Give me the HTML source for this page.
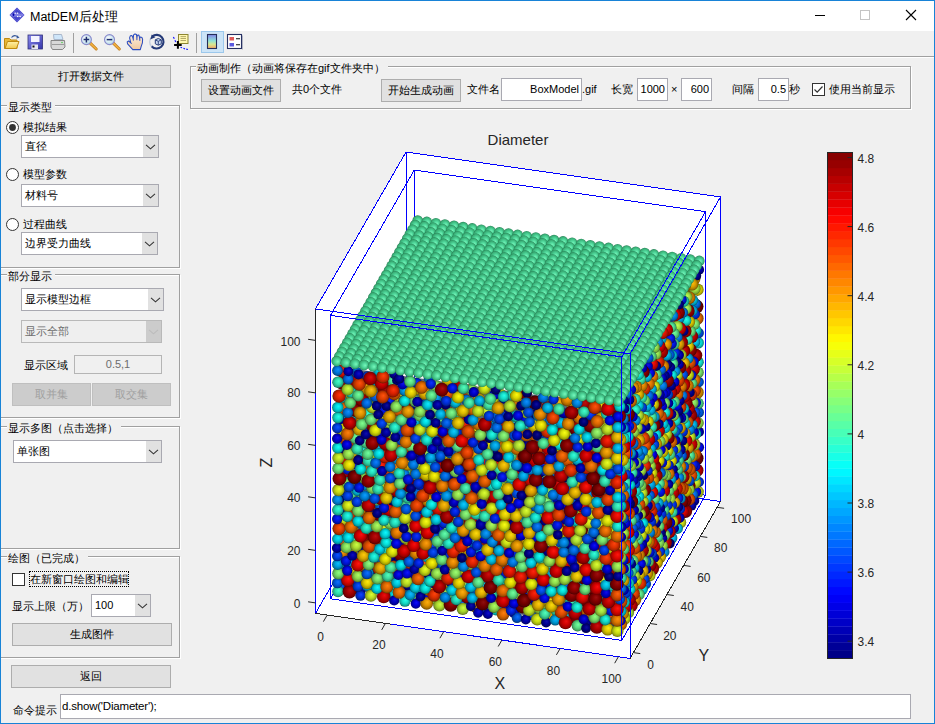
<!DOCTYPE html><html><head><meta charset="utf-8"><style>
*{box-sizing:border-box;margin:0;padding:0}
html,body{width:935px;height:724px;overflow:hidden;background:#f0f0f0}
body{position:relative;font-family:"Liberation Sans",sans-serif;font-size:11px;color:#000}
div{position:absolute}
.t{white-space:nowrap;line-height:14px;font-size:11px}
.fr{border:1px solid #a0a0a0;box-shadow:inset 1px 1px 0 #fff,1px 1px 0 #fff}
.btn{background:#e1e1e1;border:1px solid #adadad;text-align:center;white-space:nowrap}
.btn.dis{background:#cccccc;border-color:#bfbfbf;color:#a0a0a0}
.dd{background:#fff;border:1px solid #a9a9b1;padding-left:3px;white-space:nowrap;overflow:hidden}
.dd .arr{right:0;top:0;bottom:0;background:#e1e1e1}
.dd.dis{background:#efefef;border-color:#b9b9b9;color:#6d6d6d}
.dd.dis .arr{background:#cccccc}
.ed{background:#fff;border:1px solid #a9a9b1;padding:0 2px;white-space:nowrap;overflow:hidden}
.ed.dis{background:#f0f0f0;color:#6d6d6d;border-color:#b5b5b5}
</style></head><body><div style="left:0;top:0;width:935px;height:724px;border:1px solid #1883d7;z-index:50;pointer-events:none"></div><div style="left:0;top:0;width:935px;height:31px;background:#fff"></div><svg style="position:absolute;left:9px;top:7px" width="16" height="16" viewBox="0 0 16 16"><path d="M8 0.5L15.5 8L8 15.5L0.5 8Z" fill="#4646cc"/><path d="M8 2L14 8L8 14L2 8Z" fill="none" stroke="#7a7ae0" stroke-width="0.7" stroke-dasharray="1 1"/><ellipse cx="8" cy="8" rx="7" ry="1.8" fill="#7c7ce2"/><rect x="5.5" y="5.6" width="1.4" height="1.2" fill="#fff"/><rect x="7.8" y="5.6" width="1.4" height="1.2" fill="#fff"/><rect x="8" y="8.9" width="1.4" height="1.2" fill="#fff"/><rect x="10.4" y="8.9" width="1.4" height="1.2" fill="#fff"/><ellipse cx="4.5" cy="7.8" rx="0.9" ry="1.3" fill="#0000a8"/></svg><div class="t" style="left:30px;top:10px;font-size:12.5px;line-height:15px">MatDEM后处理</div><div style="left:815px;top:15px;width:10px;height:1px;background:#000"></div><div style="left:860px;top:10px;width:10px;height:10px;border:1px solid #c4c4c4"></div><svg style="position:absolute;left:905px;top:9px" width="12" height="12" viewBox="0 0 12 12"><path d="M1 1L11 11M11 1L1 11" stroke="#000" stroke-width="1.1"/></svg><svg style="position:absolute;left:0;top:28px" width="260" height="28" viewBox="0 28 260 28">
<defs>
<linearGradient id="tfold" x1="0" y1="0" x2="0" y2="1"><stop offset="0" stop-color="#fff1a8"/><stop offset="1" stop-color="#f2c94c"/></linearGradient>
<linearGradient id="tsave" x1="0" y1="0" x2="1" y2="1"><stop offset="0" stop-color="#8c8cf0"/><stop offset="1" stop-color="#3434a8"/></linearGradient>
<linearGradient id="tcb" x1="0" y1="0" x2="0" y2="1"><stop offset="0" stop-color="#8484e8"/><stop offset="0.45" stop-color="#8ee3d8"/><stop offset="0.7" stop-color="#d8e890"/><stop offset="1" stop-color="#f4a868"/></linearGradient>
<radialGradient id="tlens" cx="0.4" cy="0.4" r="0.6"><stop offset="0" stop-color="#ffffff"/><stop offset="1" stop-color="#b8dcea"/></radialGradient>
<linearGradient id="thand" x1="0" y1="0" x2="0" y2="1"><stop offset="0" stop-color="#fdf1e0"/><stop offset="1" stop-color="#f0c8a0"/></linearGradient>
</defs>
<!-- folder -->
<path d="M4.5 38.5h5l1.5 1.5h6v8.5h-12.5z" fill="#e8b838" stroke="#c08a10" stroke-width="1"/>
<path d="M5 48.5l2.5-7h11.5l-2.5 7z" fill="url(#tfold)" stroke="#c08a10" stroke-width="1"/>
<path d="M11.5 37.5q3-3.5 6.5-0.5" fill="none" stroke="#3a5a9a" stroke-width="1.1"/>
<path d="M17 35.2l2.5 2.5l-3 0.8z" fill="#3a5a9a"/>
<!-- save -->
<rect x="28" y="35" width="14.5" height="14" fill="url(#tsave)" stroke="#30307a" stroke-width="0.8"/>
<rect x="31" y="36" width="8.5" height="6" fill="#f4f4ff"/>
<rect x="31.5" y="44.5" width="6.5" height="4.5" fill="#e8e8f0"/>
<rect x="32.5" y="45.5" width="2" height="2" fill="#111"/>
<!-- printer -->
<path d="M53.5 34.5h8l1.5 5h-9z" fill="#cfe6fa" stroke="#9aaac0" stroke-width="0.8"/>
<path d="M51 40.5h13.5l0.5 6.5l-2.5 2.5h-10l-1.5-2.5z" fill="#d8d8d8" stroke="#7a7a7a" stroke-width="0.9"/>
<path d="M52 44.5h12" stroke="#8c8c8c" stroke-width="0.8"/>
<circle cx="62" cy="42.5" r="0.7" fill="#3c3"/>
<!-- separator -->
<rect x="73" y="33" width="1" height="20" fill="#a0a0a0"/>
<!-- zoom in -->
<path d="M90.2 43.2l6 5.8" stroke="#c07a18" stroke-width="3" stroke-linecap="round"/>
<path d="M90.2 43.2l6 5.8" stroke="#f0b040" stroke-width="1.6" stroke-linecap="round"/>
<circle cx="86.4" cy="39.6" r="5" fill="url(#tlens)" stroke="#8a8acc" stroke-width="1.1"/>
<path d="M83.6 39.6h5.6M86.4 36.8v5.6" stroke="#1e2e6e" stroke-width="1.5"/>
<!-- zoom out -->
<path d="M113.3 43.2l6 5.8" stroke="#c07a18" stroke-width="3" stroke-linecap="round"/>
<path d="M113.3 43.2l6 5.8" stroke="#f0b040" stroke-width="1.6" stroke-linecap="round"/>
<circle cx="109.5" cy="39.6" r="5" fill="url(#tlens)" stroke="#8a8acc" stroke-width="1.1"/>
<path d="M106.7 39.6h5.6" stroke="#1e2e6e" stroke-width="1.5"/>
<!-- hand -->
<path d="M132.8 49.6L127.6 43.8L127.2 41.9L128.6 41L130.8 42.8L129.6 37.8L130.3 35.8L132 35.6L133.2 38.6L133.6 34.9L135 33.9L136.5 34.5L136.9 38.3L137.3 35.2L138.9 35.1L139.7 38L140.4 37L141.9 37.4L142.6 39.2L142.4 42.8L141.2 46.3L140.3 49.6Z" fill="url(#thand)" stroke="#2b4cc0" stroke-width="1.05" stroke-linejoin="round"/>
<path d="M133.2 38.6L133.4 40.6M136.9 38.3L136.9 40.2M139.7 38L139.8 40.8M130.8 42.8L131.6 43.8" fill="none" stroke="#2b4cc0" stroke-width="1"/>
<!-- rotate -->
<path d="M152.2 36.6A6.8 6.8 0 1 1 151.6 46.2" fill="none" stroke="#253a78" stroke-width="2.1"/>
<path d="M151.4 46.3A6.8 6.8 0 0 1 151.3 37.6" fill="none" stroke="#c8d0e0" stroke-width="1.6"/>
<path d="M150.2 39.4L151.8 34.6L155.4 37.2Z" fill="#253a78"/>
<path d="M155.3 39.8l3-1.3l3 1.3v4l-3 1.4l-3-1.4z" fill="#c8d8f0" stroke="#253a78" stroke-width="1"/>
<path d="M155.5 40l2.8 1.3l2.8-1.3M158.3 41.3v3.6" fill="none" stroke="#253a78" stroke-width="0.9"/>
<!-- datacursor -->
<rect x="178.5" y="34.5" width="9.5" height="9" fill="#fff7b0" stroke="#8c8530" stroke-width="1"/>
<path d="M180.5 36.6h5.5M180.5 38.5h5.5M180.5 40.5h5.5" stroke="#aaa060" stroke-width="0.9"/>
<path d="M173.4 37l0.9 1.8M174.9 40.2l0.9 1.8M180.5 47.3l1.6 0.5M183.4 48.3l1.6 0.6M186.2 49.1l1.8 0.4" stroke="#1a1aff" stroke-width="1.2"/>
<path d="M177.9 41v7.8M174.1 44.9h7.6" stroke="#000" stroke-width="2"/>
<!-- separator -->
<rect x="196" y="33" width="1" height="20" fill="#a0a0a0"/>
<!-- pressed colorbar -->
<rect x="201.5" y="31.5" width="22" height="21" fill="#cce4f7" stroke="#9cc8ec" stroke-width="1"/>
<rect x="207.5" y="34.5" width="9" height="14" fill="url(#tcb)" stroke="#252e5a" stroke-width="1.1"/>
<!-- legend -->
<rect x="227.5" y="34.5" width="14" height="14" fill="#fff" stroke="#263062" stroke-width="1.1"/>
<rect x="229.5" y="37" width="4.5" height="3.5" fill="#e05a5a"/>
<rect x="229.5" y="43" width="4.5" height="3.5" fill="#5a5ae0"/>
<path d="M236 38.7h4M236 44.7h4" stroke="#111" stroke-width="1.1"/>
<rect x="242" y="35.5" width="1" height="14" fill="#8a90a8" opacity="0.6"/>
</svg><div style="left:0;top:56px;width:935px;height:1px;background:#a0a0a0"></div><div style="left:0;top:57px;width:935px;height:1px;background:#fff"></div><div class="btn" style="left:11px;top:65px;width:160px;height:23px;line-height:21px">打开数据文件</div><div class="fr" style="left:-2px;top:105px;width:182px;height:163px"></div><div class="t" style="left:7px;top:100px;background:#f0f0f0;padding:0 3px 0 1px">显示类型</div><div class="fr" style="left:-2px;top:274px;width:182px;height:144px"></div><div class="t" style="left:7px;top:269px;background:#f0f0f0;padding:0 3px 0 1px">部分显示</div><div class="fr" style="left:-2px;top:426px;width:182px;height:123px"></div><div class="t" style="left:7px;top:421px;background:#f0f0f0;padding:0 3px 0 1px">显示多图（点击选择）</div><div class="fr" style="left:-2px;top:556px;width:182px;height:102px"></div><div class="t" style="left:7px;top:551px;background:#f0f0f0;padding:0 3px 0 1px">绘图（已完成）</div><div class="fr" style="left:190px;top:66px;width:721px;height:43px"></div><div class="t" style="left:196px;top:61px;background:#f0f0f0;padding:0 3px 0 1px">动画制作（动画将保存在gif文件夹中）</div><svg style="position:absolute;left:6.0px;top:121.0px" width="13" height="13" viewBox="0 0 13 13"><circle cx="6.5" cy="6.5" r="6" fill="#fff" stroke="#333" stroke-width="1"/><circle cx="6.5" cy="6.5" r="3.4" fill="#333"/></svg><div class="t" style="left:23px;top:120px;">模拟结果</div><div class="dd" style="left:21px;top:135px;width:138px;height:23px;line-height:21px">直径<div class="arr" style="width:15px"><svg width="11" height="6" style="position:absolute;left:2px;top:8px" viewBox="0 0 11 6"><path d="M1 0.8L5.5 4.8L10 0.8" fill="none" stroke="#333" stroke-width="1.05"/></svg></div></div><svg style="position:absolute;left:6.0px;top:168.0px" width="13" height="13" viewBox="0 0 13 13"><circle cx="6.5" cy="6.5" r="6" fill="#fff" stroke="#333" stroke-width="1"/></svg><div class="t" style="left:23px;top:167px;">模型参数</div><div class="dd" style="left:21px;top:184px;width:138px;height:23px;line-height:21px">材料号<div class="arr" style="width:15px"><svg width="11" height="6" style="position:absolute;left:2px;top:8px" viewBox="0 0 11 6"><path d="M1 0.8L5.5 4.8L10 0.8" fill="none" stroke="#333" stroke-width="1.05"/></svg></div></div><svg style="position:absolute;left:6.0px;top:218.0px" width="13" height="13" viewBox="0 0 13 13"><circle cx="6.5" cy="6.5" r="6" fill="#fff" stroke="#333" stroke-width="1"/></svg><div class="t" style="left:23px;top:217px;">过程曲线</div><div class="dd" style="left:21px;top:232px;width:137px;height:23px;line-height:21px">边界受力曲线<div class="arr" style="width:15px"><svg width="11" height="6" style="position:absolute;left:2px;top:8px" viewBox="0 0 11 6"><path d="M1 0.8L5.5 4.8L10 0.8" fill="none" stroke="#333" stroke-width="1.05"/></svg></div></div><div class="dd" style="left:21px;top:288px;width:143px;height:23px;line-height:21px">显示模型边框<div class="arr" style="width:15px"><svg width="11" height="6" style="position:absolute;left:2px;top:8px" viewBox="0 0 11 6"><path d="M1 0.8L5.5 4.8L10 0.8" fill="none" stroke="#333" stroke-width="1.05"/></svg></div></div><div class="dd dis" style="left:21px;top:320px;width:141px;height:23px;line-height:21px">显示全部<div class="arr" style="width:15px"><svg width="11" height="6" style="position:absolute;left:2px;top:8px" viewBox="0 0 11 6"><path d="M1 0.8L5.5 4.8L10 0.8" fill="none" stroke="#bcbcbc" stroke-width="1.05"/></svg></div></div><div class="t" style="left:24px;top:358px;">显示区域</div><div class="ed dis" style="left:74px;top:355px;width:88px;height:19px;line-height:17px;text-align:center;">0.5,1</div><div class="btn dis" style="left:12px;top:383px;width:79px;height:23px;line-height:21px">取并集</div><div class="btn dis" style="left:92px;top:383px;width:79px;height:23px;line-height:21px">取交集</div><div class="dd" style="left:13px;top:440px;width:149px;height:23px;line-height:21px">单张图<div class="arr" style="width:15px"><svg width="11" height="6" style="position:absolute;left:2px;top:8px" viewBox="0 0 11 6"><path d="M1 0.8L5.5 4.8L10 0.8" fill="none" stroke="#333" stroke-width="1.05"/></svg></div></div><div style="left:12px;top:573px;width:13px;height:13px;background:#fff;border:1px solid #333"></div><div style="left:29px;top:571px;width:100px;height:16px;border:1px dotted #000"></div><div class="t" style="left:30px;top:572px;">在新窗口绘图和编辑</div><div class="t" style="left:12px;top:599px;">显示上限（万）</div><div class="dd" style="left:91px;top:594px;width:60px;height:23px;line-height:21px">100<div class="arr" style="width:15px"><svg width="11" height="6" style="position:absolute;left:2px;top:8px" viewBox="0 0 11 6"><path d="M1 0.8L5.5 4.8L10 0.8" fill="none" stroke="#333" stroke-width="1.05"/></svg></div></div><div class="btn" style="left:12px;top:623px;width:160px;height:23px;line-height:21px">生成图件</div><div class="btn" style="left:11px;top:665px;width:160px;height:23px;line-height:21px">返回</div><div class="t" style="left:13px;top:703px;">命令提示</div><div class="ed" style="left:60px;top:694px;width:851px;height:25px;line-height:23px;text-align:left;font-size:11.5px;padding-left:1px;letter-spacing:-0.2px">d.show('Diameter');</div><div class="btn" style="left:201px;top:79px;width:80px;height:23px;line-height:21px">设置动画文件</div><div class="t" style="left:292px;top:82px;">共0个文件</div><div class="btn" style="left:381px;top:79px;width:80px;height:23px;line-height:21px">开始生成动画</div><div class="t" style="left:467px;top:82px;">文件名</div><div class="ed" style="left:501px;top:78px;width:81px;height:23px;line-height:21px;text-align:right;">BoxModel</div><div class="t" style="left:582px;top:82px;">.gif</div><div class="t" style="left:611px;top:82px;">长宽</div><div class="ed" style="left:637px;top:78px;width:31px;height:23px;line-height:21px;text-align:right;">1000</div><div class="t" style="left:671px;top:82px;">×</div><div class="ed" style="left:681px;top:78px;width:31px;height:23px;line-height:21px;text-align:right;">600</div><div class="t" style="left:732px;top:82px;">间隔</div><div class="ed" style="left:758px;top:78px;width:31px;height:23px;line-height:21px;text-align:right;">0.5</div><div class="t" style="left:789px;top:82px;">秒</div><div style="left:812px;top:83px;width:13px;height:13px;background:#fff;border:1px solid #333"></div><svg style="position:absolute;left:812px;top:83px" width="13" height="13" viewBox="0 0 13 13"><path d="M2.5 6.5L5.2 9.2L10.5 3.5" fill="none" stroke="#333" stroke-width="1.2"/></svg><div class="t" style="left:829px;top:82px;">使用当前显示</div><svg style="position:absolute;left:0;top:0" width="935" height="724" viewBox="0 0 935 724"><defs><radialGradient id="g0" cx="0.5" cy="0.5" r="0.5" fx="0.56" fy="0.4"><stop offset="0" stop-color="#0f0f90"/><stop offset="0.5" stop-color="#000075"/><stop offset="0.82" stop-color="#000059"/><stop offset="1" stop-color="#000039"/></radialGradient><radialGradient id="g1" cx="0.5" cy="0.5" r="0.5" fx="0.56" fy="0.4"><stop offset="0" stop-color="#0f0f9f"/><stop offset="0.5" stop-color="#000082"/><stop offset="0.82" stop-color="#000064"/><stop offset="1" stop-color="#000040"/></radialGradient><radialGradient id="g2" cx="0.5" cy="0.5" r="0.5" fx="0.56" fy="0.4"><stop offset="0" stop-color="#0f0fae"/><stop offset="0.5" stop-color="#000090"/><stop offset="0.82" stop-color="#00006e"/><stop offset="1" stop-color="#000046"/></radialGradient><radialGradient id="g3" cx="0.5" cy="0.5" r="0.5" fx="0.56" fy="0.4"><stop offset="0" stop-color="#0f0fbd"/><stop offset="0.5" stop-color="#00009e"/><stop offset="0.82" stop-color="#000079"/><stop offset="1" stop-color="#00004d"/></radialGradient><radialGradient id="g4" cx="0.5" cy="0.5" r="0.5" fx="0.56" fy="0.4"><stop offset="0" stop-color="#0f0fcd"/><stop offset="0.5" stop-color="#0000ab"/><stop offset="0.82" stop-color="#000083"/><stop offset="1" stop-color="#000054"/></radialGradient><radialGradient id="g5" cx="0.5" cy="0.5" r="0.5" fx="0.56" fy="0.4"><stop offset="0" stop-color="#0f0fdc"/><stop offset="0.5" stop-color="#0000b9"/><stop offset="0.82" stop-color="#00008e"/><stop offset="1" stop-color="#00005a"/></radialGradient><radialGradient id="g6" cx="0.5" cy="0.5" r="0.5" fx="0.56" fy="0.4"><stop offset="0" stop-color="#0f0feb"/><stop offset="0.5" stop-color="#0000c7"/><stop offset="0.82" stop-color="#000099"/><stop offset="1" stop-color="#000061"/></radialGradient><radialGradient id="g7" cx="0.5" cy="0.5" r="0.5" fx="0.56" fy="0.4"><stop offset="0" stop-color="#0f0ffa"/><stop offset="0.5" stop-color="#0000d4"/><stop offset="0.82" stop-color="#0000a3"/><stop offset="1" stop-color="#000068"/></radialGradient><radialGradient id="g8" cx="0.5" cy="0.5" r="0.5" fx="0.56" fy="0.4"><stop offset="0" stop-color="#0f17ff"/><stop offset="0.5" stop-color="#0007db"/><stop offset="0.82" stop-color="#0005a8"/><stop offset="1" stop-color="#00036b"/></radialGradient><radialGradient id="g9" cx="0.5" cy="0.5" r="0.5" fx="0.56" fy="0.4"><stop offset="0" stop-color="#0f26ff"/><stop offset="0.5" stop-color="#0015db"/><stop offset="0.82" stop-color="#0010a8"/><stop offset="1" stop-color="#000a6b"/></radialGradient><radialGradient id="g10" cx="0.5" cy="0.5" r="0.5" fx="0.56" fy="0.4"><stop offset="0" stop-color="#0f35ff"/><stop offset="0.5" stop-color="#0022db"/><stop offset="0.82" stop-color="#001aa8"/><stop offset="1" stop-color="#00116b"/></radialGradient><radialGradient id="g11" cx="0.5" cy="0.5" r="0.5" fx="0.56" fy="0.4"><stop offset="0" stop-color="#0f44ff"/><stop offset="0.5" stop-color="#0030db"/><stop offset="0.82" stop-color="#0025a8"/><stop offset="1" stop-color="#00176b"/></radialGradient><radialGradient id="g12" cx="0.5" cy="0.5" r="0.5" fx="0.56" fy="0.4"><stop offset="0" stop-color="#0f53ff"/><stop offset="0.5" stop-color="#003edb"/><stop offset="0.82" stop-color="#002fa8"/><stop offset="1" stop-color="#001e6b"/></radialGradient><radialGradient id="g13" cx="0.5" cy="0.5" r="0.5" fx="0.56" fy="0.4"><stop offset="0" stop-color="#0f63ff"/><stop offset="0.5" stop-color="#004bdb"/><stop offset="0.82" stop-color="#003aa8"/><stop offset="1" stop-color="#00256b"/></radialGradient><radialGradient id="g14" cx="0.5" cy="0.5" r="0.5" fx="0.56" fy="0.4"><stop offset="0" stop-color="#0f72ff"/><stop offset="0.5" stop-color="#0059db"/><stop offset="0.82" stop-color="#0044a8"/><stop offset="1" stop-color="#002c6b"/></radialGradient><radialGradient id="g15" cx="0.5" cy="0.5" r="0.5" fx="0.56" fy="0.4"><stop offset="0" stop-color="#0f81ff"/><stop offset="0.5" stop-color="#0067db"/><stop offset="0.82" stop-color="#004fa8"/><stop offset="1" stop-color="#00326b"/></radialGradient><radialGradient id="g16" cx="0.5" cy="0.5" r="0.5" fx="0.56" fy="0.4"><stop offset="0" stop-color="#0f90ff"/><stop offset="0.5" stop-color="#0075db"/><stop offset="0.82" stop-color="#0059a8"/><stop offset="1" stop-color="#00396b"/></radialGradient><radialGradient id="g17" cx="0.5" cy="0.5" r="0.5" fx="0.56" fy="0.4"><stop offset="0" stop-color="#0f9fff"/><stop offset="0.5" stop-color="#0082db"/><stop offset="0.82" stop-color="#0064a8"/><stop offset="1" stop-color="#00406b"/></radialGradient><radialGradient id="g18" cx="0.5" cy="0.5" r="0.5" fx="0.56" fy="0.4"><stop offset="0" stop-color="#0faeff"/><stop offset="0.5" stop-color="#0090db"/><stop offset="0.82" stop-color="#006ea8"/><stop offset="1" stop-color="#00466b"/></radialGradient><radialGradient id="g19" cx="0.5" cy="0.5" r="0.5" fx="0.56" fy="0.4"><stop offset="0" stop-color="#0fbdff"/><stop offset="0.5" stop-color="#009edb"/><stop offset="0.82" stop-color="#0079a8"/><stop offset="1" stop-color="#004d6b"/></radialGradient><radialGradient id="g20" cx="0.5" cy="0.5" r="0.5" fx="0.56" fy="0.4"><stop offset="0" stop-color="#0fcdff"/><stop offset="0.5" stop-color="#00abdb"/><stop offset="0.82" stop-color="#0083a8"/><stop offset="1" stop-color="#00546b"/></radialGradient><radialGradient id="g21" cx="0.5" cy="0.5" r="0.5" fx="0.56" fy="0.4"><stop offset="0" stop-color="#0fdcff"/><stop offset="0.5" stop-color="#00b9db"/><stop offset="0.82" stop-color="#008ea8"/><stop offset="1" stop-color="#005a6b"/></radialGradient><radialGradient id="g22" cx="0.5" cy="0.5" r="0.5" fx="0.56" fy="0.4"><stop offset="0" stop-color="#0febff"/><stop offset="0.5" stop-color="#00c7db"/><stop offset="0.82" stop-color="#0099a8"/><stop offset="1" stop-color="#00616b"/></radialGradient><radialGradient id="g23" cx="0.5" cy="0.5" r="0.5" fx="0.56" fy="0.4"><stop offset="0" stop-color="#0ffaff"/><stop offset="0.5" stop-color="#00d4db"/><stop offset="0.82" stop-color="#00a3a8"/><stop offset="1" stop-color="#00686b"/></radialGradient><radialGradient id="g24" cx="0.5" cy="0.5" r="0.5" fx="0.56" fy="0.4"><stop offset="0" stop-color="#17fffa"/><stop offset="0.5" stop-color="#07dbd4"/><stop offset="0.82" stop-color="#05a8a3"/><stop offset="1" stop-color="#036b68"/></radialGradient><radialGradient id="g25" cx="0.5" cy="0.5" r="0.5" fx="0.56" fy="0.4"><stop offset="0" stop-color="#26ffeb"/><stop offset="0.5" stop-color="#15dbc7"/><stop offset="0.82" stop-color="#10a899"/><stop offset="1" stop-color="#0a6b61"/></radialGradient><radialGradient id="g26" cx="0.5" cy="0.5" r="0.5" fx="0.56" fy="0.4"><stop offset="0" stop-color="#35ffdc"/><stop offset="0.5" stop-color="#22dbb9"/><stop offset="0.82" stop-color="#1aa88e"/><stop offset="1" stop-color="#116b5a"/></radialGradient><radialGradient id="g27" cx="0.5" cy="0.5" r="0.5" fx="0.56" fy="0.4"><stop offset="0" stop-color="#44ffcd"/><stop offset="0.5" stop-color="#30dbab"/><stop offset="0.82" stop-color="#25a883"/><stop offset="1" stop-color="#176b54"/></radialGradient><radialGradient id="g28" cx="0.5" cy="0.5" r="0.5" fx="0.56" fy="0.4"><stop offset="0" stop-color="#53ffbd"/><stop offset="0.5" stop-color="#3edb9e"/><stop offset="0.82" stop-color="#2fa879"/><stop offset="1" stop-color="#1e6b4d"/></radialGradient><radialGradient id="g29" cx="0.5" cy="0.5" r="0.5" fx="0.56" fy="0.4"><stop offset="0" stop-color="#63ffae"/><stop offset="0.5" stop-color="#4bdb90"/><stop offset="0.82" stop-color="#3aa86e"/><stop offset="1" stop-color="#256b46"/></radialGradient><radialGradient id="g30" cx="0.5" cy="0.5" r="0.5" fx="0.56" fy="0.4"><stop offset="0" stop-color="#72ff9f"/><stop offset="0.5" stop-color="#59db82"/><stop offset="0.82" stop-color="#44a864"/><stop offset="1" stop-color="#2c6b40"/></radialGradient><radialGradient id="g31" cx="0.5" cy="0.5" r="0.5" fx="0.56" fy="0.4"><stop offset="0" stop-color="#81ff90"/><stop offset="0.5" stop-color="#67db75"/><stop offset="0.82" stop-color="#4fa859"/><stop offset="1" stop-color="#326b39"/></radialGradient><radialGradient id="g32" cx="0.5" cy="0.5" r="0.5" fx="0.56" fy="0.4"><stop offset="0" stop-color="#90ff81"/><stop offset="0.5" stop-color="#75db67"/><stop offset="0.82" stop-color="#59a84f"/><stop offset="1" stop-color="#396b32"/></radialGradient><radialGradient id="g33" cx="0.5" cy="0.5" r="0.5" fx="0.56" fy="0.4"><stop offset="0" stop-color="#9fff72"/><stop offset="0.5" stop-color="#82db59"/><stop offset="0.82" stop-color="#64a844"/><stop offset="1" stop-color="#406b2c"/></radialGradient><radialGradient id="g34" cx="0.5" cy="0.5" r="0.5" fx="0.56" fy="0.4"><stop offset="0" stop-color="#aeff63"/><stop offset="0.5" stop-color="#90db4b"/><stop offset="0.82" stop-color="#6ea83a"/><stop offset="1" stop-color="#466b25"/></radialGradient><radialGradient id="g35" cx="0.5" cy="0.5" r="0.5" fx="0.56" fy="0.4"><stop offset="0" stop-color="#bdff53"/><stop offset="0.5" stop-color="#9edb3e"/><stop offset="0.82" stop-color="#79a82f"/><stop offset="1" stop-color="#4d6b1e"/></radialGradient><radialGradient id="g36" cx="0.5" cy="0.5" r="0.5" fx="0.56" fy="0.4"><stop offset="0" stop-color="#cdff44"/><stop offset="0.5" stop-color="#abdb30"/><stop offset="0.82" stop-color="#83a825"/><stop offset="1" stop-color="#546b17"/></radialGradient><radialGradient id="g37" cx="0.5" cy="0.5" r="0.5" fx="0.56" fy="0.4"><stop offset="0" stop-color="#dcff35"/><stop offset="0.5" stop-color="#b9db22"/><stop offset="0.82" stop-color="#8ea81a"/><stop offset="1" stop-color="#5a6b11"/></radialGradient><radialGradient id="g38" cx="0.5" cy="0.5" r="0.5" fx="0.56" fy="0.4"><stop offset="0" stop-color="#ebff26"/><stop offset="0.5" stop-color="#c7db15"/><stop offset="0.82" stop-color="#99a810"/><stop offset="1" stop-color="#616b0a"/></radialGradient><radialGradient id="g39" cx="0.5" cy="0.5" r="0.5" fx="0.56" fy="0.4"><stop offset="0" stop-color="#faff17"/><stop offset="0.5" stop-color="#d4db07"/><stop offset="0.82" stop-color="#a3a805"/><stop offset="1" stop-color="#686b03"/></radialGradient><radialGradient id="g40" cx="0.5" cy="0.5" r="0.5" fx="0.56" fy="0.4"><stop offset="0" stop-color="#fffa0f"/><stop offset="0.5" stop-color="#dbd400"/><stop offset="0.82" stop-color="#a8a300"/><stop offset="1" stop-color="#6b6800"/></radialGradient><radialGradient id="g41" cx="0.5" cy="0.5" r="0.5" fx="0.56" fy="0.4"><stop offset="0" stop-color="#ffeb0f"/><stop offset="0.5" stop-color="#dbc700"/><stop offset="0.82" stop-color="#a89900"/><stop offset="1" stop-color="#6b6100"/></radialGradient><radialGradient id="g42" cx="0.5" cy="0.5" r="0.5" fx="0.56" fy="0.4"><stop offset="0" stop-color="#ffdc0f"/><stop offset="0.5" stop-color="#dbb900"/><stop offset="0.82" stop-color="#a88e00"/><stop offset="1" stop-color="#6b5a00"/></radialGradient><radialGradient id="g43" cx="0.5" cy="0.5" r="0.5" fx="0.56" fy="0.4"><stop offset="0" stop-color="#ffcd0f"/><stop offset="0.5" stop-color="#dbab00"/><stop offset="0.82" stop-color="#a88300"/><stop offset="1" stop-color="#6b5400"/></radialGradient><radialGradient id="g44" cx="0.5" cy="0.5" r="0.5" fx="0.56" fy="0.4"><stop offset="0" stop-color="#ffbd0f"/><stop offset="0.5" stop-color="#db9e00"/><stop offset="0.82" stop-color="#a87900"/><stop offset="1" stop-color="#6b4d00"/></radialGradient><radialGradient id="g45" cx="0.5" cy="0.5" r="0.5" fx="0.56" fy="0.4"><stop offset="0" stop-color="#ffae0f"/><stop offset="0.5" stop-color="#db9000"/><stop offset="0.82" stop-color="#a86e00"/><stop offset="1" stop-color="#6b4600"/></radialGradient><radialGradient id="g46" cx="0.5" cy="0.5" r="0.5" fx="0.56" fy="0.4"><stop offset="0" stop-color="#ff9f0f"/><stop offset="0.5" stop-color="#db8200"/><stop offset="0.82" stop-color="#a86400"/><stop offset="1" stop-color="#6b4000"/></radialGradient><radialGradient id="g47" cx="0.5" cy="0.5" r="0.5" fx="0.56" fy="0.4"><stop offset="0" stop-color="#ff900f"/><stop offset="0.5" stop-color="#db7500"/><stop offset="0.82" stop-color="#a85900"/><stop offset="1" stop-color="#6b3900"/></radialGradient><radialGradient id="g48" cx="0.5" cy="0.5" r="0.5" fx="0.56" fy="0.4"><stop offset="0" stop-color="#ff810f"/><stop offset="0.5" stop-color="#db6700"/><stop offset="0.82" stop-color="#a84f00"/><stop offset="1" stop-color="#6b3200"/></radialGradient><radialGradient id="g49" cx="0.5" cy="0.5" r="0.5" fx="0.56" fy="0.4"><stop offset="0" stop-color="#ff720f"/><stop offset="0.5" stop-color="#db5900"/><stop offset="0.82" stop-color="#a84400"/><stop offset="1" stop-color="#6b2c00"/></radialGradient><radialGradient id="g50" cx="0.5" cy="0.5" r="0.5" fx="0.56" fy="0.4"><stop offset="0" stop-color="#ff630f"/><stop offset="0.5" stop-color="#db4b00"/><stop offset="0.82" stop-color="#a83a00"/><stop offset="1" stop-color="#6b2500"/></radialGradient><radialGradient id="g51" cx="0.5" cy="0.5" r="0.5" fx="0.56" fy="0.4"><stop offset="0" stop-color="#ff530f"/><stop offset="0.5" stop-color="#db3e00"/><stop offset="0.82" stop-color="#a82f00"/><stop offset="1" stop-color="#6b1e00"/></radialGradient><radialGradient id="g52" cx="0.5" cy="0.5" r="0.5" fx="0.56" fy="0.4"><stop offset="0" stop-color="#ff440f"/><stop offset="0.5" stop-color="#db3000"/><stop offset="0.82" stop-color="#a82500"/><stop offset="1" stop-color="#6b1700"/></radialGradient><radialGradient id="g53" cx="0.5" cy="0.5" r="0.5" fx="0.56" fy="0.4"><stop offset="0" stop-color="#ff350f"/><stop offset="0.5" stop-color="#db2200"/><stop offset="0.82" stop-color="#a81a00"/><stop offset="1" stop-color="#6b1100"/></radialGradient><radialGradient id="g54" cx="0.5" cy="0.5" r="0.5" fx="0.56" fy="0.4"><stop offset="0" stop-color="#ff260f"/><stop offset="0.5" stop-color="#db1500"/><stop offset="0.82" stop-color="#a81000"/><stop offset="1" stop-color="#6b0a00"/></radialGradient><radialGradient id="g55" cx="0.5" cy="0.5" r="0.5" fx="0.56" fy="0.4"><stop offset="0" stop-color="#ff170f"/><stop offset="0.5" stop-color="#db0700"/><stop offset="0.82" stop-color="#a80500"/><stop offset="1" stop-color="#6b0300"/></radialGradient><radialGradient id="g56" cx="0.5" cy="0.5" r="0.5" fx="0.56" fy="0.4"><stop offset="0" stop-color="#fa0f0f"/><stop offset="0.5" stop-color="#d40000"/><stop offset="0.82" stop-color="#a30000"/><stop offset="1" stop-color="#680000"/></radialGradient><radialGradient id="g57" cx="0.5" cy="0.5" r="0.5" fx="0.56" fy="0.4"><stop offset="0" stop-color="#eb0f0f"/><stop offset="0.5" stop-color="#c70000"/><stop offset="0.82" stop-color="#990000"/><stop offset="1" stop-color="#610000"/></radialGradient><radialGradient id="g58" cx="0.5" cy="0.5" r="0.5" fx="0.56" fy="0.4"><stop offset="0" stop-color="#dc0f0f"/><stop offset="0.5" stop-color="#b90000"/><stop offset="0.82" stop-color="#8e0000"/><stop offset="1" stop-color="#5a0000"/></radialGradient><radialGradient id="g59" cx="0.5" cy="0.5" r="0.5" fx="0.56" fy="0.4"><stop offset="0" stop-color="#cd0f0f"/><stop offset="0.5" stop-color="#ab0000"/><stop offset="0.82" stop-color="#830000"/><stop offset="1" stop-color="#540000"/></radialGradient><radialGradient id="g60" cx="0.5" cy="0.5" r="0.5" fx="0.56" fy="0.4"><stop offset="0" stop-color="#bd0f0f"/><stop offset="0.5" stop-color="#9e0000"/><stop offset="0.82" stop-color="#790000"/><stop offset="1" stop-color="#4d0000"/></radialGradient><radialGradient id="g61" cx="0.5" cy="0.5" r="0.5" fx="0.56" fy="0.4"><stop offset="0" stop-color="#ae0f0f"/><stop offset="0.5" stop-color="#900000"/><stop offset="0.82" stop-color="#6e0000"/><stop offset="1" stop-color="#460000"/></radialGradient><radialGradient id="g62" cx="0.5" cy="0.5" r="0.5" fx="0.56" fy="0.4"><stop offset="0" stop-color="#9f0f0f"/><stop offset="0.5" stop-color="#820000"/><stop offset="0.82" stop-color="#640000"/><stop offset="1" stop-color="#400000"/></radialGradient><radialGradient id="g63" cx="0.5" cy="0.5" r="0.5" fx="0.56" fy="0.4"><stop offset="0" stop-color="#900f0f"/><stop offset="0.5" stop-color="#750000"/><stop offset="0.82" stop-color="#590000"/><stop offset="1" stop-color="#390000"/></radialGradient><radialGradient id="gp" cx="0.5" cy="0.5" r="0.5" fx="0.62" fy="0.55"><stop offset="0" stop-color="#78f8bc"/><stop offset="0.45" stop-color="#4fd69a"/><stop offset="0.85" stop-color="#38ac74"/><stop offset="1" stop-color="#247c52"/></radialGradient></defs><polygon points="315.5,613.4 630.1,658.4 720.5,501.5 720.5,197.0 406.0,152.0 315.5,308.9" fill="#fff"/><line x1="406.0" y1="456.5" x2="406.0" y2="152.0" stroke="#0000ff" stroke-width="1.0" shape-rendering="crispEdges"/><line x1="406.0" y1="152.0" x2="720.5" y2="197.0" stroke="#0000ff" stroke-width="1.0" shape-rendering="crispEdges"/><line x1="315.5" y1="308.9" x2="406.0" y2="152.0" stroke="#0000ff" stroke-width="1.0" shape-rendering="crispEdges"/><line x1="315.5" y1="613.4" x2="406.0" y2="456.5" stroke="#0000ff" stroke-width="1.0" shape-rendering="crispEdges"/><line x1="720.5" y1="501.5" x2="720.5" y2="197.0" stroke="#0000ff" stroke-width="1.0" shape-rendering="crispEdges"/><line x1="406.0" y1="456.5" x2="720.5" y2="501.5" stroke="#0000ff" stroke-width="1.0" shape-rendering="crispEdges"/><line x1="414.3" y1="453.5" x2="414.3" y2="170.0" stroke="#0000ff" stroke-width="1.0" shape-rendering="crispEdges"/><line x1="414.3" y1="170.0" x2="705.5" y2="211.7" stroke="#0000ff" stroke-width="1.0" shape-rendering="crispEdges"/><line x1="330.5" y1="315.3" x2="414.3" y2="170.0" stroke="#0000ff" stroke-width="1.0" shape-rendering="crispEdges"/><line x1="705.5" y1="495.2" x2="705.5" y2="211.7" stroke="#0000ff" stroke-width="1.0" shape-rendering="crispEdges"/><line x1="330.5" y1="598.8" x2="414.3" y2="453.5" stroke="#0000ff" stroke-width="1.0" shape-rendering="crispEdges"/><line x1="414.3" y1="453.5" x2="705.5" y2="495.2" stroke="#0000ff" stroke-width="1.0" shape-rendering="crispEdges"/><polygon points="340.3,588.9 617.0,628.4 617.0,406.6 340.3,367.1" fill="#5a6478"/><polygon points="615.5,628.2 694.7,491.0 694.7,269.2 615.5,406.4" fill="#5a6478"/><g><circle cx="697.6" cy="491.8" r="6.2" fill="url(#g38)"/><circle cx="698.8" cy="481.9" r="5.2" fill="url(#g11)"/><circle cx="696.1" cy="491.7" r="5.2" fill="url(#g8)"/><circle cx="696.7" cy="470.3" r="6.8" fill="url(#g58)"/><circle cx="694.3" cy="500.7" r="5.0" fill="url(#g3)"/><circle cx="695.0" cy="482.6" r="6.1" fill="url(#g37)"/><circle cx="696.5" cy="458.2" r="7.0" fill="url(#g63)"/><circle cx="692.9" cy="494.4" r="5.4" fill="url(#g15)"/><circle cx="691.4" cy="505.6" r="5.0" fill="url(#g3)"/><circle cx="694.7" cy="475.8" r="5.7" fill="url(#g24)"/><circle cx="698.9" cy="447.3" r="5.2" fill="url(#g8)"/><circle cx="688.7" cy="485.8" r="6.9" fill="url(#g61)"/><circle cx="695.4" cy="466.1" r="5.1" fill="url(#g8)"/><circle cx="691.9" cy="439.1" r="6.5" fill="url(#g49)"/><circle cx="688.7" cy="499.2" r="6.6" fill="url(#g50)"/><circle cx="694.7" cy="454.0" r="6.5" fill="url(#g49)"/><circle cx="699.0" cy="431.9" r="5.0" fill="url(#g4)"/><circle cx="690.8" cy="475.3" r="6.6" fill="url(#g50)"/><circle cx="685.3" cy="511.1" r="6.9" fill="url(#g60)"/><circle cx="693.3" cy="464.7" r="5.2" fill="url(#g9)"/><circle cx="688.6" cy="489.2" r="6.1" fill="url(#g35)"/><circle cx="697.8" cy="422.9" r="6.0" fill="url(#g34)"/><circle cx="694.4" cy="444.6" r="6.1" fill="url(#g36)"/><circle cx="684.8" cy="500.2" r="6.9" fill="url(#g61)"/><circle cx="689.3" cy="480.9" r="5.3" fill="url(#g13)"/><circle cx="695.7" cy="433.8" r="5.6" fill="url(#g23)"/><circle cx="691.3" cy="456.2" r="6.4" fill="url(#g45)"/><circle cx="698.6" cy="412.4" r="5.4" fill="url(#g14)"/><circle cx="689.1" cy="469.2" r="6.5" fill="url(#g49)"/><circle cx="682.0" cy="511.6" r="6.8" fill="url(#g56)"/><circle cx="685.4" cy="490.9" r="6.3" fill="url(#g41)"/><circle cx="697.9" cy="403.3" r="5.9" fill="url(#g29)"/><circle cx="694.1" cy="421.5" r="6.8" fill="url(#g57)"/><circle cx="690.7" cy="444.2" r="6.8" fill="url(#g57)"/><circle cx="680.0" cy="522.3" r="6.2" fill="url(#g38)"/><circle cx="694.0" cy="432.4" r="5.0" fill="url(#g5)"/><circle cx="685.7" cy="478.7" r="6.3" fill="url(#g43)"/><circle cx="689.4" cy="455.7" r="5.9" fill="url(#g29)"/><circle cx="681.5" cy="501.3" r="6.9" fill="url(#g62)"/><circle cx="697.3" cy="392.4" r="6.4" fill="url(#g45)"/><circle cx="686.2" cy="468.1" r="6.5" fill="url(#g49)"/><circle cx="695.1" cy="412.2" r="5.3" fill="url(#g13)"/><circle cx="417.7" cy="220.6" r="5.3" fill="url(#gp)"/><circle cx="682.2" cy="488.5" r="6.6" fill="url(#g50)"/><circle cx="695.9" cy="402.6" r="5.2" fill="url(#g9)"/><circle cx="679.5" cy="517.8" r="5.1" fill="url(#g5)"/><circle cx="698.6" cy="382.1" r="5.3" fill="url(#g14)"/><circle cx="677.3" cy="528.4" r="5.6" fill="url(#g21)"/><circle cx="692.3" cy="424.7" r="5.5" fill="url(#g20)"/><circle cx="689.8" cy="436.7" r="6.1" fill="url(#g37)"/><circle cx="426.8" cy="221.9" r="5.3" fill="url(#gp)"/><circle cx="679.9" cy="508.9" r="5.2" fill="url(#g11)"/><circle cx="687.5" cy="447.6" r="6.4" fill="url(#g44)"/><circle cx="682.8" cy="476.7" r="6.8" fill="url(#g58)"/><circle cx="685.9" cy="460.1" r="5.9" fill="url(#g32)"/><circle cx="435.9" cy="223.2" r="5.3" fill="url(#gp)"/><circle cx="444.9" cy="224.5" r="5.3" fill="url(#gp)"/><circle cx="680.2" cy="498.4" r="5.5" fill="url(#g19)"/><circle cx="697.8" cy="372.4" r="6.0" fill="url(#g32)"/><circle cx="415.1" cy="225.1" r="5.3" fill="url(#gp)"/><circle cx="694.3" cy="390.7" r="6.6" fill="url(#g51)"/><circle cx="690.4" cy="415.1" r="6.9" fill="url(#g60)"/><circle cx="454.0" cy="225.8" r="5.3" fill="url(#gp)"/><circle cx="689.4" cy="429.5" r="5.5" fill="url(#g17)"/><circle cx="424.2" cy="226.4" r="5.3" fill="url(#gp)"/><circle cx="692.6" cy="402.8" r="6.0" fill="url(#g33)"/><circle cx="679.6" cy="488.0" r="6.5" fill="url(#g49)"/><circle cx="463.1" cy="227.1" r="5.3" fill="url(#gp)"/><circle cx="674.7" cy="519.0" r="6.8" fill="url(#g58)"/><circle cx="683.8" cy="466.5" r="5.3" fill="url(#g13)"/><circle cx="433.2" cy="227.7" r="5.3" fill="url(#gp)"/><circle cx="698.1" cy="362.2" r="5.7" fill="url(#g25)"/><circle cx="685.7" cy="440.8" r="6.7" fill="url(#g55)"/><circle cx="678.1" cy="506.9" r="5.0" fill="url(#g2)"/><circle cx="472.2" cy="228.4" r="5.3" fill="url(#gp)"/><circle cx="442.3" cy="229.0" r="5.3" fill="url(#gp)"/><circle cx="683.0" cy="454.5" r="6.9" fill="url(#g61)"/><circle cx="694.1" cy="379.9" r="6.5" fill="url(#g47)"/><circle cx="412.5" cy="229.7" r="5.3" fill="url(#gp)"/><circle cx="481.3" cy="229.7" r="5.3" fill="url(#gp)"/><circle cx="678.2" cy="498.0" r="5.2" fill="url(#g10)"/><circle cx="680.5" cy="476.6" r="5.9" fill="url(#g31)"/><circle cx="674.0" cy="528.3" r="5.0" fill="url(#g4)"/><circle cx="451.4" cy="230.3" r="5.3" fill="url(#gp)"/><circle cx="671.9" cy="538.0" r="5.5" fill="url(#g20)"/><circle cx="421.5" cy="231.0" r="5.3" fill="url(#gp)"/><circle cx="490.4" cy="231.0" r="5.3" fill="url(#gp)"/><circle cx="460.5" cy="231.6" r="5.3" fill="url(#gp)"/><circle cx="687.0" cy="422.0" r="6.5" fill="url(#g49)"/><circle cx="430.6" cy="232.3" r="5.3" fill="url(#gp)"/><circle cx="499.5" cy="232.3" r="5.3" fill="url(#gp)"/><circle cx="690.5" cy="394.6" r="6.6" fill="url(#g52)"/><circle cx="675.5" cy="511.0" r="5.1" fill="url(#g6)"/><circle cx="688.1" cy="408.7" r="6.8" fill="url(#g58)"/><circle cx="469.6" cy="232.9" r="5.3" fill="url(#gp)"/><circle cx="679.9" cy="466.6" r="6.4" fill="url(#g46)"/><circle cx="439.7" cy="233.6" r="5.3" fill="url(#gp)"/><circle cx="695.4" cy="355.3" r="6.9" fill="url(#g60)"/><circle cx="508.5" cy="233.6" r="5.3" fill="url(#gp)"/><circle cx="672.1" cy="521.4" r="6.2" fill="url(#g39)"/><circle cx="409.8" cy="234.2" r="5.3" fill="url(#gp)"/><circle cx="698.2" cy="342.9" r="5.7" fill="url(#g24)"/><circle cx="478.7" cy="234.2" r="5.3" fill="url(#gp)"/><circle cx="693.1" cy="369.2" r="6.8" fill="url(#g58)"/><circle cx="676.1" cy="488.4" r="6.7" fill="url(#g54)"/><circle cx="682.5" cy="446.2" r="6.3" fill="url(#g41)"/><circle cx="448.8" cy="234.9" r="5.3" fill="url(#gp)"/><circle cx="684.3" cy="433.1" r="6.3" fill="url(#g43)"/><circle cx="517.6" cy="234.9" r="5.3" fill="url(#gp)"/><circle cx="678.7" cy="477.5" r="5.5" fill="url(#g17)"/><circle cx="669.8" cy="543.5" r="4.9" fill="url(#g0)"/><circle cx="418.9" cy="235.5" r="5.3" fill="url(#gp)"/><circle cx="487.8" cy="235.5" r="5.3" fill="url(#gp)"/><circle cx="674.0" cy="502.3" r="6.3" fill="url(#g43)"/><circle cx="681.7" cy="455.6" r="5.3" fill="url(#g14)"/><circle cx="691.4" cy="383.2" r="5.9" fill="url(#g30)"/><circle cx="669.0" cy="531.6" r="6.8" fill="url(#g57)"/><circle cx="457.9" cy="236.2" r="5.3" fill="url(#gp)"/><circle cx="526.7" cy="236.2" r="5.3" fill="url(#gp)"/><circle cx="428.0" cy="236.8" r="5.3" fill="url(#gp)"/><circle cx="496.8" cy="236.8" r="5.3" fill="url(#gp)"/><circle cx="698.6" cy="333.0" r="5.3" fill="url(#g13)"/><circle cx="467.0" cy="237.5" r="5.3" fill="url(#gp)"/><circle cx="535.8" cy="237.5" r="5.3" fill="url(#gp)"/><circle cx="685.0" cy="423.8" r="5.7" fill="url(#g24)"/><circle cx="437.1" cy="238.1" r="5.3" fill="url(#gp)"/><circle cx="505.9" cy="238.1" r="5.3" fill="url(#gp)"/><circle cx="686.9" cy="413.5" r="5.0" fill="url(#g4)"/><circle cx="689.9" cy="392.6" r="4.9" fill="url(#g1)"/><circle cx="407.2" cy="238.7" r="5.3" fill="url(#gp)"/><circle cx="476.1" cy="238.8" r="5.3" fill="url(#gp)"/><circle cx="671.8" cy="511.9" r="5.8" fill="url(#g27)"/><circle cx="544.9" cy="238.8" r="5.3" fill="url(#gp)"/><circle cx="446.2" cy="239.4" r="5.3" fill="url(#gp)"/><circle cx="515.0" cy="239.4" r="5.3" fill="url(#gp)"/><circle cx="693.7" cy="361.6" r="5.1" fill="url(#g8)"/><circle cx="416.3" cy="240.0" r="5.3" fill="url(#gp)"/><circle cx="685.7" cy="403.0" r="6.9" fill="url(#g61)"/><circle cx="485.1" cy="240.1" r="5.3" fill="url(#gp)"/><circle cx="554.0" cy="240.1" r="5.3" fill="url(#gp)"/><circle cx="682.4" cy="440.8" r="4.9" fill="url(#g1)"/><circle cx="677.2" cy="469.4" r="5.9" fill="url(#g29)"/><circle cx="691.3" cy="375.3" r="5.2" fill="url(#g9)"/><circle cx="455.3" cy="240.7" r="5.3" fill="url(#gp)"/><circle cx="670.2" cy="522.7" r="5.1" fill="url(#g6)"/><circle cx="524.1" cy="240.7" r="5.3" fill="url(#gp)"/><circle cx="680.8" cy="449.6" r="5.0" fill="url(#g3)"/><circle cx="672.5" cy="492.6" r="6.8" fill="url(#g58)"/><circle cx="678.1" cy="460.3" r="5.8" fill="url(#g28)"/><circle cx="665.2" cy="542.6" r="6.8" fill="url(#g58)"/><circle cx="425.4" cy="241.3" r="5.3" fill="url(#gp)"/><circle cx="494.2" cy="241.4" r="5.3" fill="url(#gp)"/><circle cx="563.0" cy="241.4" r="5.3" fill="url(#gp)"/><circle cx="682.7" cy="431.5" r="5.3" fill="url(#g11)"/><circle cx="674.2" cy="481.7" r="6.5" fill="url(#g47)"/><circle cx="464.4" cy="242.0" r="5.3" fill="url(#gp)"/><circle cx="533.2" cy="242.0" r="5.3" fill="url(#gp)"/><circle cx="671.9" cy="504.7" r="5.2" fill="url(#g11)"/><circle cx="434.5" cy="242.6" r="5.3" fill="url(#gp)"/><circle cx="503.3" cy="242.7" r="5.3" fill="url(#gp)"/><circle cx="697.1" cy="318.4" r="6.5" fill="url(#g48)"/><circle cx="572.1" cy="242.7" r="5.3" fill="url(#gp)"/><circle cx="694.7" cy="341.9" r="5.6" fill="url(#g21)"/><circle cx="668.0" cy="530.7" r="5.2" fill="url(#g9)"/><circle cx="404.6" cy="243.3" r="5.3" fill="url(#gp)"/><circle cx="473.4" cy="243.3" r="5.3" fill="url(#gp)"/><circle cx="542.3" cy="243.3" r="5.3" fill="url(#gp)"/><circle cx="695.9" cy="330.6" r="5.7" fill="url(#g25)"/><circle cx="687.3" cy="385.6" r="6.4" fill="url(#g46)"/><circle cx="443.6" cy="243.9" r="5.3" fill="url(#gp)"/><circle cx="512.4" cy="244.0" r="5.3" fill="url(#gp)"/><circle cx="581.2" cy="244.0" r="5.3" fill="url(#gp)"/><circle cx="682.9" cy="418.6" r="5.9" fill="url(#g29)"/><circle cx="664.0" cy="551.9" r="5.5" fill="url(#g18)"/><circle cx="413.7" cy="244.6" r="5.3" fill="url(#gp)"/><circle cx="674.2" cy="442.9" r="6.6" fill="url(#g52)"/><circle cx="482.5" cy="244.6" r="5.3" fill="url(#gp)"/><circle cx="551.3" cy="244.6" r="5.3" fill="url(#gp)"/><circle cx="452.7" cy="245.2" r="5.3" fill="url(#gp)"/><circle cx="521.5" cy="245.3" r="5.3" fill="url(#gp)"/><circle cx="590.3" cy="245.3" r="5.3" fill="url(#gp)"/><circle cx="422.8" cy="245.9" r="5.3" fill="url(#gp)"/><circle cx="491.6" cy="245.9" r="5.3" fill="url(#gp)"/><circle cx="560.4" cy="245.9" r="5.3" fill="url(#gp)"/><circle cx="689.3" cy="362.6" r="6.6" fill="url(#g50)"/><circle cx="675.3" cy="465.2" r="5.8" fill="url(#g29)"/><circle cx="677.4" cy="454.2" r="5.4" fill="url(#g14)"/><circle cx="683.6" cy="408.6" r="5.6" fill="url(#g22)"/><circle cx="687.8" cy="374.9" r="6.2" fill="url(#g38)"/><circle cx="461.7" cy="246.5" r="5.3" fill="url(#gp)"/><circle cx="530.6" cy="246.6" r="5.3" fill="url(#gp)"/><circle cx="599.4" cy="246.6" r="5.3" fill="url(#gp)"/><circle cx="665.6" cy="522.6" r="6.9" fill="url(#g62)"/><circle cx="696.5" cy="306.6" r="7.0" fill="url(#g63)"/><circle cx="671.6" cy="486.2" r="6.1" fill="url(#g36)"/><circle cx="668.2" cy="509.8" r="6.2" fill="url(#g39)"/><circle cx="431.9" cy="247.2" r="5.3" fill="url(#gp)"/><circle cx="500.7" cy="247.2" r="5.3" fill="url(#gp)"/><circle cx="679.7" cy="427.8" r="6.3" fill="url(#g43)"/><circle cx="569.5" cy="247.2" r="5.3" fill="url(#gp)"/><circle cx="674.0" cy="475.9" r="5.2" fill="url(#g8)"/><circle cx="683.6" cy="396.1" r="6.8" fill="url(#g57)"/><circle cx="402.0" cy="247.8" r="5.3" fill="url(#gp)"/><circle cx="689.9" cy="350.0" r="6.9" fill="url(#g61)"/><circle cx="669.6" cy="498.6" r="6.0" fill="url(#g35)"/><circle cx="470.8" cy="247.8" r="5.3" fill="url(#gp)"/><circle cx="664.4" cy="535.0" r="6.0" fill="url(#g33)"/><circle cx="539.7" cy="247.9" r="5.3" fill="url(#gp)"/><circle cx="608.5" cy="247.9" r="5.3" fill="url(#gp)"/><circle cx="441.0" cy="248.5" r="5.3" fill="url(#gp)"/><circle cx="509.8" cy="248.5" r="5.3" fill="url(#gp)"/><circle cx="578.6" cy="248.5" r="5.3" fill="url(#gp)"/><circle cx="411.1" cy="249.1" r="5.3" fill="url(#gp)"/><circle cx="694.1" cy="324.1" r="5.9" fill="url(#g32)"/><circle cx="479.9" cy="249.1" r="5.3" fill="url(#gp)"/><circle cx="548.7" cy="249.2" r="5.3" fill="url(#gp)"/><circle cx="617.6" cy="249.2" r="5.3" fill="url(#gp)"/><circle cx="691.3" cy="336.4" r="6.8" fill="url(#g58)"/><circle cx="662.0" cy="545.7" r="6.0" fill="url(#g35)"/><circle cx="450.0" cy="249.8" r="5.3" fill="url(#gp)"/><circle cx="518.9" cy="249.8" r="5.3" fill="url(#gp)"/><circle cx="587.7" cy="249.8" r="5.3" fill="url(#gp)"/><circle cx="681.2" cy="417.9" r="5.1" fill="url(#g6)"/><circle cx="659.8" cy="556.9" r="6.3" fill="url(#g42)"/><circle cx="420.2" cy="250.4" r="5.3" fill="url(#gp)"/><circle cx="489.0" cy="250.4" r="5.3" fill="url(#gp)"/><circle cx="557.8" cy="250.5" r="5.3" fill="url(#gp)"/><circle cx="626.6" cy="250.5" r="5.3" fill="url(#gp)"/><circle cx="677.6" cy="437.6" r="5.5" fill="url(#g20)"/><circle cx="459.1" cy="251.1" r="5.3" fill="url(#gp)"/><circle cx="528.0" cy="251.1" r="5.3" fill="url(#gp)"/><circle cx="596.8" cy="251.1" r="5.3" fill="url(#gp)"/><circle cx="674.5" cy="459.1" r="5.2" fill="url(#g11)"/><circle cx="683.5" cy="384.6" r="6.8" fill="url(#g57)"/><circle cx="675.2" cy="447.9" r="6.1" fill="url(#g36)"/><circle cx="429.3" cy="251.7" r="5.3" fill="url(#gp)"/><circle cx="498.1" cy="251.7" r="5.3" fill="url(#gp)"/><circle cx="566.9" cy="251.8" r="5.3" fill="url(#gp)"/><circle cx="635.7" cy="251.8" r="5.3" fill="url(#gp)"/><circle cx="697.5" cy="289.7" r="6.2" fill="url(#g40)"/><circle cx="399.4" cy="252.3" r="5.3" fill="url(#gp)"/><circle cx="468.2" cy="252.4" r="5.3" fill="url(#gp)"/><circle cx="537.0" cy="252.4" r="5.3" fill="url(#gp)"/><circle cx="667.5" cy="505.3" r="5.2" fill="url(#g11)"/><circle cx="605.9" cy="252.4" r="5.3" fill="url(#gp)"/><circle cx="672.9" cy="469.2" r="5.0" fill="url(#g2)"/><circle cx="694.8" cy="314.1" r="5.2" fill="url(#g11)"/><circle cx="661.0" cy="527.6" r="6.8" fill="url(#g56)"/><circle cx="670.7" cy="479.2" r="5.6" fill="url(#g20)"/><circle cx="438.4" cy="253.0" r="5.3" fill="url(#gp)"/><circle cx="679.8" cy="407.2" r="6.6" fill="url(#g51)"/><circle cx="507.2" cy="253.0" r="5.3" fill="url(#gp)"/><circle cx="576.0" cy="253.1" r="5.3" fill="url(#gp)"/><circle cx="644.8" cy="253.1" r="5.3" fill="url(#gp)"/><circle cx="665.6" cy="515.7" r="5.3" fill="url(#g13)"/><circle cx="687.9" cy="358.4" r="5.5" fill="url(#g19)"/><circle cx="668.3" cy="490.9" r="5.9" fill="url(#g31)"/><circle cx="408.5" cy="253.6" r="5.3" fill="url(#gp)"/><circle cx="684.5" cy="370.5" r="6.8" fill="url(#g59)"/><circle cx="477.3" cy="253.7" r="5.3" fill="url(#gp)"/><circle cx="546.1" cy="253.7" r="5.3" fill="url(#gp)"/><circle cx="614.9" cy="253.7" r="5.3" fill="url(#gp)"/><circle cx="662.3" cy="538.3" r="5.0" fill="url(#g4)"/><circle cx="695.6" cy="303.7" r="5.4" fill="url(#g15)"/><circle cx="677.8" cy="427.9" r="5.3" fill="url(#g13)"/><circle cx="447.4" cy="254.3" r="5.3" fill="url(#gp)"/><circle cx="516.3" cy="254.3" r="5.3" fill="url(#gp)"/><circle cx="585.1" cy="254.4" r="5.3" fill="url(#gp)"/><circle cx="653.9" cy="254.4" r="5.3" fill="url(#gp)"/><circle cx="682.1" cy="395.5" r="5.4" fill="url(#g16)"/><circle cx="659.8" cy="551.3" r="5.3" fill="url(#g11)"/><circle cx="417.6" cy="254.9" r="5.3" fill="url(#gp)"/><circle cx="486.4" cy="255.0" r="5.3" fill="url(#gp)"/><circle cx="555.2" cy="255.0" r="5.3" fill="url(#gp)"/><circle cx="624.0" cy="255.0" r="5.3" fill="url(#gp)"/><circle cx="694.1" cy="278.6" r="6.4" fill="url(#g45)"/><circle cx="687.9" cy="346.4" r="6.3" fill="url(#g41)"/><circle cx="456.5" cy="255.6" r="5.3" fill="url(#gp)"/><circle cx="525.3" cy="255.6" r="5.3" fill="url(#gp)"/><circle cx="594.2" cy="255.7" r="5.3" fill="url(#gp)"/><circle cx="663.0" cy="255.7" r="5.3" fill="url(#gp)"/><circle cx="678.8" cy="418.2" r="4.9" fill="url(#g2)"/><circle cx="656.6" cy="562.5" r="6.3" fill="url(#g42)"/><circle cx="690.1" cy="331.4" r="5.9" fill="url(#g31)"/><circle cx="426.7" cy="256.2" r="5.3" fill="url(#gp)"/><circle cx="675.4" cy="440.2" r="5.0" fill="url(#g5)"/><circle cx="495.5" cy="256.3" r="5.3" fill="url(#gp)"/><circle cx="564.3" cy="256.3" r="5.3" fill="url(#gp)"/><circle cx="633.1" cy="256.3" r="5.3" fill="url(#gp)"/><circle cx="396.8" cy="256.9" r="5.3" fill="url(#gp)"/><circle cx="465.6" cy="256.9" r="5.3" fill="url(#gp)"/><circle cx="534.4" cy="256.9" r="5.3" fill="url(#gp)"/><circle cx="603.2" cy="257.0" r="5.3" fill="url(#gp)"/><circle cx="672.1" cy="257.0" r="5.3" fill="url(#gp)"/><circle cx="670.8" cy="460.8" r="6.2" fill="url(#g40)"/><circle cx="435.7" cy="257.5" r="5.3" fill="url(#gp)"/><circle cx="665.5" cy="497.8" r="6.0" fill="url(#g33)"/><circle cx="504.6" cy="257.6" r="5.3" fill="url(#gp)"/><circle cx="573.4" cy="257.6" r="5.3" fill="url(#gp)"/><circle cx="673.1" cy="450.0" r="5.2" fill="url(#g11)"/><circle cx="642.2" cy="257.6" r="5.3" fill="url(#gp)"/><circle cx="668.3" cy="484.2" r="5.0" fill="url(#g3)"/><circle cx="668.2" cy="473.6" r="6.5" fill="url(#g47)"/><circle cx="405.9" cy="258.2" r="5.3" fill="url(#gp)"/><circle cx="699.1" cy="269.7" r="5.0" fill="url(#g3)"/><circle cx="474.7" cy="258.2" r="5.3" fill="url(#gp)"/><circle cx="663.6" cy="510.0" r="5.9" fill="url(#g29)"/><circle cx="543.5" cy="258.2" r="5.3" fill="url(#gp)"/><circle cx="612.3" cy="258.2" r="5.3" fill="url(#gp)"/><circle cx="681.1" cy="258.3" r="5.3" fill="url(#gp)"/><circle cx="680.5" cy="386.4" r="6.5" fill="url(#g47)"/><circle cx="661.3" cy="519.6" r="6.5" fill="url(#g49)"/><circle cx="692.3" cy="310.7" r="5.5" fill="url(#g20)"/><circle cx="444.8" cy="258.8" r="5.3" fill="url(#gp)"/><circle cx="658.5" cy="542.7" r="6.0" fill="url(#g33)"/><circle cx="513.6" cy="258.9" r="5.3" fill="url(#gp)"/><circle cx="661.0" cy="532.9" r="4.9" fill="url(#g1)"/><circle cx="582.5" cy="258.9" r="5.3" fill="url(#gp)"/><circle cx="651.3" cy="258.9" r="5.3" fill="url(#gp)"/><circle cx="678.4" cy="410.9" r="4.9" fill="url(#g1)"/><circle cx="675.0" cy="431.5" r="5.4" fill="url(#g14)"/><circle cx="683.7" cy="363.1" r="6.3" fill="url(#g43)"/><circle cx="415.0" cy="259.5" r="5.3" fill="url(#gp)"/><circle cx="483.8" cy="259.5" r="5.3" fill="url(#gp)"/><circle cx="552.6" cy="259.5" r="5.3" fill="url(#gp)"/><circle cx="679.6" cy="400.8" r="5.0" fill="url(#g3)"/><circle cx="621.4" cy="259.5" r="5.3" fill="url(#gp)"/><circle cx="690.2" cy="259.6" r="5.3" fill="url(#gp)"/><circle cx="694.5" cy="288.7" r="6.1" fill="url(#g35)"/><circle cx="682.8" cy="374.7" r="5.3" fill="url(#g13)"/><circle cx="453.9" cy="260.1" r="5.3" fill="url(#gp)"/><circle cx="522.7" cy="260.2" r="5.3" fill="url(#gp)"/><circle cx="591.5" cy="260.2" r="5.3" fill="url(#gp)"/><circle cx="660.4" cy="260.2" r="5.3" fill="url(#gp)"/><circle cx="424.0" cy="260.8" r="5.3" fill="url(#gp)"/><circle cx="492.9" cy="260.8" r="5.3" fill="url(#gp)"/><circle cx="561.7" cy="260.8" r="5.3" fill="url(#gp)"/><circle cx="687.1" cy="339.1" r="5.8" fill="url(#g27)"/><circle cx="630.5" cy="260.8" r="5.3" fill="url(#gp)"/><circle cx="699.3" cy="260.9" r="5.3" fill="url(#gp)"/><circle cx="688.9" cy="321.8" r="6.3" fill="url(#g41)"/><circle cx="655.3" cy="554.4" r="6.4" fill="url(#g46)"/><circle cx="394.2" cy="261.4" r="5.3" fill="url(#gp)"/><circle cx="463.0" cy="261.4" r="5.3" fill="url(#gp)"/><circle cx="675.2" cy="420.6" r="5.7" fill="url(#g25)"/><circle cx="531.8" cy="261.5" r="5.3" fill="url(#gp)"/><circle cx="692.6" cy="300.2" r="5.6" fill="url(#g21)"/><circle cx="600.6" cy="261.5" r="5.3" fill="url(#gp)"/><circle cx="669.5" cy="261.5" r="5.3" fill="url(#gp)"/><circle cx="433.1" cy="262.1" r="5.3" fill="url(#gp)"/><circle cx="501.9" cy="262.1" r="5.3" fill="url(#gp)"/><circle cx="570.8" cy="262.1" r="5.3" fill="url(#gp)"/><circle cx="639.6" cy="262.1" r="5.3" fill="url(#gp)"/><circle cx="683.0" cy="291.4" r="6.5" fill="url(#g49)"/><circle cx="652.2" cy="568.5" r="6.9" fill="url(#g59)"/><circle cx="670.8" cy="441.7" r="6.5" fill="url(#g48)"/><circle cx="696.3" cy="275.7" r="4.9" fill="url(#g1)"/><circle cx="683.5" cy="350.7" r="6.8" fill="url(#g59)"/><circle cx="403.3" cy="262.7" r="5.3" fill="url(#gp)"/><circle cx="472.1" cy="262.7" r="5.3" fill="url(#gp)"/><circle cx="663.4" cy="490.8" r="6.8" fill="url(#g57)"/><circle cx="540.9" cy="262.7" r="5.3" fill="url(#gp)"/><circle cx="609.7" cy="262.8" r="5.3" fill="url(#gp)"/><circle cx="678.5" cy="262.8" r="5.3" fill="url(#gp)"/><circle cx="669.5" cy="454.4" r="5.9" fill="url(#g29)"/><circle cx="668.6" cy="465.1" r="5.2" fill="url(#g10)"/><circle cx="442.2" cy="263.4" r="5.3" fill="url(#gp)"/><circle cx="511.0" cy="263.4" r="5.3" fill="url(#gp)"/><circle cx="579.9" cy="263.4" r="5.3" fill="url(#gp)"/><circle cx="648.7" cy="263.4" r="5.3" fill="url(#gp)"/><circle cx="662.7" cy="503.2" r="5.4" fill="url(#g15)"/><circle cx="657.4" cy="536.9" r="5.8" fill="url(#g28)"/><circle cx="661.2" cy="514.0" r="5.3" fill="url(#g11)"/><circle cx="412.3" cy="264.0" r="5.3" fill="url(#gp)"/><circle cx="481.2" cy="264.0" r="5.3" fill="url(#gp)"/><circle cx="550.0" cy="264.0" r="5.3" fill="url(#gp)"/><circle cx="618.8" cy="264.1" r="5.3" fill="url(#gp)"/><circle cx="687.6" cy="264.1" r="5.3" fill="url(#gp)"/><circle cx="658.6" cy="526.3" r="5.9" fill="url(#g31)"/><circle cx="676.6" cy="405.8" r="5.2" fill="url(#g8)"/><circle cx="676.8" cy="394.2" r="6.5" fill="url(#g48)"/><circle cx="451.3" cy="264.7" r="5.3" fill="url(#gp)"/><circle cx="520.1" cy="264.7" r="5.3" fill="url(#gp)"/><circle cx="588.9" cy="264.7" r="5.3" fill="url(#gp)"/><circle cx="657.8" cy="264.7" r="5.3" fill="url(#gp)"/><circle cx="421.4" cy="265.3" r="5.3" fill="url(#gp)"/><circle cx="490.2" cy="265.3" r="5.3" fill="url(#gp)"/><circle cx="559.1" cy="265.3" r="5.3" fill="url(#gp)"/><circle cx="627.9" cy="265.4" r="5.3" fill="url(#gp)"/><circle cx="665.3" cy="475.3" r="6.0" fill="url(#g34)"/><circle cx="672.1" cy="429.7" r="5.7" fill="url(#g26)"/><circle cx="696.7" cy="265.4" r="5.3" fill="url(#gp)"/><circle cx="678.1" cy="380.6" r="6.6" fill="url(#g51)"/><circle cx="687.8" cy="310.9" r="6.9" fill="url(#g60)"/><circle cx="391.6" cy="265.9" r="5.3" fill="url(#gp)"/><circle cx="460.4" cy="266.0" r="5.3" fill="url(#gp)"/><circle cx="654.2" cy="558.0" r="5.0" fill="url(#g5)"/><circle cx="529.2" cy="266.0" r="5.3" fill="url(#gp)"/><circle cx="598.0" cy="266.0" r="5.3" fill="url(#gp)"/><circle cx="666.8" cy="266.0" r="5.3" fill="url(#gp)"/><circle cx="684.7" cy="330.9" r="6.9" fill="url(#g59)"/><circle cx="679.4" cy="367.3" r="6.9" fill="url(#g61)"/><circle cx="691.9" cy="284.2" r="6.4" fill="url(#g44)"/><circle cx="430.5" cy="266.6" r="5.3" fill="url(#gp)"/><circle cx="499.3" cy="266.6" r="5.3" fill="url(#gp)"/><circle cx="568.2" cy="266.6" r="5.3" fill="url(#gp)"/><circle cx="637.0" cy="266.7" r="5.3" fill="url(#gp)"/><circle cx="653.5" cy="546.7" r="6.7" fill="url(#g56)"/><circle cx="400.6" cy="267.2" r="5.3" fill="url(#gp)"/><circle cx="469.5" cy="267.2" r="5.3" fill="url(#gp)"/><circle cx="538.3" cy="267.3" r="5.3" fill="url(#gp)"/><circle cx="607.1" cy="267.3" r="5.3" fill="url(#gp)"/><circle cx="675.9" cy="267.3" r="5.3" fill="url(#gp)"/><circle cx="672.9" cy="415.4" r="6.0" fill="url(#g34)"/><circle cx="439.6" cy="267.9" r="5.3" fill="url(#gp)"/><circle cx="508.4" cy="267.9" r="5.3" fill="url(#gp)"/><circle cx="577.2" cy="267.9" r="5.3" fill="url(#gp)"/><circle cx="646.1" cy="268.0" r="5.3" fill="url(#gp)"/><circle cx="689.1" cy="297.7" r="6.4" fill="url(#g46)"/><circle cx="660.7" cy="497.4" r="6.1" fill="url(#g37)"/><circle cx="409.7" cy="268.5" r="5.3" fill="url(#gp)"/><circle cx="478.6" cy="268.5" r="5.3" fill="url(#gp)"/><circle cx="547.4" cy="268.6" r="5.3" fill="url(#gp)"/><circle cx="616.2" cy="268.6" r="5.3" fill="url(#gp)"/><circle cx="685.0" cy="268.6" r="5.3" fill="url(#gp)"/><circle cx="649.4" cy="575.5" r="6.1" fill="url(#g38)"/><circle cx="667.1" cy="450.8" r="6.2" fill="url(#g39)"/><circle cx="658.1" cy="518.9" r="5.5" fill="url(#g19)"/><circle cx="665.1" cy="463.7" r="6.2" fill="url(#g41)"/><circle cx="660.2" cy="508.0" r="5.0" fill="url(#g2)"/><circle cx="448.7" cy="269.2" r="5.3" fill="url(#gp)"/><circle cx="517.5" cy="269.2" r="5.3" fill="url(#gp)"/><circle cx="586.3" cy="269.2" r="5.3" fill="url(#gp)"/><circle cx="655.1" cy="269.3" r="5.3" fill="url(#gp)"/><circle cx="661.8" cy="484.3" r="6.4" fill="url(#g46)"/><circle cx="680.6" cy="355.0" r="6.1" fill="url(#g37)"/><circle cx="418.8" cy="269.8" r="5.3" fill="url(#gp)"/><circle cx="487.6" cy="269.8" r="5.3" fill="url(#gp)"/><circle cx="667.8" cy="437.9" r="6.9" fill="url(#g61)"/><circle cx="556.5" cy="269.9" r="5.3" fill="url(#gp)"/><circle cx="625.3" cy="269.9" r="5.3" fill="url(#gp)"/><circle cx="694.1" cy="269.9" r="5.3" fill="url(#gp)"/><circle cx="674.0" cy="401.6" r="5.9" fill="url(#g30)"/><circle cx="649.5" cy="565.0" r="6.9" fill="url(#g59)"/><circle cx="654.6" cy="531.9" r="6.5" fill="url(#g48)"/><circle cx="685.7" cy="320.5" r="5.7" fill="url(#g25)"/><circle cx="389.0" cy="270.5" r="5.3" fill="url(#gp)"/><circle cx="457.8" cy="270.5" r="5.3" fill="url(#gp)"/><circle cx="526.6" cy="270.5" r="5.3" fill="url(#gp)"/><circle cx="595.4" cy="270.5" r="5.3" fill="url(#gp)"/><circle cx="664.2" cy="270.6" r="5.3" fill="url(#gp)"/><circle cx="681.2" cy="342.3" r="6.8" fill="url(#g59)"/><circle cx="427.9" cy="271.1" r="5.3" fill="url(#gp)"/><circle cx="496.7" cy="271.1" r="5.3" fill="url(#gp)"/><circle cx="565.5" cy="271.2" r="5.3" fill="url(#gp)"/><circle cx="634.4" cy="271.2" r="5.3" fill="url(#gp)"/><circle cx="669.2" cy="425.6" r="6.5" fill="url(#g50)"/><circle cx="398.0" cy="271.7" r="5.3" fill="url(#gp)"/><circle cx="466.9" cy="271.8" r="5.3" fill="url(#gp)"/><circle cx="674.1" cy="388.7" r="6.8" fill="url(#g57)"/><circle cx="535.7" cy="271.8" r="5.3" fill="url(#gp)"/><circle cx="604.5" cy="271.8" r="5.3" fill="url(#gp)"/><circle cx="673.3" cy="271.9" r="5.3" fill="url(#gp)"/><circle cx="676.6" cy="375.4" r="6.1" fill="url(#g37)"/><circle cx="437.0" cy="272.4" r="5.3" fill="url(#gp)"/><circle cx="505.8" cy="272.4" r="5.3" fill="url(#gp)"/><circle cx="574.6" cy="272.5" r="5.3" fill="url(#gp)"/><circle cx="684.5" cy="285.7" r="6.4" fill="url(#g45)"/><circle cx="643.4" cy="272.5" r="5.3" fill="url(#gp)"/><circle cx="662.4" cy="474.2" r="6.0" fill="url(#g33)"/><circle cx="651.7" cy="553.3" r="5.3" fill="url(#g13)"/><circle cx="407.1" cy="273.0" r="5.3" fill="url(#gp)"/><circle cx="475.9" cy="273.1" r="5.3" fill="url(#gp)"/><circle cx="544.8" cy="273.1" r="5.3" fill="url(#gp)"/><circle cx="685.8" cy="308.8" r="6.0" fill="url(#g34)"/><circle cx="613.6" cy="273.1" r="5.3" fill="url(#gp)"/><circle cx="682.4" cy="273.2" r="5.3" fill="url(#gp)"/><circle cx="678.9" cy="364.5" r="5.0" fill="url(#g4)"/><circle cx="683.7" cy="331.0" r="4.9" fill="url(#g2)"/><circle cx="446.1" cy="273.7" r="5.3" fill="url(#gp)"/><circle cx="514.9" cy="273.7" r="5.3" fill="url(#gp)"/><circle cx="651.3" cy="542.7" r="6.7" fill="url(#g54)"/><circle cx="583.7" cy="273.8" r="5.3" fill="url(#gp)"/><circle cx="652.5" cy="273.8" r="5.3" fill="url(#gp)"/><circle cx="655.9" cy="523.3" r="4.9" fill="url(#g1)"/><circle cx="657.2" cy="512.6" r="5.2" fill="url(#g8)"/><circle cx="671.4" cy="414.3" r="5.0" fill="url(#g3)"/><circle cx="660.0" cy="491.8" r="5.2" fill="url(#g9)"/><circle cx="416.2" cy="274.3" r="5.3" fill="url(#gp)"/><circle cx="658.0" cy="502.9" r="5.6" fill="url(#g20)"/><circle cx="485.0" cy="274.4" r="5.3" fill="url(#gp)"/><circle cx="553.8" cy="274.4" r="5.3" fill="url(#gp)"/><circle cx="622.7" cy="274.4" r="5.3" fill="url(#gp)"/><circle cx="691.5" cy="274.5" r="5.3" fill="url(#gp)"/><circle cx="664.2" cy="456.4" r="5.8" fill="url(#g26)"/><circle cx="386.3" cy="275.0" r="5.3" fill="url(#gp)"/><circle cx="646.7" cy="573.6" r="6.4" fill="url(#g44)"/><circle cx="455.2" cy="275.0" r="5.3" fill="url(#gp)"/><circle cx="524.0" cy="275.0" r="5.3" fill="url(#gp)"/><circle cx="592.8" cy="275.1" r="5.3" fill="url(#gp)"/><circle cx="661.6" cy="275.1" r="5.3" fill="url(#gp)"/><circle cx="666.4" cy="445.8" r="5.0" fill="url(#g2)"/><circle cx="686.5" cy="297.1" r="6.0" fill="url(#g35)"/><circle cx="679.1" cy="318.3" r="5.5" fill="url(#g19)"/><circle cx="425.3" cy="275.6" r="5.3" fill="url(#gp)"/><circle cx="494.1" cy="275.7" r="5.3" fill="url(#gp)"/><circle cx="562.9" cy="275.7" r="5.3" fill="url(#gp)"/><circle cx="631.7" cy="275.7" r="5.3" fill="url(#gp)"/><circle cx="679.0" cy="355.1" r="5.0" fill="url(#g4)"/><circle cx="395.4" cy="276.3" r="5.3" fill="url(#gp)"/><circle cx="464.2" cy="276.3" r="5.3" fill="url(#gp)"/><circle cx="645.7" cy="584.0" r="5.4" fill="url(#g14)"/><circle cx="533.1" cy="276.3" r="5.3" fill="url(#gp)"/><circle cx="671.1" cy="404.3" r="5.7" fill="url(#g24)"/><circle cx="601.9" cy="276.4" r="5.3" fill="url(#gp)"/><circle cx="670.7" cy="276.4" r="5.3" fill="url(#gp)"/><circle cx="434.4" cy="276.9" r="5.3" fill="url(#gp)"/><circle cx="648.0" cy="561.7" r="5.9" fill="url(#g31)"/><circle cx="503.2" cy="277.0" r="5.3" fill="url(#gp)"/><circle cx="572.0" cy="277.0" r="5.3" fill="url(#gp)"/><circle cx="640.8" cy="277.0" r="5.3" fill="url(#gp)"/><circle cx="666.0" cy="434.3" r="6.1" fill="url(#g37)"/><circle cx="651.8" cy="530.5" r="6.4" fill="url(#g47)"/><circle cx="404.5" cy="277.6" r="5.3" fill="url(#gp)"/><circle cx="473.3" cy="277.6" r="5.3" fill="url(#gp)"/><circle cx="659.0" cy="483.5" r="5.9" fill="url(#g29)"/><circle cx="674.4" cy="381.9" r="5.1" fill="url(#g6)"/><circle cx="542.1" cy="277.6" r="5.3" fill="url(#gp)"/><circle cx="611.0" cy="277.7" r="5.3" fill="url(#gp)"/><circle cx="679.8" cy="277.7" r="5.3" fill="url(#gp)"/><circle cx="668.3" cy="423.4" r="5.0" fill="url(#g4)"/><circle cx="443.5" cy="278.2" r="5.3" fill="url(#gp)"/><circle cx="678.2" cy="344.0" r="6.4" fill="url(#g44)"/><circle cx="512.3" cy="278.3" r="5.3" fill="url(#gp)"/><circle cx="581.1" cy="278.3" r="5.3" fill="url(#gp)"/><circle cx="649.9" cy="278.3" r="5.3" fill="url(#gp)"/><circle cx="340.6" cy="586.5" r="5.3" fill="url(#g13)"/><circle cx="649.4" cy="552.2" r="5.2" fill="url(#g9)"/><circle cx="675.1" cy="371.1" r="5.5" fill="url(#g18)"/><circle cx="413.6" cy="278.9" r="5.3" fill="url(#gp)"/><circle cx="482.4" cy="278.9" r="5.3" fill="url(#gp)"/><circle cx="660.5" cy="472.8" r="5.4" fill="url(#g15)"/><circle cx="551.2" cy="278.9" r="5.3" fill="url(#gp)"/><circle cx="620.1" cy="279.0" r="5.3" fill="url(#gp)"/><circle cx="688.9" cy="279.0" r="5.3" fill="url(#gp)"/><circle cx="670.4" cy="392.4" r="6.8" fill="url(#g58)"/><circle cx="655.6" cy="506.9" r="5.3" fill="url(#g13)"/><circle cx="662.0" cy="462.6" r="5.2" fill="url(#g9)"/><circle cx="383.7" cy="279.5" r="5.3" fill="url(#gp)"/><circle cx="652.7" cy="518.6" r="6.3" fill="url(#g42)"/><circle cx="452.5" cy="279.5" r="5.3" fill="url(#gp)"/><circle cx="521.4" cy="279.6" r="5.3" fill="url(#gp)"/><circle cx="590.2" cy="279.6" r="5.3" fill="url(#gp)"/><circle cx="659.0" cy="279.6" r="5.3" fill="url(#gp)"/><circle cx="679.4" cy="328.5" r="6.8" fill="url(#g56)"/><circle cx="662.1" cy="451.6" r="6.3" fill="url(#g41)"/><circle cx="422.7" cy="280.2" r="5.3" fill="url(#gp)"/><circle cx="491.5" cy="280.2" r="5.3" fill="url(#gp)"/><circle cx="560.3" cy="280.2" r="5.3" fill="url(#gp)"/><circle cx="629.1" cy="280.3" r="5.3" fill="url(#gp)"/><circle cx="682.7" cy="312.5" r="5.4" fill="url(#g16)"/><circle cx="676.2" cy="361.4" r="4.9" fill="url(#g1)"/><circle cx="666.9" cy="413.1" r="6.7" fill="url(#g55)"/><circle cx="392.8" cy="280.8" r="5.3" fill="url(#gp)"/><circle cx="461.6" cy="280.8" r="5.3" fill="url(#gp)"/><circle cx="646.3" cy="569.2" r="5.0" fill="url(#g3)"/><circle cx="530.4" cy="280.9" r="5.3" fill="url(#gp)"/><circle cx="599.3" cy="280.9" r="5.3" fill="url(#gp)"/><circle cx="668.1" cy="280.9" r="5.3" fill="url(#gp)"/><circle cx="389.7" cy="588.6" r="5.6" fill="url(#g22)"/><circle cx="644.3" cy="578.8" r="5.3" fill="url(#g12)"/><circle cx="431.8" cy="281.5" r="5.3" fill="url(#gp)"/><circle cx="648.3" cy="541.8" r="6.5" fill="url(#g48)"/><circle cx="500.6" cy="281.5" r="5.3" fill="url(#gp)"/><circle cx="569.4" cy="281.5" r="5.3" fill="url(#gp)"/><circle cx="638.2" cy="281.6" r="5.3" fill="url(#gp)"/><circle cx="683.5" cy="301.3" r="5.7" fill="url(#g26)"/><circle cx="642.2" cy="589.2" r="5.7" fill="url(#g23)"/><circle cx="401.9" cy="282.1" r="5.3" fill="url(#gp)"/><circle cx="470.7" cy="282.1" r="5.3" fill="url(#gp)"/><circle cx="539.5" cy="282.2" r="5.3" fill="url(#gp)"/><circle cx="608.4" cy="282.2" r="5.3" fill="url(#gp)"/><circle cx="677.2" cy="282.2" r="5.3" fill="url(#gp)"/><circle cx="360.4" cy="590.5" r="5.0" fill="url(#g4)"/><circle cx="365.0" cy="574.2" r="7.0" fill="url(#g63)"/><circle cx="440.8" cy="282.8" r="5.3" fill="url(#gp)"/><circle cx="509.7" cy="282.8" r="5.3" fill="url(#gp)"/><circle cx="578.5" cy="282.8" r="5.3" fill="url(#gp)"/><circle cx="647.3" cy="282.9" r="5.3" fill="url(#gp)"/><circle cx="646.0" cy="561.4" r="5.4" fill="url(#g15)"/><circle cx="664.8" cy="427.8" r="5.6" fill="url(#g22)"/><circle cx="662.4" cy="439.3" r="6.3" fill="url(#g41)"/><circle cx="411.0" cy="283.4" r="5.3" fill="url(#gp)"/><circle cx="479.8" cy="283.4" r="5.3" fill="url(#gp)"/><circle cx="548.6" cy="283.5" r="5.3" fill="url(#gp)"/><circle cx="617.4" cy="283.5" r="5.3" fill="url(#gp)"/><circle cx="686.3" cy="283.5" r="5.3" fill="url(#gp)"/><circle cx="656.0" cy="488.0" r="5.6" fill="url(#g22)"/><circle cx="381.1" cy="284.0" r="5.3" fill="url(#gp)"/><circle cx="449.9" cy="284.1" r="5.3" fill="url(#gp)"/><circle cx="518.8" cy="284.1" r="5.3" fill="url(#gp)"/><circle cx="649.6" cy="532.5" r="5.5" fill="url(#g17)"/><circle cx="654.0" cy="498.7" r="5.9" fill="url(#g30)"/><circle cx="587.6" cy="284.1" r="5.3" fill="url(#gp)"/><circle cx="338.0" cy="591.5" r="5.8" fill="url(#g27)"/><circle cx="656.4" cy="284.2" r="5.3" fill="url(#gp)"/><circle cx="356.8" cy="581.5" r="5.2" fill="url(#g10)"/><circle cx="420.1" cy="284.7" r="5.3" fill="url(#gp)"/><circle cx="488.9" cy="284.7" r="5.3" fill="url(#gp)"/><circle cx="557.7" cy="284.8" r="5.3" fill="url(#gp)"/><circle cx="668.3" cy="403.3" r="5.0" fill="url(#g4)"/><circle cx="671.6" cy="375.0" r="5.7" fill="url(#g24)"/><circle cx="677.3" cy="337.2" r="5.4" fill="url(#g16)"/><circle cx="626.5" cy="284.8" r="5.3" fill="url(#gp)"/><circle cx="670.8" cy="385.9" r="5.0" fill="url(#g2)"/><circle cx="650.9" cy="521.8" r="5.3" fill="url(#g11)"/><circle cx="390.2" cy="285.3" r="5.3" fill="url(#gp)"/><circle cx="459.0" cy="285.4" r="5.3" fill="url(#gp)"/><circle cx="650.8" cy="511.2" r="6.7" fill="url(#g53)"/><circle cx="527.8" cy="285.4" r="5.3" fill="url(#gp)"/><circle cx="655.7" cy="475.5" r="6.9" fill="url(#g59)"/><circle cx="645.7" cy="550.7" r="6.1" fill="url(#g37)"/><circle cx="658.5" cy="460.8" r="6.2" fill="url(#g40)"/><circle cx="350.5" cy="569.3" r="6.3" fill="url(#g41)"/><circle cx="675.1" cy="352.5" r="5.2" fill="url(#g10)"/><circle cx="596.7" cy="285.4" r="5.3" fill="url(#gp)"/><circle cx="375.2" cy="569.3" r="5.0" fill="url(#g2)"/><circle cx="665.5" cy="285.5" r="5.3" fill="url(#gp)"/><circle cx="349.5" cy="591.5" r="6.9" fill="url(#g60)"/><circle cx="367.1" cy="585.5" r="5.6" fill="url(#g21)"/><circle cx="642.4" cy="570.8" r="6.3" fill="url(#g43)"/><circle cx="429.1" cy="286.0" r="5.3" fill="url(#gp)"/><circle cx="498.0" cy="286.0" r="5.3" fill="url(#gp)"/><circle cx="566.8" cy="286.1" r="5.3" fill="url(#gp)"/><circle cx="635.6" cy="286.1" r="5.3" fill="url(#gp)"/><circle cx="672.5" cy="363.4" r="5.8" fill="url(#g29)"/><circle cx="399.3" cy="286.6" r="5.3" fill="url(#gp)"/><circle cx="468.1" cy="286.7" r="5.3" fill="url(#gp)"/><circle cx="536.9" cy="286.7" r="5.3" fill="url(#gp)"/><circle cx="660.7" cy="449.8" r="5.1" fill="url(#g7)"/><circle cx="605.7" cy="286.7" r="5.3" fill="url(#gp)"/><circle cx="674.6" cy="286.8" r="5.3" fill="url(#gp)"/><circle cx="639.8" cy="583.4" r="6.6" fill="url(#g52)"/><circle cx="394.3" cy="594.6" r="5.7" fill="url(#g23)"/><circle cx="340.4" cy="563.5" r="5.5" fill="url(#g18)"/><circle cx="337.4" cy="582.9" r="5.4" fill="url(#g14)"/><circle cx="438.2" cy="287.3" r="5.3" fill="url(#gp)"/><circle cx="507.1" cy="287.3" r="5.3" fill="url(#gp)"/><circle cx="638.8" cy="594.4" r="5.9" fill="url(#g30)"/><circle cx="575.9" cy="287.4" r="5.3" fill="url(#gp)"/><circle cx="644.7" cy="287.4" r="5.3" fill="url(#gp)"/><circle cx="678.1" cy="312.7" r="6.9" fill="url(#g61)"/><circle cx="387.9" cy="585.4" r="6.0" fill="url(#g33)"/><circle cx="368.2" cy="528.8" r="6.6" fill="url(#g52)"/><circle cx="360.5" cy="595.5" r="5.2" fill="url(#g11)"/><circle cx="676.9" cy="326.4" r="6.0" fill="url(#g35)"/><circle cx="360.6" cy="564.8" r="6.4" fill="url(#g46)"/><circle cx="664.9" cy="412.5" r="5.7" fill="url(#g25)"/><circle cx="408.4" cy="287.9" r="5.3" fill="url(#gp)"/><circle cx="404.7" cy="595.7" r="5.4" fill="url(#g16)"/><circle cx="477.2" cy="288.0" r="5.3" fill="url(#gp)"/><circle cx="646.0" cy="540.5" r="6.2" fill="url(#g39)"/><circle cx="546.0" cy="288.0" r="5.3" fill="url(#gp)"/><circle cx="681.6" cy="299.8" r="5.2" fill="url(#g9)"/><circle cx="614.8" cy="288.0" r="5.3" fill="url(#gp)"/><circle cx="377.3" cy="579.4" r="6.2" fill="url(#g38)"/><circle cx="683.6" cy="288.1" r="5.3" fill="url(#gp)"/><circle cx="667.8" cy="394.4" r="5.3" fill="url(#g13)"/><circle cx="378.5" cy="288.6" r="5.3" fill="url(#gp)"/><circle cx="447.3" cy="288.6" r="5.3" fill="url(#gp)"/><circle cx="516.1" cy="288.6" r="5.3" fill="url(#gp)"/><circle cx="585.0" cy="288.7" r="5.3" fill="url(#gp)"/><circle cx="653.8" cy="288.7" r="5.3" fill="url(#gp)"/><circle cx="359.1" cy="553.3" r="5.5" fill="url(#g19)"/><circle cx="370.9" cy="595.7" r="6.1" fill="url(#g37)"/><circle cx="347.8" cy="580.0" r="6.7" fill="url(#g55)"/><circle cx="417.5" cy="289.2" r="5.3" fill="url(#gp)"/><circle cx="486.3" cy="289.3" r="5.3" fill="url(#gp)"/><circle cx="662.8" cy="423.7" r="5.6" fill="url(#g22)"/><circle cx="555.1" cy="289.3" r="5.3" fill="url(#gp)"/><circle cx="623.9" cy="289.3" r="5.3" fill="url(#gp)"/><circle cx="642.7" cy="561.0" r="5.9" fill="url(#g31)"/><circle cx="368.3" cy="572.8" r="5.5" fill="url(#g18)"/><circle cx="387.6" cy="289.9" r="5.3" fill="url(#gp)"/><circle cx="673.7" cy="344.1" r="5.9" fill="url(#g29)"/><circle cx="651.5" cy="492.2" r="6.7" fill="url(#g55)"/><circle cx="456.4" cy="289.9" r="5.3" fill="url(#gp)"/><circle cx="525.2" cy="289.9" r="5.3" fill="url(#gp)"/><circle cx="594.0" cy="290.0" r="5.3" fill="url(#gp)"/><circle cx="358.0" cy="586.5" r="5.3" fill="url(#g12)"/><circle cx="338.2" cy="573.6" r="6.0" fill="url(#g32)"/><circle cx="662.9" cy="290.0" r="5.3" fill="url(#gp)"/><circle cx="341.6" cy="552.6" r="6.4" fill="url(#g46)"/><circle cx="659.5" cy="441.2" r="6.0" fill="url(#g33)"/><circle cx="649.4" cy="517.3" r="5.2" fill="url(#g8)"/><circle cx="414.6" cy="597.4" r="6.0" fill="url(#g33)"/><circle cx="350.2" cy="561.2" r="5.6" fill="url(#g20)"/><circle cx="646.6" cy="528.5" r="6.2" fill="url(#g40)"/><circle cx="383.7" cy="596.5" r="6.8" fill="url(#g57)"/><circle cx="426.5" cy="290.5" r="5.3" fill="url(#gp)"/><circle cx="495.4" cy="290.6" r="5.3" fill="url(#gp)"/><circle cx="564.2" cy="290.6" r="5.3" fill="url(#gp)"/><circle cx="633.0" cy="290.6" r="5.3" fill="url(#gp)"/><circle cx="667.0" cy="380.5" r="6.9" fill="url(#g61)"/><circle cx="425.7" cy="598.8" r="5.1" fill="url(#g7)"/><circle cx="399.4" cy="581.2" r="6.6" fill="url(#g50)"/><circle cx="396.7" cy="291.2" r="5.3" fill="url(#gp)"/><circle cx="388.1" cy="575.7" r="5.9" fill="url(#g31)"/><circle cx="465.5" cy="291.2" r="5.3" fill="url(#gp)"/><circle cx="671.8" cy="355.4" r="5.6" fill="url(#g22)"/><circle cx="534.3" cy="291.2" r="5.3" fill="url(#gp)"/><circle cx="654.4" cy="466.6" r="6.9" fill="url(#g61)"/><circle cx="603.1" cy="291.3" r="5.3" fill="url(#gp)"/><circle cx="671.9" cy="291.3" r="5.3" fill="url(#gp)"/><circle cx="397.2" cy="557.8" r="4.9" fill="url(#g1)"/><circle cx="435.6" cy="291.8" r="5.3" fill="url(#gp)"/><circle cx="504.4" cy="291.9" r="5.3" fill="url(#gp)"/><circle cx="379.1" cy="568.3" r="6.6" fill="url(#g51)"/><circle cx="657.1" cy="453.1" r="5.9" fill="url(#g31)"/><circle cx="573.3" cy="291.9" r="5.3" fill="url(#gp)"/><circle cx="642.1" cy="291.9" r="5.3" fill="url(#gp)"/><circle cx="648.8" cy="505.5" r="6.6" fill="url(#g52)"/><circle cx="652.7" cy="480.3" r="6.4" fill="url(#g45)"/><circle cx="664.2" cy="403.1" r="6.0" fill="url(#g32)"/><circle cx="369.9" cy="559.1" r="6.8" fill="url(#g56)"/><circle cx="642.0" cy="550.3" r="6.9" fill="url(#g59)"/><circle cx="367.0" cy="582.9" r="6.3" fill="url(#g41)"/><circle cx="670.3" cy="367.2" r="4.9" fill="url(#g2)"/><circle cx="452.7" cy="599.3" r="6.0" fill="url(#g34)"/><circle cx="394.2" cy="600.5" r="5.1" fill="url(#g5)"/><circle cx="405.8" cy="292.5" r="5.3" fill="url(#gp)"/><circle cx="474.6" cy="292.5" r="5.3" fill="url(#gp)"/><circle cx="436.5" cy="599.5" r="6.0" fill="url(#g34)"/><circle cx="543.4" cy="292.5" r="5.3" fill="url(#gp)"/><circle cx="612.2" cy="292.6" r="5.3" fill="url(#gp)"/><circle cx="681.0" cy="292.6" r="5.3" fill="url(#gp)"/><circle cx="376.9" cy="588.4" r="5.6" fill="url(#g23)"/><circle cx="357.7" cy="576.2" r="6.0" fill="url(#g34)"/><circle cx="638.8" cy="574.6" r="6.3" fill="url(#g42)"/><circle cx="375.9" cy="293.1" r="5.3" fill="url(#gp)"/><circle cx="679.0" cy="304.5" r="4.9" fill="url(#g1)"/><circle cx="444.7" cy="293.1" r="5.3" fill="url(#gp)"/><circle cx="513.5" cy="293.2" r="5.3" fill="url(#gp)"/><circle cx="582.3" cy="293.2" r="5.3" fill="url(#gp)"/><circle cx="673.7" cy="333.6" r="5.9" fill="url(#g30)"/><circle cx="337.6" cy="564.4" r="5.5" fill="url(#g19)"/><circle cx="651.2" cy="293.2" r="5.3" fill="url(#gp)"/><circle cx="347.3" cy="570.5" r="5.2" fill="url(#g8)"/><circle cx="634.8" cy="599.9" r="6.4" fill="url(#g46)"/><circle cx="417.9" cy="588.6" r="5.5" fill="url(#g19)"/><circle cx="414.8" cy="293.8" r="5.3" fill="url(#gp)"/><circle cx="483.7" cy="293.8" r="5.3" fill="url(#gp)"/><circle cx="404.9" cy="601.1" r="5.7" fill="url(#g25)"/><circle cx="552.5" cy="293.8" r="5.3" fill="url(#gp)"/><circle cx="621.3" cy="293.9" r="5.3" fill="url(#gp)"/><circle cx="429.7" cy="589.9" r="6.4" fill="url(#g45)"/><circle cx="351.9" cy="549.6" r="6.4" fill="url(#g46)"/><circle cx="341.7" cy="541.5" r="6.6" fill="url(#g51)"/><circle cx="665.8" cy="392.3" r="5.1" fill="url(#g6)"/><circle cx="385.0" cy="294.4" r="5.3" fill="url(#gp)"/><circle cx="362.8" cy="551.5" r="4.9" fill="url(#g0)"/><circle cx="453.8" cy="294.4" r="5.3" fill="url(#gp)"/><circle cx="408.0" cy="585.7" r="4.9" fill="url(#g2)"/><circle cx="522.6" cy="294.5" r="5.3" fill="url(#gp)"/><circle cx="644.6" cy="538.3" r="5.1" fill="url(#g8)"/><circle cx="386.8" cy="586.9" r="6.5" fill="url(#g48)"/><circle cx="591.4" cy="294.5" r="5.3" fill="url(#gp)"/><circle cx="660.3" cy="294.5" r="5.3" fill="url(#gp)"/><circle cx="658.2" cy="430.8" r="6.8" fill="url(#g57)"/><circle cx="660.3" cy="416.8" r="6.6" fill="url(#g50)"/><circle cx="640.7" cy="563.8" r="5.2" fill="url(#g8)"/><circle cx="423.9" cy="295.1" r="5.3" fill="url(#gp)"/><circle cx="399.1" cy="592.3" r="6.5" fill="url(#g48)"/><circle cx="492.7" cy="295.1" r="5.3" fill="url(#gp)"/><circle cx="561.6" cy="295.1" r="5.3" fill="url(#gp)"/><circle cx="630.4" cy="295.2" r="5.3" fill="url(#gp)"/><circle cx="392.5" cy="566.9" r="6.6" fill="url(#g50)"/><circle cx="674.6" cy="314.8" r="6.8" fill="url(#g56)"/><circle cx="415.8" cy="603.6" r="5.1" fill="url(#g7)"/><circle cx="394.1" cy="295.7" r="5.3" fill="url(#gp)"/><circle cx="462.9" cy="295.7" r="5.3" fill="url(#gp)"/><circle cx="461.9" cy="603.6" r="5.3" fill="url(#g13)"/><circle cx="531.7" cy="295.8" r="5.3" fill="url(#gp)"/><circle cx="366.9" cy="573.9" r="5.4" fill="url(#g14)"/><circle cx="600.5" cy="295.8" r="5.3" fill="url(#gp)"/><circle cx="377.3" cy="578.6" r="5.9" fill="url(#g32)"/><circle cx="669.3" cy="295.8" r="5.3" fill="url(#gp)"/><circle cx="380.7" cy="557.9" r="5.4" fill="url(#g15)"/><circle cx="357.8" cy="564.8" r="6.7" fill="url(#g55)"/><circle cx="402.3" cy="574.1" r="5.3" fill="url(#g13)"/><circle cx="337.3" cy="555.9" r="5.3" fill="url(#g12)"/><circle cx="346.1" cy="561.0" r="5.2" fill="url(#g9)"/><circle cx="433.0" cy="296.4" r="5.3" fill="url(#gp)"/><circle cx="671.7" cy="343.8" r="5.2" fill="url(#g9)"/><circle cx="668.9" cy="325.2" r="5.2" fill="url(#g8)"/><circle cx="501.8" cy="296.4" r="5.3" fill="url(#gp)"/><circle cx="570.6" cy="296.4" r="5.3" fill="url(#gp)"/><circle cx="639.5" cy="296.5" r="5.3" fill="url(#gp)"/><circle cx="649.6" cy="495.3" r="5.3" fill="url(#g14)"/><circle cx="444.4" cy="594.7" r="6.0" fill="url(#g34)"/><circle cx="667.4" cy="373.5" r="5.1" fill="url(#g7)"/><circle cx="443.9" cy="582.1" r="6.3" fill="url(#g43)"/><circle cx="645.0" cy="515.8" r="6.9" fill="url(#g60)"/><circle cx="426.7" cy="603.3" r="6.4" fill="url(#g45)"/><circle cx="643.8" cy="529.0" r="6.2" fill="url(#g39)"/><circle cx="343.2" cy="519.4" r="6.2" fill="url(#g38)"/><circle cx="403.1" cy="297.0" r="5.3" fill="url(#gp)"/><circle cx="410.1" cy="594.9" r="5.5" fill="url(#g19)"/><circle cx="472.0" cy="297.0" r="5.3" fill="url(#gp)"/><circle cx="655.8" cy="443.7" r="6.3" fill="url(#g43)"/><circle cx="540.8" cy="297.1" r="5.3" fill="url(#gp)"/><circle cx="609.6" cy="297.1" r="5.3" fill="url(#gp)"/><circle cx="422.8" cy="580.9" r="5.5" fill="url(#g19)"/><circle cx="678.4" cy="297.1" r="5.3" fill="url(#gp)"/><circle cx="372.9" cy="550.6" r="5.8" fill="url(#g26)"/><circle cx="364.5" cy="540.4" r="7.0" fill="url(#g63)"/><circle cx="352.2" cy="538.5" r="5.8" fill="url(#g27)"/><circle cx="373.3" cy="297.6" r="5.3" fill="url(#gp)"/><circle cx="669.4" cy="354.7" r="5.4" fill="url(#g14)"/><circle cx="442.1" cy="297.7" r="5.3" fill="url(#gp)"/><circle cx="660.1" cy="383.2" r="6.6" fill="url(#g52)"/><circle cx="510.9" cy="297.7" r="5.3" fill="url(#gp)"/><circle cx="340.7" cy="530.7" r="5.7" fill="url(#g23)"/><circle cx="579.7" cy="297.7" r="5.3" fill="url(#gp)"/><circle cx="635.9" cy="581.1" r="6.2" fill="url(#g39)"/><circle cx="648.6" cy="297.8" r="5.3" fill="url(#gp)"/><circle cx="413.2" cy="573.5" r="5.0" fill="url(#g4)"/><circle cx="662.0" cy="406.2" r="5.1" fill="url(#g7)"/><circle cx="390.5" cy="556.5" r="5.0" fill="url(#g3)"/><circle cx="651.3" cy="472.8" r="6.2" fill="url(#g39)"/><circle cx="652.7" cy="458.8" r="6.7" fill="url(#g56)"/><circle cx="412.2" cy="298.3" r="5.3" fill="url(#gp)"/><circle cx="481.0" cy="298.3" r="5.3" fill="url(#gp)"/><circle cx="647.8" cy="505.6" r="5.0" fill="url(#g4)"/><circle cx="650.2" cy="484.7" r="5.5" fill="url(#g19)"/><circle cx="549.9" cy="298.4" r="5.3" fill="url(#gp)"/><circle cx="618.7" cy="298.4" r="5.3" fill="url(#gp)"/><circle cx="638.5" cy="570.8" r="4.9" fill="url(#g1)"/><circle cx="396.8" cy="582.6" r="5.6" fill="url(#g22)"/><circle cx="439.4" cy="605.5" r="6.1" fill="url(#g36)"/><circle cx="642.1" cy="544.1" r="5.0" fill="url(#g4)"/><circle cx="387.6" cy="576.1" r="5.8" fill="url(#g28)"/><circle cx="633.3" cy="593.6" r="6.6" fill="url(#g51)"/><circle cx="491.4" cy="599.0" r="6.6" fill="url(#g50)"/><circle cx="420.4" cy="596.6" r="4.9" fill="url(#g2)"/><circle cx="368.6" cy="564.5" r="5.9" fill="url(#g32)"/><circle cx="382.4" cy="298.9" r="5.3" fill="url(#gp)"/><circle cx="451.2" cy="299.0" r="5.3" fill="url(#gp)"/><circle cx="411.3" cy="551.2" r="5.4" fill="url(#g16)"/><circle cx="336.9" cy="548.0" r="5.0" fill="url(#g3)"/><circle cx="450.7" cy="604.8" r="7.0" fill="url(#g62)"/><circle cx="520.0" cy="299.0" r="5.3" fill="url(#gp)"/><circle cx="588.8" cy="299.0" r="5.3" fill="url(#gp)"/><circle cx="657.6" cy="299.1" r="5.3" fill="url(#gp)"/><circle cx="475.1" cy="605.9" r="6.4" fill="url(#g44)"/><circle cx="433.2" cy="583.2" r="5.1" fill="url(#g5)"/><circle cx="352.3" cy="555.7" r="5.0" fill="url(#g3)"/><circle cx="638.6" cy="555.0" r="6.4" fill="url(#g46)"/><circle cx="630.9" cy="605.5" r="6.8" fill="url(#g58)"/><circle cx="421.3" cy="299.6" r="5.3" fill="url(#gp)"/><circle cx="383.2" cy="549.0" r="5.8" fill="url(#g26)"/><circle cx="490.1" cy="299.6" r="5.3" fill="url(#gp)"/><circle cx="380.3" cy="568.0" r="6.4" fill="url(#g44)"/><circle cx="559.0" cy="299.7" r="5.3" fill="url(#gp)"/><circle cx="627.8" cy="299.7" r="5.3" fill="url(#gp)"/><circle cx="663.0" cy="393.8" r="5.2" fill="url(#g8)"/><circle cx="352.1" cy="527.0" r="6.4" fill="url(#g45)"/><circle cx="667.4" cy="364.2" r="4.9" fill="url(#g1)"/><circle cx="466.1" cy="583.6" r="6.0" fill="url(#g33)"/><circle cx="658.7" cy="424.0" r="5.0" fill="url(#g2)"/><circle cx="391.4" cy="300.2" r="5.3" fill="url(#gp)"/><circle cx="364.4" cy="529.4" r="5.7" fill="url(#g24)"/><circle cx="424.1" cy="564.0" r="6.6" fill="url(#g51)"/><circle cx="460.3" cy="300.3" r="5.3" fill="url(#gp)"/><circle cx="406.6" cy="581.7" r="6.1" fill="url(#g37)"/><circle cx="529.1" cy="300.3" r="5.3" fill="url(#gp)"/><circle cx="346.5" cy="547.2" r="6.0" fill="url(#g33)"/><circle cx="467.2" cy="596.5" r="6.9" fill="url(#g59)"/><circle cx="415.3" cy="587.6" r="5.6" fill="url(#g22)"/><circle cx="597.9" cy="300.3" r="5.3" fill="url(#gp)"/><circle cx="363.2" cy="555.9" r="6.3" fill="url(#g43)"/><circle cx="666.7" cy="300.4" r="5.3" fill="url(#gp)"/><circle cx="428.2" cy="574.3" r="4.9" fill="url(#g0)"/><circle cx="376.8" cy="537.9" r="6.6" fill="url(#g51)"/><circle cx="434.0" cy="595.1" r="6.6" fill="url(#g52)"/><circle cx="430.4" cy="300.9" r="5.3" fill="url(#gp)"/><circle cx="485.8" cy="608.7" r="5.3" fill="url(#g12)"/><circle cx="499.2" cy="300.9" r="5.3" fill="url(#gp)"/><circle cx="568.0" cy="301.0" r="5.3" fill="url(#gp)"/><circle cx="636.9" cy="301.0" r="5.3" fill="url(#gp)"/><circle cx="410.8" cy="563.0" r="6.6" fill="url(#g51)"/><circle cx="480.3" cy="595.0" r="6.0" fill="url(#g33)"/><circle cx="360.1" cy="515.9" r="4.9" fill="url(#g2)"/><circle cx="371.0" cy="511.8" r="6.5" fill="url(#g48)"/><circle cx="655.9" cy="434.6" r="5.6" fill="url(#g23)"/><circle cx="400.5" cy="301.5" r="5.3" fill="url(#gp)"/><circle cx="469.3" cy="301.6" r="5.3" fill="url(#gp)"/><circle cx="538.2" cy="301.6" r="5.3" fill="url(#gp)"/><circle cx="506.8" cy="609.7" r="5.1" fill="url(#g6)"/><circle cx="398.3" cy="575.0" r="5.1" fill="url(#g7)"/><circle cx="670.1" cy="338.5" r="5.2" fill="url(#g9)"/><circle cx="607.0" cy="301.6" r="5.3" fill="url(#gp)"/><circle cx="337.7" cy="538.9" r="5.6" fill="url(#g22)"/><circle cx="439.2" cy="574.8" r="6.0" fill="url(#g35)"/><circle cx="675.8" cy="301.7" r="5.3" fill="url(#gp)"/><circle cx="400.8" cy="554.4" r="6.9" fill="url(#g61)"/><circle cx="425.2" cy="588.2" r="5.7" fill="url(#g24)"/><circle cx="462.8" cy="608.9" r="6.1" fill="url(#g36)"/><circle cx="450.3" cy="581.5" r="5.2" fill="url(#g9)"/><circle cx="640.7" cy="535.3" r="6.2" fill="url(#g38)"/><circle cx="459.3" cy="562.5" r="5.5" fill="url(#g18)"/><circle cx="370.7" cy="302.2" r="5.3" fill="url(#gp)"/><circle cx="390.6" cy="567.4" r="5.9" fill="url(#g29)"/><circle cx="439.5" cy="302.2" r="5.3" fill="url(#gp)"/><circle cx="508.3" cy="302.2" r="5.3" fill="url(#gp)"/><circle cx="577.1" cy="302.3" r="5.3" fill="url(#gp)"/><circle cx="496.0" cy="609.7" r="5.7" fill="url(#g24)"/><circle cx="645.9" cy="302.3" r="5.3" fill="url(#gp)"/><circle cx="664.7" cy="375.8" r="5.0" fill="url(#g2)"/><circle cx="672.8" cy="315.6" r="5.5" fill="url(#g17)"/><circle cx="373.8" cy="557.1" r="5.7" fill="url(#g25)"/><circle cx="356.1" cy="545.8" r="6.1" fill="url(#g36)"/><circle cx="670.6" cy="327.2" r="5.9" fill="url(#g29)"/><circle cx="646.3" cy="498.4" r="5.6" fill="url(#g21)"/><circle cx="409.6" cy="302.8" r="5.3" fill="url(#gp)"/><circle cx="657.5" cy="413.4" r="6.5" fill="url(#g48)"/><circle cx="642.6" cy="523.0" r="5.7" fill="url(#g23)"/><circle cx="478.4" cy="302.9" r="5.3" fill="url(#gp)"/><circle cx="547.3" cy="302.9" r="5.3" fill="url(#gp)"/><circle cx="445.1" cy="597.4" r="5.4" fill="url(#g17)"/><circle cx="503.3" cy="598.5" r="6.9" fill="url(#g61)"/><circle cx="342.8" cy="499.6" r="5.6" fill="url(#g21)"/><circle cx="616.1" cy="302.9" r="5.3" fill="url(#gp)"/><circle cx="412.0" cy="518.0" r="6.4" fill="url(#g46)"/><circle cx="409.8" cy="542.5" r="6.3" fill="url(#g42)"/><circle cx="418.0" cy="578.7" r="6.5" fill="url(#g49)"/><circle cx="388.5" cy="540.3" r="5.9" fill="url(#g31)"/><circle cx="379.7" cy="303.5" r="5.3" fill="url(#gp)"/><circle cx="450.3" cy="569.8" r="6.3" fill="url(#g42)"/><circle cx="349.0" cy="516.2" r="6.6" fill="url(#g52)"/><circle cx="642.7" cy="511.0" r="7.0" fill="url(#g62)"/><circle cx="448.6" cy="303.5" r="5.3" fill="url(#gp)"/><circle cx="660.4" cy="401.8" r="5.1" fill="url(#g5)"/><circle cx="517.4" cy="303.5" r="5.3" fill="url(#gp)"/><circle cx="654.0" cy="444.6" r="5.3" fill="url(#g12)"/><circle cx="586.2" cy="303.6" r="5.3" fill="url(#gp)"/><circle cx="385.3" cy="559.1" r="6.2" fill="url(#g40)"/><circle cx="655.0" cy="303.6" r="5.3" fill="url(#gp)"/><circle cx="650.0" cy="465.9" r="6.0" fill="url(#g35)"/><circle cx="666.4" cy="355.4" r="5.5" fill="url(#g20)"/><circle cx="406.9" cy="573.4" r="5.2" fill="url(#g8)"/><circle cx="634.2" cy="575.8" r="6.1" fill="url(#g36)"/><circle cx="639.3" cy="546.8" r="5.2" fill="url(#g9)"/><circle cx="459.2" cy="577.7" r="5.1" fill="url(#g8)"/><circle cx="647.7" cy="477.7" r="6.6" fill="url(#g50)"/><circle cx="348.2" cy="537.6" r="5.7" fill="url(#g23)"/><circle cx="418.7" cy="304.1" r="5.3" fill="url(#gp)"/><circle cx="456.3" cy="599.4" r="5.8" fill="url(#g26)"/><circle cx="487.5" cy="304.2" r="5.3" fill="url(#gp)"/><circle cx="556.3" cy="304.2" r="5.3" fill="url(#gp)"/><circle cx="662.0" cy="385.7" r="5.4" fill="url(#g16)"/><circle cx="433.5" cy="565.7" r="5.2" fill="url(#g9)"/><circle cx="625.2" cy="304.2" r="5.3" fill="url(#gp)"/><circle cx="439.2" cy="586.5" r="6.9" fill="url(#g59)"/><circle cx="380.4" cy="506.1" r="5.4" fill="url(#g14)"/><circle cx="652.3" cy="454.7" r="5.1" fill="url(#g7)"/><circle cx="478.2" cy="612.6" r="5.1" fill="url(#g5)"/><circle cx="369.1" cy="546.4" r="6.6" fill="url(#g50)"/><circle cx="632.0" cy="586.3" r="6.4" fill="url(#g45)"/><circle cx="473.3" cy="588.5" r="5.4" fill="url(#g14)"/><circle cx="339.0" cy="528.6" r="6.6" fill="url(#g51)"/><circle cx="388.8" cy="304.8" r="5.3" fill="url(#gp)"/><circle cx="372.3" cy="526.5" r="5.5" fill="url(#g19)"/><circle cx="457.7" cy="304.8" r="5.3" fill="url(#gp)"/><circle cx="526.5" cy="304.8" r="5.3" fill="url(#gp)"/><circle cx="391.3" cy="521.2" r="5.0" fill="url(#g2)"/><circle cx="483.7" cy="586.4" r="5.6" fill="url(#g21)"/><circle cx="595.3" cy="304.9" r="5.3" fill="url(#gp)"/><circle cx="664.1" cy="304.9" r="5.3" fill="url(#gp)"/><circle cx="400.7" cy="565.1" r="5.7" fill="url(#g23)"/><circle cx="513.9" cy="613.0" r="5.1" fill="url(#g8)"/><circle cx="398.6" cy="543.6" r="5.1" fill="url(#g6)"/><circle cx="429.9" cy="581.1" r="5.7" fill="url(#g25)"/><circle cx="470.9" cy="606.3" r="4.9" fill="url(#g2)"/><circle cx="415.8" cy="553.1" r="6.4" fill="url(#g46)"/><circle cx="339.5" cy="510.6" r="4.9" fill="url(#g1)"/><circle cx="427.8" cy="305.4" r="5.3" fill="url(#gp)"/><circle cx="496.6" cy="305.5" r="5.3" fill="url(#gp)"/><circle cx="361.3" cy="523.5" r="5.5" fill="url(#g17)"/><circle cx="565.4" cy="305.5" r="5.3" fill="url(#gp)"/><circle cx="427.5" cy="557.1" r="5.6" fill="url(#g22)"/><circle cx="634.2" cy="305.5" r="5.3" fill="url(#gp)"/><circle cx="628.1" cy="612.6" r="6.0" fill="url(#g35)"/><circle cx="384.4" cy="529.8" r="6.2" fill="url(#g38)"/><circle cx="487.9" cy="614.0" r="5.0" fill="url(#g4)"/><circle cx="491.6" cy="595.0" r="5.8" fill="url(#g27)"/><circle cx="414.6" cy="530.4" r="6.9" fill="url(#g61)"/><circle cx="629.0" cy="599.5" r="6.8" fill="url(#g59)"/><circle cx="397.9" cy="306.1" r="5.3" fill="url(#gp)"/><circle cx="635.6" cy="556.1" r="6.5" fill="url(#g47)"/><circle cx="466.7" cy="306.1" r="5.3" fill="url(#gp)"/><circle cx="535.6" cy="306.1" r="5.3" fill="url(#gp)"/><circle cx="604.4" cy="306.2" r="5.3" fill="url(#gp)"/><circle cx="360.5" cy="535.8" r="6.8" fill="url(#g56)"/><circle cx="673.2" cy="306.2" r="5.3" fill="url(#gp)"/><circle cx="532.9" cy="601.4" r="5.4" fill="url(#g17)"/><circle cx="662.8" cy="366.3" r="6.4" fill="url(#g46)"/><circle cx="379.7" cy="549.1" r="5.6" fill="url(#g22)"/><circle cx="569.2" cy="613.8" r="5.6" fill="url(#g21)"/><circle cx="451.9" cy="590.2" r="5.6" fill="url(#g22)"/><circle cx="510.2" cy="604.2" r="5.1" fill="url(#g7)"/><circle cx="653.6" cy="425.1" r="7.0" fill="url(#g62)"/><circle cx="368.1" cy="306.7" r="5.3" fill="url(#gp)"/><circle cx="436.9" cy="306.7" r="5.3" fill="url(#gp)"/><circle cx="505.7" cy="306.8" r="5.3" fill="url(#gp)"/><circle cx="414.4" cy="569.0" r="5.0" fill="url(#g3)"/><circle cx="574.5" cy="306.8" r="5.3" fill="url(#gp)"/><circle cx="643.3" cy="306.8" r="5.3" fill="url(#gp)"/><circle cx="461.9" cy="593.1" r="6.4" fill="url(#g45)"/><circle cx="644.2" cy="489.8" r="6.9" fill="url(#g61)"/><circle cx="561.9" cy="602.3" r="6.3" fill="url(#g43)"/><circle cx="482.7" cy="603.5" r="7.0" fill="url(#g63)"/><circle cx="531.3" cy="614.7" r="5.3" fill="url(#g14)"/><circle cx="494.7" cy="584.0" r="5.7" fill="url(#g25)"/><circle cx="665.6" cy="344.4" r="6.4" fill="url(#g45)"/><circle cx="463.2" cy="569.1" r="6.2" fill="url(#g39)"/><circle cx="407.0" cy="307.4" r="5.3" fill="url(#gp)"/><circle cx="359.4" cy="510.8" r="6.5" fill="url(#g47)"/><circle cx="475.8" cy="307.4" r="5.3" fill="url(#gp)"/><circle cx="392.1" cy="551.6" r="6.2" fill="url(#g39)"/><circle cx="544.6" cy="307.4" r="5.3" fill="url(#gp)"/><circle cx="613.5" cy="307.5" r="5.3" fill="url(#gp)"/><circle cx="350.9" cy="527.0" r="6.5" fill="url(#g48)"/><circle cx="420.9" cy="542.2" r="6.2" fill="url(#g41)"/><circle cx="424.8" cy="570.2" r="6.1" fill="url(#g38)"/><circle cx="442.6" cy="564.4" r="5.4" fill="url(#g15)"/><circle cx="659.7" cy="394.5" r="5.0" fill="url(#g4)"/><circle cx="503.1" cy="614.1" r="6.5" fill="url(#g48)"/><circle cx="393.9" cy="535.4" r="5.2" fill="url(#g8)"/><circle cx="472.2" cy="598.0" r="5.5" fill="url(#g20)"/><circle cx="640.1" cy="528.7" r="5.3" fill="url(#g11)"/><circle cx="408.9" cy="561.7" r="5.4" fill="url(#g14)"/><circle cx="377.1" cy="308.0" r="5.3" fill="url(#gp)"/><circle cx="634.1" cy="567.7" r="5.6" fill="url(#g21)"/><circle cx="446.0" cy="308.0" r="5.3" fill="url(#gp)"/><circle cx="514.8" cy="308.1" r="5.3" fill="url(#gp)"/><circle cx="653.1" cy="437.3" r="5.3" fill="url(#g11)"/><circle cx="583.6" cy="308.1" r="5.3" fill="url(#gp)"/><circle cx="652.4" cy="308.1" r="5.3" fill="url(#gp)"/><circle cx="437.7" cy="554.3" r="5.5" fill="url(#g19)"/><circle cx="661.8" cy="377.6" r="5.1" fill="url(#g5)"/><circle cx="374.8" cy="537.4" r="6.9" fill="url(#g60)"/><circle cx="637.6" cy="539.6" r="5.8" fill="url(#g28)"/><circle cx="522.4" cy="606.4" r="7.0" fill="url(#g63)"/><circle cx="337.2" cy="519.0" r="5.2" fill="url(#g9)"/><circle cx="430.1" cy="519.8" r="5.8" fill="url(#g29)"/><circle cx="416.1" cy="308.7" r="5.3" fill="url(#gp)"/><circle cx="493.9" cy="606.9" r="6.0" fill="url(#g34)"/><circle cx="484.9" cy="308.7" r="5.3" fill="url(#gp)"/><circle cx="339.5" cy="499.8" r="4.9" fill="url(#g0)"/><circle cx="553.7" cy="308.7" r="5.3" fill="url(#gp)"/><circle cx="622.5" cy="308.8" r="5.3" fill="url(#gp)"/><circle cx="436.8" cy="573.5" r="6.0" fill="url(#g34)"/><circle cx="343.1" cy="480.2" r="5.7" fill="url(#g24)"/><circle cx="447.8" cy="578.3" r="6.6" fill="url(#g53)"/><circle cx="485.8" cy="575.9" r="6.7" fill="url(#g56)"/><circle cx="642.6" cy="501.4" r="6.1" fill="url(#g37)"/><circle cx="525.8" cy="595.4" r="5.1" fill="url(#g6)"/><circle cx="386.2" cy="309.3" r="5.3" fill="url(#gp)"/><circle cx="455.0" cy="309.3" r="5.3" fill="url(#gp)"/><circle cx="548.1" cy="615.8" r="6.4" fill="url(#g44)"/><circle cx="405.0" cy="537.7" r="6.1" fill="url(#g36)"/><circle cx="655.4" cy="404.7" r="6.9" fill="url(#g62)"/><circle cx="523.9" cy="309.4" r="5.3" fill="url(#gp)"/><circle cx="418.6" cy="563.1" r="5.2" fill="url(#g10)"/><circle cx="632.1" cy="579.4" r="5.3" fill="url(#g11)"/><circle cx="403.9" cy="551.1" r="6.8" fill="url(#g57)"/><circle cx="592.7" cy="309.4" r="5.3" fill="url(#gp)"/><circle cx="661.5" cy="309.4" r="5.3" fill="url(#gp)"/><circle cx="666.3" cy="329.7" r="6.8" fill="url(#g57)"/><circle cx="650.6" cy="448.2" r="5.5" fill="url(#g20)"/><circle cx="376.8" cy="499.8" r="5.9" fill="url(#g30)"/><circle cx="386.0" cy="542.6" r="5.7" fill="url(#g24)"/><circle cx="647.6" cy="470.8" r="5.2" fill="url(#g11)"/><circle cx="458.9" cy="582.9" r="6.3" fill="url(#g41)"/><circle cx="380.0" cy="514.8" r="7.0" fill="url(#g62)"/><circle cx="431.2" cy="546.1" r="5.3" fill="url(#g11)"/><circle cx="514.6" cy="595.3" r="6.1" fill="url(#g36)"/><circle cx="425.2" cy="310.0" r="5.3" fill="url(#gp)"/><circle cx="517.0" cy="617.7" r="5.3" fill="url(#g14)"/><circle cx="494.0" cy="310.0" r="5.3" fill="url(#gp)"/><circle cx="562.8" cy="310.0" r="5.3" fill="url(#gp)"/><circle cx="631.6" cy="310.1" r="5.3" fill="url(#gp)"/><circle cx="648.2" cy="459.5" r="6.0" fill="url(#g33)"/><circle cx="539.3" cy="607.9" r="6.1" fill="url(#g35)"/><circle cx="369.3" cy="507.8" r="5.1" fill="url(#g5)"/><circle cx="629.8" cy="589.4" r="5.7" fill="url(#g24)"/><circle cx="395.3" cy="310.6" r="5.3" fill="url(#gp)"/><circle cx="366.1" cy="528.1" r="5.8" fill="url(#g26)"/><circle cx="464.1" cy="310.6" r="5.3" fill="url(#gp)"/><circle cx="532.9" cy="310.7" r="5.3" fill="url(#gp)"/><circle cx="355.8" cy="479.5" r="5.4" fill="url(#g16)"/><circle cx="601.8" cy="310.7" r="5.3" fill="url(#gp)"/><circle cx="449.1" cy="553.9" r="5.2" fill="url(#g10)"/><circle cx="670.6" cy="310.7" r="5.3" fill="url(#gp)"/><circle cx="481.1" cy="592.3" r="6.3" fill="url(#g43)"/><circle cx="347.3" cy="516.4" r="5.7" fill="url(#g25)"/><circle cx="639.9" cy="514.0" r="6.1" fill="url(#g36)"/><circle cx="431.7" cy="563.4" r="6.2" fill="url(#g40)"/><circle cx="470.6" cy="587.1" r="5.6" fill="url(#g21)"/><circle cx="389.9" cy="523.2" r="6.0" fill="url(#g33)"/><circle cx="340.2" cy="490.4" r="5.2" fill="url(#g11)"/><circle cx="455.8" cy="543.3" r="6.9" fill="url(#g59)"/><circle cx="365.4" cy="311.2" r="5.3" fill="url(#gp)"/><circle cx="434.3" cy="311.3" r="5.3" fill="url(#gp)"/><circle cx="337.9" cy="509.8" r="5.8" fill="url(#g26)"/><circle cx="503.1" cy="311.3" r="5.3" fill="url(#gp)"/><circle cx="507.4" cy="566.8" r="5.4" fill="url(#g16)"/><circle cx="511.1" cy="610.6" r="5.2" fill="url(#g10)"/><circle cx="525.8" cy="619.4" r="5.0" fill="url(#g4)"/><circle cx="571.9" cy="311.3" r="5.3" fill="url(#gp)"/><circle cx="358.0" cy="521.2" r="5.6" fill="url(#g23)"/><circle cx="640.7" cy="311.3" r="5.3" fill="url(#gp)"/><circle cx="654.3" cy="416.8" r="5.5" fill="url(#g19)"/><circle cx="625.7" cy="606.1" r="6.8" fill="url(#g57)"/><circle cx="420.2" cy="508.8" r="5.2" fill="url(#g8)"/><circle cx="570.3" cy="595.5" r="6.6" fill="url(#g52)"/><circle cx="461.6" cy="555.9" r="6.2" fill="url(#g39)"/><circle cx="396.3" cy="543.6" r="5.2" fill="url(#g8)"/><circle cx="350.5" cy="494.7" r="5.9" fill="url(#g30)"/><circle cx="361.0" cy="500.7" r="6.0" fill="url(#g32)"/><circle cx="501.0" cy="579.6" r="5.8" fill="url(#g26)"/><circle cx="491.1" cy="598.0" r="5.1" fill="url(#g5)"/><circle cx="503.0" cy="601.0" r="6.8" fill="url(#g57)"/><circle cx="498.8" cy="552.0" r="5.3" fill="url(#g11)"/><circle cx="404.4" cy="311.9" r="5.3" fill="url(#gp)"/><circle cx="624.5" cy="618.6" r="6.1" fill="url(#g38)"/><circle cx="576.6" cy="617.7" r="6.9" fill="url(#g61)"/><circle cx="473.2" cy="311.9" r="5.3" fill="url(#gp)"/><circle cx="542.0" cy="312.0" r="5.3" fill="url(#gp)"/><circle cx="471.0" cy="563.8" r="6.1" fill="url(#g35)"/><circle cx="610.8" cy="312.0" r="5.3" fill="url(#gp)"/><circle cx="533.7" cy="599.6" r="4.9" fill="url(#g2)"/><circle cx="634.0" cy="548.0" r="6.6" fill="url(#g50)"/><circle cx="512.9" cy="583.4" r="6.8" fill="url(#g58)"/><circle cx="441.8" cy="546.8" r="5.8" fill="url(#g27)"/><circle cx="567.6" cy="608.5" r="5.8" fill="url(#g28)"/><circle cx="444.8" cy="569.6" r="5.0" fill="url(#g3)"/><circle cx="423.1" cy="553.0" r="6.8" fill="url(#g57)"/><circle cx="385.1" cy="533.6" r="5.7" fill="url(#g23)"/><circle cx="374.5" cy="312.5" r="5.3" fill="url(#gp)"/><circle cx="455.3" cy="573.2" r="6.0" fill="url(#g33)"/><circle cx="422.8" cy="532.8" r="6.1" fill="url(#g38)"/><circle cx="443.3" cy="312.6" r="5.3" fill="url(#gp)"/><circle cx="512.2" cy="312.6" r="5.3" fill="url(#gp)"/><circle cx="444.9" cy="525.3" r="6.0" fill="url(#g32)"/><circle cx="581.0" cy="312.6" r="5.3" fill="url(#gp)"/><circle cx="537.2" cy="619.4" r="6.2" fill="url(#g38)"/><circle cx="649.8" cy="312.6" r="5.3" fill="url(#gp)"/><circle cx="643.6" cy="479.8" r="6.6" fill="url(#g50)"/><circle cx="549.4" cy="584.7" r="5.2" fill="url(#g9)"/><circle cx="660.6" cy="369.8" r="5.4" fill="url(#g15)"/><circle cx="632.6" cy="560.7" r="5.9" fill="url(#g31)"/><circle cx="411.4" cy="528.1" r="6.1" fill="url(#g36)"/><circle cx="580.0" cy="604.9" r="6.7" fill="url(#g54)"/><circle cx="376.8" cy="526.4" r="6.0" fill="url(#g34)"/><circle cx="660.9" cy="339.3" r="5.6" fill="url(#g21)"/><circle cx="433.7" cy="527.7" r="5.5" fill="url(#g19)"/><circle cx="364.7" cy="484.8" r="5.5" fill="url(#g19)"/><circle cx="482.8" cy="566.2" r="5.9" fill="url(#g31)"/><circle cx="413.5" cy="313.2" r="5.3" fill="url(#gp)"/><circle cx="638.3" cy="524.2" r="5.3" fill="url(#g13)"/><circle cx="548.3" cy="601.3" r="6.3" fill="url(#g41)"/><circle cx="613.1" cy="620.9" r="5.3" fill="url(#g13)"/><circle cx="556.2" cy="610.1" r="5.8" fill="url(#g27)"/><circle cx="482.3" cy="313.2" r="5.3" fill="url(#gp)"/><circle cx="413.8" cy="545.4" r="6.7" fill="url(#g56)"/><circle cx="551.1" cy="313.3" r="5.3" fill="url(#gp)"/><circle cx="468.3" cy="576.5" r="6.8" fill="url(#g57)"/><circle cx="619.9" cy="313.3" r="5.3" fill="url(#gp)"/><circle cx="661.4" cy="351.8" r="6.8" fill="url(#g59)"/><circle cx="434.9" cy="537.8" r="5.3" fill="url(#g13)"/><circle cx="530.2" cy="588.9" r="5.8" fill="url(#g27)"/><circle cx="630.8" cy="571.5" r="5.9" fill="url(#g29)"/><circle cx="383.6" cy="313.8" r="5.3" fill="url(#gp)"/><circle cx="490.6" cy="587.4" r="7.0" fill="url(#g63)"/><circle cx="452.4" cy="313.9" r="5.3" fill="url(#gp)"/><circle cx="641.7" cy="492.9" r="6.1" fill="url(#g37)"/><circle cx="478.2" cy="582.3" r="5.9" fill="url(#g30)"/><circle cx="521.2" cy="313.9" r="5.3" fill="url(#gp)"/><circle cx="590.1" cy="313.9" r="5.3" fill="url(#gp)"/><circle cx="651.4" cy="427.0" r="5.8" fill="url(#g27)"/><circle cx="658.9" cy="313.9" r="5.3" fill="url(#gp)"/><circle cx="369.2" cy="517.8" r="6.5" fill="url(#g48)"/><circle cx="402.9" cy="520.7" r="5.4" fill="url(#g14)"/><circle cx="529.1" cy="610.2" r="6.1" fill="url(#g37)"/><circle cx="546.1" cy="622.4" r="5.0" fill="url(#g2)"/><circle cx="348.1" cy="505.7" r="6.1" fill="url(#g38)"/><circle cx="513.9" cy="603.4" r="5.1" fill="url(#g7)"/><circle cx="648.4" cy="439.4" r="6.8" fill="url(#g57)"/><circle cx="369.9" cy="494.9" r="5.6" fill="url(#g22)"/><circle cx="635.6" cy="535.4" r="5.9" fill="url(#g31)"/><circle cx="343.2" cy="471.7" r="6.8" fill="url(#g57)"/><circle cx="441.7" cy="559.6" r="5.9" fill="url(#g31)"/><circle cx="389.5" cy="509.4" r="6.8" fill="url(#g56)"/><circle cx="396.8" cy="532.6" r="6.4" fill="url(#g47)"/><circle cx="422.6" cy="314.5" r="5.3" fill="url(#gp)"/><circle cx="491.4" cy="314.5" r="5.3" fill="url(#gp)"/><circle cx="655.9" cy="393.1" r="6.0" fill="url(#g33)"/><circle cx="560.2" cy="314.6" r="5.3" fill="url(#gp)"/><circle cx="629.0" cy="314.6" r="5.3" fill="url(#gp)"/><circle cx="358.1" cy="510.8" r="6.0" fill="url(#g32)"/><circle cx="337.5" cy="499.8" r="5.4" fill="url(#g17)"/><circle cx="627.4" cy="595.6" r="5.4" fill="url(#g15)"/><circle cx="347.8" cy="484.2" r="6.0" fill="url(#g33)"/><circle cx="657.8" cy="380.4" r="5.7" fill="url(#g26)"/><circle cx="586.0" cy="623.2" r="5.0" fill="url(#g2)"/><circle cx="392.7" cy="315.1" r="5.3" fill="url(#gp)"/><circle cx="461.5" cy="315.2" r="5.3" fill="url(#gp)"/><circle cx="530.3" cy="315.2" r="5.3" fill="url(#gp)"/><circle cx="452.6" cy="562.4" r="6.4" fill="url(#g46)"/><circle cx="599.2" cy="315.2" r="5.3" fill="url(#gp)"/><circle cx="668.0" cy="315.2" r="5.3" fill="url(#gp)"/><circle cx="646.8" cy="452.9" r="6.1" fill="url(#g37)"/><circle cx="502.8" cy="590.7" r="6.5" fill="url(#g48)"/><circle cx="628.5" cy="583.2" r="5.7" fill="url(#g25)"/><circle cx="489.3" cy="556.1" r="6.5" fill="url(#g50)"/><circle cx="413.2" cy="514.8" r="6.3" fill="url(#g44)"/><circle cx="432.9" cy="552.5" r="5.3" fill="url(#g12)"/><circle cx="644.2" cy="465.6" r="6.7" fill="url(#g53)"/><circle cx="638.8" cy="504.4" r="6.6" fill="url(#g50)"/><circle cx="362.8" cy="315.8" r="5.3" fill="url(#gp)"/><circle cx="446.5" cy="536.8" r="6.4" fill="url(#g44)"/><circle cx="523.9" cy="600.6" r="7.0" fill="url(#g63)"/><circle cx="431.6" cy="315.8" r="5.3" fill="url(#gp)"/><circle cx="406.4" cy="536.7" r="5.2" fill="url(#g9)"/><circle cx="500.5" cy="315.8" r="5.3" fill="url(#gp)"/><circle cx="569.3" cy="315.8" r="5.3" fill="url(#gp)"/><circle cx="425.1" cy="519.8" r="6.8" fill="url(#g59)"/><circle cx="638.1" cy="315.9" r="5.3" fill="url(#gp)"/><circle cx="559.2" cy="601.5" r="5.3" fill="url(#g11)"/><circle cx="474.5" cy="534.4" r="5.8" fill="url(#g28)"/><circle cx="425.7" cy="544.2" r="6.4" fill="url(#g46)"/><circle cx="501.5" cy="560.9" r="6.5" fill="url(#g48)"/><circle cx="469.0" cy="550.5" r="6.3" fill="url(#g43)"/><circle cx="544.7" cy="613.9" r="5.8" fill="url(#g28)"/><circle cx="363.9" cy="465.8" r="6.9" fill="url(#g60)"/><circle cx="555.2" cy="620.0" r="5.5" fill="url(#g19)"/><circle cx="426.1" cy="501.7" r="6.9" fill="url(#g61)"/><circle cx="505.8" cy="573.2" r="5.2" fill="url(#g10)"/><circle cx="401.8" cy="316.4" r="5.3" fill="url(#gp)"/><circle cx="470.6" cy="316.5" r="5.3" fill="url(#gp)"/><circle cx="381.7" cy="498.7" r="6.8" fill="url(#g59)"/><circle cx="539.4" cy="316.5" r="5.3" fill="url(#gp)"/><circle cx="608.2" cy="316.5" r="5.3" fill="url(#gp)"/><circle cx="565.5" cy="622.5" r="6.8" fill="url(#g57)"/><circle cx="512.5" cy="593.8" r="5.9" fill="url(#g30)"/><circle cx="383.9" cy="520.1" r="5.7" fill="url(#g25)"/><circle cx="453.3" cy="551.7" r="6.6" fill="url(#g53)"/><circle cx="515.0" cy="566.8" r="6.0" fill="url(#g32)"/><circle cx="463.4" cy="566.4" r="5.5" fill="url(#g17)"/><circle cx="357.3" cy="490.4" r="5.6" fill="url(#g21)"/><circle cx="354.3" cy="474.9" r="5.9" fill="url(#g31)"/><circle cx="371.9" cy="317.1" r="5.3" fill="url(#gp)"/><circle cx="652.9" cy="404.3" r="6.3" fill="url(#g41)"/><circle cx="440.7" cy="317.1" r="5.3" fill="url(#gp)"/><circle cx="509.5" cy="317.1" r="5.3" fill="url(#gp)"/><circle cx="578.4" cy="317.1" r="5.3" fill="url(#gp)"/><circle cx="530.0" cy="580.7" r="5.0" fill="url(#g3)"/><circle cx="647.2" cy="317.2" r="5.3" fill="url(#gp)"/><circle cx="476.2" cy="572.3" r="5.3" fill="url(#g13)"/><circle cx="487.9" cy="575.5" r="6.8" fill="url(#g59)"/><circle cx="465.8" cy="525.1" r="7.0" fill="url(#g62)"/><circle cx="638.2" cy="515.4" r="4.9" fill="url(#g2)"/><circle cx="413.5" cy="495.3" r="6.9" fill="url(#g60)"/><circle cx="538.1" cy="605.0" r="6.3" fill="url(#g43)"/><circle cx="651.3" cy="416.9" r="5.8" fill="url(#g28)"/><circle cx="570.5" cy="602.4" r="5.8" fill="url(#g27)"/><circle cx="338.5" cy="490.0" r="6.2" fill="url(#g38)"/><circle cx="410.9" cy="317.7" r="5.3" fill="url(#gp)"/><circle cx="416.4" cy="536.7" r="5.2" fill="url(#g10)"/><circle cx="479.7" cy="317.8" r="5.3" fill="url(#gp)"/><circle cx="631.1" cy="563.9" r="5.0" fill="url(#g2)"/><circle cx="548.5" cy="317.8" r="5.3" fill="url(#gp)"/><circle cx="368.4" cy="505.3" r="6.8" fill="url(#g58)"/><circle cx="622.4" cy="613.4" r="6.4" fill="url(#g45)"/><circle cx="617.3" cy="317.8" r="5.3" fill="url(#gp)"/><circle cx="593.1" cy="588.6" r="6.9" fill="url(#g61)"/><circle cx="356.9" cy="501.7" r="5.3" fill="url(#g12)"/><circle cx="620.7" cy="624.3" r="6.4" fill="url(#g47)"/><circle cx="394.8" cy="522.3" r="5.8" fill="url(#g26)"/><circle cx="347.8" cy="496.0" r="5.3" fill="url(#g12)"/><circle cx="587.7" cy="611.6" r="6.5" fill="url(#g47)"/><circle cx="442.2" cy="550.7" r="5.0" fill="url(#g4)"/><circle cx="377.1" cy="513.2" r="4.9" fill="url(#g1)"/><circle cx="541.7" cy="586.3" r="5.1" fill="url(#g7)"/><circle cx="551.9" cy="592.0" r="6.4" fill="url(#g47)"/><circle cx="658.0" cy="362.0" r="6.7" fill="url(#g53)"/><circle cx="403.8" cy="528.4" r="4.9" fill="url(#g1)"/><circle cx="438.3" cy="516.9" r="6.7" fill="url(#g54)"/><circle cx="564.0" cy="592.6" r="5.3" fill="url(#g13)"/><circle cx="381.0" cy="318.4" r="5.3" fill="url(#gp)"/><circle cx="449.8" cy="318.4" r="5.3" fill="url(#gp)"/><circle cx="632.5" cy="543.7" r="6.0" fill="url(#g34)"/><circle cx="515.1" cy="549.4" r="5.6" fill="url(#g22)"/><circle cx="518.6" cy="318.4" r="5.3" fill="url(#gp)"/><circle cx="587.5" cy="318.4" r="5.3" fill="url(#gp)"/><circle cx="577.5" cy="625.6" r="5.9" fill="url(#g30)"/><circle cx="438.8" cy="529.1" r="5.1" fill="url(#g8)"/><circle cx="656.3" cy="318.5" r="5.3" fill="url(#gp)"/><circle cx="552.3" cy="566.2" r="5.8" fill="url(#g28)"/><circle cx="498.6" cy="580.0" r="5.8" fill="url(#g27)"/><circle cx="529.4" cy="569.2" r="6.9" fill="url(#g60)"/><circle cx="406.3" cy="505.9" r="5.9" fill="url(#g29)"/><circle cx="480.2" cy="550.0" r="5.5" fill="url(#g19)"/><circle cx="365.0" cy="478.6" r="6.0" fill="url(#g34)"/><circle cx="419.9" cy="319.0" r="5.3" fill="url(#gp)"/><circle cx="624.2" cy="602.3" r="5.7" fill="url(#g24)"/><circle cx="488.8" cy="319.1" r="5.3" fill="url(#gp)"/><circle cx="472.2" cy="561.6" r="6.6" fill="url(#g53)"/><circle cx="643.2" cy="475.6" r="4.9" fill="url(#g0)"/><circle cx="661.8" cy="332.7" r="6.7" fill="url(#g54)"/><circle cx="557.6" cy="319.1" r="5.3" fill="url(#gp)"/><circle cx="392.5" cy="500.8" r="4.9" fill="url(#g0)"/><circle cx="626.4" cy="319.1" r="5.3" fill="url(#gp)"/><circle cx="635.7" cy="524.6" r="5.3" fill="url(#g12)"/><circle cx="484.6" cy="538.6" r="6.6" fill="url(#g52)"/><circle cx="640.5" cy="485.6" r="6.0" fill="url(#g33)"/><circle cx="561.2" cy="611.9" r="6.6" fill="url(#g50)"/><circle cx="454.7" cy="531.3" r="5.6" fill="url(#g21)"/><circle cx="575.0" cy="612.9" r="6.8" fill="url(#g58)"/><circle cx="461.9" cy="557.9" r="4.9" fill="url(#g0)"/><circle cx="390.1" cy="319.7" r="5.3" fill="url(#gp)"/><circle cx="551.2" cy="606.2" r="6.3" fill="url(#g42)"/><circle cx="610.7" cy="617.4" r="6.6" fill="url(#g52)"/><circle cx="458.9" cy="319.7" r="5.3" fill="url(#gp)"/><circle cx="437.3" cy="541.4" r="5.9" fill="url(#g30)"/><circle cx="527.7" cy="319.7" r="5.3" fill="url(#gp)"/><circle cx="510.4" cy="582.4" r="6.2" fill="url(#g40)"/><circle cx="583.6" cy="599.2" r="7.0" fill="url(#g62)"/><circle cx="596.5" cy="319.7" r="5.3" fill="url(#gp)"/><circle cx="372.3" cy="488.0" r="6.0" fill="url(#g33)"/><circle cx="665.4" cy="319.8" r="5.3" fill="url(#gp)"/><circle cx="522.1" cy="587.5" r="6.9" fill="url(#g59)"/><circle cx="586.1" cy="628.2" r="4.9" fill="url(#g1)"/><circle cx="384.8" cy="487.2" r="6.1" fill="url(#g36)"/><circle cx="415.8" cy="526.1" r="6.7" fill="url(#g56)"/><circle cx="534.0" cy="594.2" r="6.7" fill="url(#g54)"/><circle cx="538.5" cy="576.7" r="5.2" fill="url(#g10)"/><circle cx="625.5" cy="592.9" r="5.3" fill="url(#g12)"/><circle cx="427.4" cy="532.4" r="6.8" fill="url(#g56)"/><circle cx="628.2" cy="572.8" r="5.4" fill="url(#g16)"/><circle cx="484.7" cy="565.8" r="6.5" fill="url(#g47)"/><circle cx="360.2" cy="320.3" r="5.3" fill="url(#gp)"/><circle cx="491.1" cy="548.4" r="4.9" fill="url(#g1)"/><circle cx="429.0" cy="320.3" r="5.3" fill="url(#gp)"/><circle cx="497.9" cy="320.4" r="5.3" fill="url(#gp)"/><circle cx="566.7" cy="320.4" r="5.3" fill="url(#gp)"/><circle cx="633.9" cy="534.2" r="5.2" fill="url(#g9)"/><circle cx="635.5" cy="320.4" r="5.3" fill="url(#gp)"/><circle cx="417.5" cy="507.7" r="5.2" fill="url(#g10)"/><circle cx="600.2" cy="609.5" r="6.3" fill="url(#g42)"/><circle cx="376.4" cy="476.7" r="6.0" fill="url(#g34)"/><circle cx="502.6" cy="549.9" r="6.7" fill="url(#g54)"/><circle cx="654.0" cy="386.5" r="6.1" fill="url(#g38)"/><circle cx="342.3" cy="458.7" r="6.8" fill="url(#g56)"/><circle cx="647.4" cy="433.2" r="6.0" fill="url(#g34)"/><circle cx="638.6" cy="496.5" r="5.7" fill="url(#g23)"/><circle cx="472.9" cy="542.0" r="5.5" fill="url(#g17)"/><circle cx="427.9" cy="511.1" r="5.6" fill="url(#g20)"/><circle cx="399.2" cy="321.0" r="5.3" fill="url(#gp)"/><circle cx="347.3" cy="469.3" r="5.2" fill="url(#g10)"/><circle cx="468.0" cy="321.0" r="5.3" fill="url(#gp)"/><circle cx="339.4" cy="478.7" r="6.9" fill="url(#g61)"/><circle cx="655.8" cy="374.4" r="5.9" fill="url(#g30)"/><circle cx="536.8" cy="321.0" r="5.3" fill="url(#gp)"/><circle cx="596.9" cy="626.9" r="6.9" fill="url(#g59)"/><circle cx="384.0" cy="507.9" r="5.2" fill="url(#g9)"/><circle cx="364.5" cy="496.1" r="5.5" fill="url(#g17)"/><circle cx="605.6" cy="321.0" r="5.3" fill="url(#gp)"/><circle cx="405.1" cy="517.9" r="6.2" fill="url(#g38)"/><circle cx="395.6" cy="511.6" r="6.5" fill="url(#g49)"/><circle cx="434.1" cy="479.8" r="6.7" fill="url(#g54)"/><circle cx="496.5" cy="569.5" r="6.5" fill="url(#g49)"/><circle cx="448.5" cy="543.3" r="5.8" fill="url(#g26)"/><circle cx="349.0" cy="486.9" r="5.3" fill="url(#g13)"/><circle cx="520.8" cy="559.0" r="6.8" fill="url(#g58)"/><circle cx="658.8" cy="346.4" r="6.7" fill="url(#g56)"/><circle cx="644.8" cy="445.2" r="6.6" fill="url(#g50)"/><circle cx="369.3" cy="321.6" r="5.3" fill="url(#gp)"/><circle cx="464.1" cy="535.2" r="5.0" fill="url(#g4)"/><circle cx="438.1" cy="321.6" r="5.3" fill="url(#gp)"/><circle cx="626.1" cy="582.7" r="5.5" fill="url(#g18)"/><circle cx="506.9" cy="321.6" r="5.3" fill="url(#gp)"/><circle cx="575.8" cy="321.7" r="5.3" fill="url(#gp)"/><circle cx="644.6" cy="321.7" r="5.3" fill="url(#gp)"/><circle cx="397.3" cy="491.0" r="6.8" fill="url(#g58)"/><circle cx="643.2" cy="458.4" r="6.1" fill="url(#g36)"/><circle cx="544.5" cy="598.2" r="5.1" fill="url(#g8)"/><circle cx="448.9" cy="512.9" r="5.8" fill="url(#g28)"/><circle cx="555.5" cy="582.6" r="5.2" fill="url(#g10)"/><circle cx="565.6" cy="585.3" r="5.3" fill="url(#g13)"/><circle cx="364.7" cy="455.1" r="6.8" fill="url(#g56)"/><circle cx="461.3" cy="546.1" r="6.6" fill="url(#g53)"/><circle cx="636.1" cy="508.1" r="5.9" fill="url(#g31)"/><circle cx="408.3" cy="322.3" r="5.3" fill="url(#gp)"/><circle cx="477.1" cy="322.3" r="5.3" fill="url(#gp)"/><circle cx="374.6" cy="498.6" r="5.3" fill="url(#g13)"/><circle cx="473.6" cy="531.4" r="5.4" fill="url(#g15)"/><circle cx="545.9" cy="322.3" r="5.3" fill="url(#gp)"/><circle cx="583.7" cy="619.3" r="5.1" fill="url(#g6)"/><circle cx="406.7" cy="474.4" r="5.8" fill="url(#g26)"/><circle cx="541.2" cy="566.6" r="6.3" fill="url(#g43)"/><circle cx="614.7" cy="322.3" r="5.3" fill="url(#gp)"/><circle cx="620.6" cy="620.6" r="5.1" fill="url(#g8)"/><circle cx="652.6" cy="397.6" r="5.1" fill="url(#g7)"/><circle cx="536.8" cy="550.5" r="5.7" fill="url(#g25)"/><circle cx="607.7" cy="629.3" r="6.3" fill="url(#g41)"/><circle cx="378.4" cy="322.9" r="5.3" fill="url(#gp)"/><circle cx="447.2" cy="322.9" r="5.3" fill="url(#gp)"/><circle cx="509.5" cy="571.3" r="6.7" fill="url(#g54)"/><circle cx="516.0" cy="322.9" r="5.3" fill="url(#gp)"/><circle cx="457.8" cy="521.4" r="6.1" fill="url(#g36)"/><circle cx="584.8" cy="323.0" r="5.3" fill="url(#gp)"/><circle cx="628.7" cy="560.6" r="5.5" fill="url(#g17)"/><circle cx="471.0" cy="552.0" r="5.2" fill="url(#g9)"/><circle cx="653.7" cy="323.0" r="5.3" fill="url(#gp)"/><circle cx="359.1" cy="487.6" r="5.2" fill="url(#g9)"/><circle cx="443.9" cy="522.9" r="5.3" fill="url(#g11)"/><circle cx="650.2" cy="410.1" r="5.5" fill="url(#g20)"/><circle cx="520.6" cy="577.1" r="6.7" fill="url(#g54)"/><circle cx="558.4" cy="599.4" r="6.4" fill="url(#g45)"/><circle cx="531.3" cy="584.1" r="6.2" fill="url(#g39)"/><circle cx="444.3" cy="534.7" r="5.8" fill="url(#g29)"/><circle cx="357.3" cy="464.9" r="5.2" fill="url(#g9)"/><circle cx="425.6" cy="522.4" r="6.2" fill="url(#g39)"/><circle cx="567.8" cy="606.6" r="5.1" fill="url(#g7)"/><circle cx="417.3" cy="323.6" r="5.3" fill="url(#gp)"/><circle cx="574.9" cy="579.3" r="5.8" fill="url(#g28)"/><circle cx="647.6" cy="421.7" r="6.2" fill="url(#g40)"/><circle cx="486.2" cy="323.6" r="5.3" fill="url(#gp)"/><circle cx="480.7" cy="556.0" r="5.2" fill="url(#g8)"/><circle cx="496.8" cy="539.3" r="6.9" fill="url(#g61)"/><circle cx="555.0" cy="323.6" r="5.3" fill="url(#gp)"/><circle cx="581.6" cy="588.1" r="5.5" fill="url(#g19)"/><circle cx="541.1" cy="590.2" r="5.3" fill="url(#g13)"/><circle cx="623.8" cy="323.6" r="5.3" fill="url(#gp)"/><circle cx="368.9" cy="467.9" r="6.5" fill="url(#g49)"/><circle cx="486.3" cy="520.3" r="5.2" fill="url(#g9)"/><circle cx="388.1" cy="477.0" r="6.6" fill="url(#g51)"/><circle cx="420.8" cy="478.0" r="7.0" fill="url(#g62)"/><circle cx="620.9" cy="611.0" r="5.6" fill="url(#g22)"/><circle cx="407.7" cy="497.6" r="5.8" fill="url(#g27)"/><circle cx="551.5" cy="573.1" r="5.5" fill="url(#g20)"/><circle cx="386.4" cy="498.1" r="6.3" fill="url(#g42)"/><circle cx="435.0" cy="528.8" r="4.9" fill="url(#g1)"/><circle cx="634.4" cy="518.2" r="5.4" fill="url(#g16)"/><circle cx="387.5" cy="324.2" r="5.3" fill="url(#gp)"/><circle cx="617.4" cy="630.9" r="6.1" fill="url(#g38)"/><circle cx="483.5" cy="530.0" r="4.9" fill="url(#g1)"/><circle cx="456.3" cy="324.2" r="5.3" fill="url(#gp)"/><circle cx="571.4" cy="595.1" r="7.0" fill="url(#g62)"/><circle cx="427.9" cy="500.4" r="6.4" fill="url(#g45)"/><circle cx="491.2" cy="559.3" r="5.6" fill="url(#g21)"/><circle cx="525.1" cy="324.2" r="5.3" fill="url(#gp)"/><circle cx="415.6" cy="516.1" r="5.3" fill="url(#g13)"/><circle cx="593.9" cy="324.3" r="5.3" fill="url(#gp)"/><circle cx="594.4" cy="617.6" r="5.9" fill="url(#g32)"/><circle cx="606.6" cy="601.3" r="5.8" fill="url(#g26)"/><circle cx="662.7" cy="324.3" r="5.3" fill="url(#gp)"/><circle cx="354.5" cy="477.0" r="7.0" fill="url(#g63)"/><circle cx="628.3" cy="549.8" r="6.7" fill="url(#g54)"/><circle cx="483.6" cy="508.4" r="6.6" fill="url(#g52)"/><circle cx="640.3" cy="470.6" r="6.1" fill="url(#g35)"/><circle cx="512.5" cy="552.6" r="5.2" fill="url(#g10)"/><circle cx="470.4" cy="520.0" r="6.7" fill="url(#g56)"/><circle cx="504.5" cy="529.0" r="5.6" fill="url(#g23)"/><circle cx="340.0" cy="449.1" r="4.9" fill="url(#g1)"/><circle cx="577.0" cy="607.3" r="5.7" fill="url(#g25)"/><circle cx="531.7" cy="561.7" r="5.1" fill="url(#g7)"/><circle cx="455.0" cy="537.8" r="5.4" fill="url(#g15)"/><circle cx="352.2" cy="453.8" r="6.3" fill="url(#g43)"/><circle cx="620.9" cy="601.5" r="6.6" fill="url(#g50)"/><circle cx="357.6" cy="324.8" r="5.3" fill="url(#gp)"/><circle cx="426.4" cy="324.9" r="5.3" fill="url(#gp)"/><circle cx="406.1" cy="509.0" r="5.4" fill="url(#g14)"/><circle cx="495.2" cy="324.9" r="5.3" fill="url(#gp)"/><circle cx="527.1" cy="528.6" r="6.3" fill="url(#g43)"/><circle cx="338.2" cy="468.4" r="5.9" fill="url(#g31)"/><circle cx="418.1" cy="493.5" r="5.4" fill="url(#g15)"/><circle cx="564.1" cy="324.9" r="5.3" fill="url(#gp)"/><circle cx="632.9" cy="324.9" r="5.3" fill="url(#gp)"/><circle cx="438.4" cy="508.7" r="6.7" fill="url(#g54)"/><circle cx="551.2" cy="591.2" r="5.7" fill="url(#g24)"/><circle cx="397.0" cy="501.9" r="5.6" fill="url(#g22)"/><circle cx="656.2" cy="366.0" r="4.9" fill="url(#g1)"/><circle cx="610.7" cy="610.7" r="5.2" fill="url(#g10)"/><circle cx="638.4" cy="482.6" r="5.9" fill="url(#g30)"/><circle cx="547.6" cy="548.7" r="6.1" fill="url(#g36)"/><circle cx="396.6" cy="325.5" r="5.3" fill="url(#gp)"/><circle cx="465.4" cy="325.5" r="5.3" fill="url(#gp)"/><circle cx="632.4" cy="528.0" r="5.3" fill="url(#g14)"/><circle cx="502.2" cy="559.8" r="6.5" fill="url(#g47)"/><circle cx="397.9" cy="480.7" r="4.9" fill="url(#g2)"/><circle cx="534.2" cy="325.5" r="5.3" fill="url(#gp)"/><circle cx="603.0" cy="325.6" r="5.3" fill="url(#gp)"/><circle cx="589.3" cy="608.8" r="6.8" fill="url(#g58)"/><circle cx="377.9" cy="489.0" r="5.8" fill="url(#g27)"/><circle cx="368.3" cy="480.9" r="6.9" fill="url(#g61)"/><circle cx="623.7" cy="590.1" r="5.1" fill="url(#g6)"/><circle cx="552.5" cy="560.9" r="6.9" fill="url(#g59)"/><circle cx="526.1" cy="550.0" r="5.9" fill="url(#g30)"/><circle cx="630.5" cy="538.8" r="5.5" fill="url(#g19)"/><circle cx="605.3" cy="619.7" r="5.7" fill="url(#g25)"/><circle cx="625.8" cy="568.9" r="5.8" fill="url(#g28)"/><circle cx="444.5" cy="484.0" r="6.9" fill="url(#g60)"/><circle cx="376.2" cy="454.1" r="6.2" fill="url(#g38)"/><circle cx="467.4" cy="541.3" r="5.1" fill="url(#g6)"/><circle cx="366.7" cy="326.1" r="5.3" fill="url(#gp)"/><circle cx="487.5" cy="549.9" r="6.3" fill="url(#g42)"/><circle cx="435.5" cy="326.1" r="5.3" fill="url(#gp)"/><circle cx="504.3" cy="326.2" r="5.3" fill="url(#gp)"/><circle cx="409.3" cy="485.6" r="7.0" fill="url(#g62)"/><circle cx="593.7" cy="588.0" r="6.9" fill="url(#g61)"/><circle cx="573.1" cy="326.2" r="5.3" fill="url(#gp)"/><circle cx="642.0" cy="326.2" r="5.3" fill="url(#gp)"/><circle cx="476.9" cy="545.5" r="5.2" fill="url(#g11)"/><circle cx="484.8" cy="538.6" r="5.2" fill="url(#g8)"/><circle cx="449.9" cy="503.9" r="5.9" fill="url(#g31)"/><circle cx="517.1" cy="543.9" r="4.9" fill="url(#g1)"/><circle cx="381.0" cy="466.1" r="6.7" fill="url(#g54)"/><circle cx="543.3" cy="579.6" r="6.8" fill="url(#g56)"/><circle cx="429.7" cy="488.2" r="6.5" fill="url(#g48)"/><circle cx="405.6" cy="326.8" r="5.3" fill="url(#gp)"/><circle cx="474.5" cy="326.8" r="5.3" fill="url(#gp)"/><circle cx="436.1" cy="519.6" r="5.6" fill="url(#g22)"/><circle cx="543.3" cy="326.8" r="5.3" fill="url(#gp)"/><circle cx="612.1" cy="326.9" r="5.3" fill="url(#gp)"/><circle cx="511.8" cy="518.6" r="6.7" fill="url(#g55)"/><circle cx="532.7" cy="572.5" r="6.7" fill="url(#g54)"/><circle cx="451.4" cy="527.7" r="5.7" fill="url(#g25)"/><circle cx="635.4" cy="500.0" r="5.7" fill="url(#g24)"/><circle cx="416.7" cy="505.6" r="6.6" fill="url(#g51)"/><circle cx="636.5" cy="460.7" r="5.5" fill="url(#g19)"/><circle cx="460.4" cy="511.2" r="6.7" fill="url(#g53)"/><circle cx="642.6" cy="451.2" r="5.5" fill="url(#g17)"/><circle cx="623.1" cy="580.5" r="6.3" fill="url(#g43)"/><circle cx="651.4" cy="389.2" r="5.5" fill="url(#g20)"/><circle cx="643.2" cy="438.2" r="6.6" fill="url(#g51)"/><circle cx="375.8" cy="327.4" r="5.3" fill="url(#gp)"/><circle cx="540.4" cy="558.1" r="5.9" fill="url(#g29)"/><circle cx="444.6" cy="327.4" r="5.3" fill="url(#gp)"/><circle cx="617.1" cy="620.2" r="6.5" fill="url(#g47)"/><circle cx="613.0" cy="592.8" r="5.7" fill="url(#g23)"/><circle cx="522.0" cy="566.5" r="5.9" fill="url(#g31)"/><circle cx="562.3" cy="590.2" r="5.7" fill="url(#g24)"/><circle cx="439.1" cy="496.4" r="6.5" fill="url(#g47)"/><circle cx="513.4" cy="327.5" r="5.3" fill="url(#gp)"/><circle cx="426.7" cy="512.1" r="5.6" fill="url(#g22)"/><circle cx="582.2" cy="327.5" r="5.3" fill="url(#gp)"/><circle cx="492.9" cy="527.5" r="6.5" fill="url(#g49)"/><circle cx="512.7" cy="562.0" r="5.4" fill="url(#g16)"/><circle cx="649.8" cy="402.7" r="5.1" fill="url(#g6)"/><circle cx="651.0" cy="327.5" r="5.3" fill="url(#gp)"/><circle cx="349.0" cy="465.1" r="6.2" fill="url(#g40)"/><circle cx="600.9" cy="610.5" r="6.1" fill="url(#g35)"/><circle cx="463.1" cy="530.5" r="6.4" fill="url(#g45)"/><circle cx="403.8" cy="450.3" r="6.9" fill="url(#g60)"/><circle cx="655.6" cy="354.0" r="6.0" fill="url(#g34)"/><circle cx="651.9" cy="376.5" r="6.5" fill="url(#g47)"/><circle cx="414.7" cy="328.1" r="5.3" fill="url(#gp)"/><circle cx="515.0" cy="532.3" r="6.8" fill="url(#g59)"/><circle cx="644.6" cy="413.8" r="5.8" fill="url(#g27)"/><circle cx="389.8" cy="487.5" r="6.4" fill="url(#g45)"/><circle cx="584.2" cy="577.8" r="7.0" fill="url(#g63)"/><circle cx="483.5" cy="328.1" r="5.3" fill="url(#gp)"/><circle cx="480.3" cy="524.0" r="5.1" fill="url(#g8)"/><circle cx="552.4" cy="328.1" r="5.3" fill="url(#gp)"/><circle cx="347.1" cy="442.9" r="6.6" fill="url(#g50)"/><circle cx="621.2" cy="328.2" r="5.3" fill="url(#gp)"/><circle cx="338.4" cy="458.1" r="6.1" fill="url(#g37)"/><circle cx="657.8" cy="342.3" r="5.5" fill="url(#g17)"/><circle cx="582.4" cy="597.0" r="6.7" fill="url(#g55)"/><circle cx="564.8" cy="562.0" r="6.7" fill="url(#g55)"/><circle cx="573.2" cy="571.6" r="5.8" fill="url(#g28)"/><circle cx="634.0" cy="510.1" r="5.0" fill="url(#g4)"/><circle cx="425.8" cy="465.7" r="6.8" fill="url(#g57)"/><circle cx="499.0" cy="550.7" r="5.6" fill="url(#g20)"/><circle cx="384.9" cy="328.7" r="5.3" fill="url(#gp)"/><circle cx="400.5" cy="493.8" r="5.5" fill="url(#g18)"/><circle cx="453.7" cy="328.7" r="5.3" fill="url(#gp)"/><circle cx="554.7" cy="581.2" r="6.0" fill="url(#g34)"/><circle cx="522.5" cy="328.8" r="5.3" fill="url(#gp)"/><circle cx="506.6" cy="542.0" r="6.2" fill="url(#g38)"/><circle cx="591.3" cy="328.8" r="5.3" fill="url(#gp)"/><circle cx="404.2" cy="474.2" r="5.4" fill="url(#g16)"/><circle cx="446.9" cy="516.8" r="6.9" fill="url(#g60)"/><circle cx="660.1" cy="328.8" r="5.3" fill="url(#gp)"/><circle cx="429.2" cy="477.2" r="4.9" fill="url(#g1)"/><circle cx="361.5" cy="451.1" r="5.7" fill="url(#g25)"/><circle cx="475.6" cy="534.4" r="6.3" fill="url(#g42)"/><circle cx="393.8" cy="468.3" r="6.5" fill="url(#g47)"/><circle cx="645.8" cy="426.8" r="4.9" fill="url(#g1)"/><circle cx="360.6" cy="469.1" r="5.7" fill="url(#g24)"/><circle cx="379.9" cy="479.9" r="5.8" fill="url(#g27)"/><circle cx="625.1" cy="557.6" r="6.8" fill="url(#g56)"/><circle cx="526.4" cy="539.3" r="6.4" fill="url(#g44)"/><circle cx="602.0" cy="579.0" r="6.2" fill="url(#g38)"/><circle cx="355.0" cy="329.4" r="5.3" fill="url(#gp)"/><circle cx="423.8" cy="329.4" r="5.3" fill="url(#gp)"/><circle cx="492.6" cy="329.4" r="5.3" fill="url(#gp)"/><circle cx="561.4" cy="329.4" r="5.3" fill="url(#gp)"/><circle cx="630.3" cy="329.5" r="5.3" fill="url(#gp)"/><circle cx="368.1" cy="460.8" r="5.8" fill="url(#g27)"/><circle cx="343.0" cy="417.9" r="5.6" fill="url(#g22)"/><circle cx="574.0" cy="587.7" r="6.9" fill="url(#g61)"/><circle cx="347.3" cy="392.3" r="6.2" fill="url(#g41)"/><circle cx="419.5" cy="484.8" r="5.2" fill="url(#g10)"/><circle cx="536.1" cy="547.1" r="6.5" fill="url(#g48)"/><circle cx="410.5" cy="496.7" r="5.0" fill="url(#g4)"/><circle cx="393.9" cy="330.0" r="5.3" fill="url(#gp)"/><circle cx="635.4" cy="490.8" r="5.7" fill="url(#g25)"/><circle cx="462.8" cy="330.0" r="5.3" fill="url(#gp)"/><circle cx="595.4" cy="598.7" r="7.0" fill="url(#g62)"/><circle cx="509.1" cy="553.0" r="5.1" fill="url(#g6)"/><circle cx="531.6" cy="330.1" r="5.3" fill="url(#gp)"/><circle cx="600.4" cy="330.1" r="5.3" fill="url(#gp)"/><circle cx="630.9" cy="520.5" r="5.9" fill="url(#g29)"/><circle cx="488.5" cy="516.2" r="6.6" fill="url(#g51)"/><circle cx="556.0" cy="544.1" r="6.0" fill="url(#g35)"/><circle cx="542.5" cy="569.2" r="6.3" fill="url(#g41)"/><circle cx="492.3" cy="541.9" r="5.5" fill="url(#g17)"/><circle cx="520.5" cy="556.9" r="5.9" fill="url(#g31)"/><circle cx="476.0" cy="514.0" r="5.7" fill="url(#g26)"/><circle cx="593.2" cy="538.2" r="6.4" fill="url(#g46)"/><circle cx="371.7" cy="471.3" r="5.8" fill="url(#g26)"/><circle cx="638.0" cy="476.4" r="5.0" fill="url(#g4)"/><circle cx="522.4" cy="522.6" r="5.6" fill="url(#g21)"/><circle cx="530.9" cy="562.8" r="5.6" fill="url(#g22)"/><circle cx="364.1" cy="330.6" r="5.3" fill="url(#gp)"/><circle cx="458.2" cy="521.7" r="5.3" fill="url(#g12)"/><circle cx="432.9" cy="330.7" r="5.3" fill="url(#gp)"/><circle cx="449.7" cy="495.3" r="5.2" fill="url(#g11)"/><circle cx="617.0" cy="609.6" r="6.7" fill="url(#g55)"/><circle cx="501.7" cy="330.7" r="5.3" fill="url(#gp)"/><circle cx="570.5" cy="330.7" r="5.3" fill="url(#gp)"/><circle cx="415.8" cy="474.1" r="6.3" fill="url(#g43)"/><circle cx="639.4" cy="330.8" r="5.3" fill="url(#gp)"/><circle cx="431.5" cy="504.6" r="5.7" fill="url(#g24)"/><circle cx="619.8" cy="599.1" r="5.4" fill="url(#g14)"/><circle cx="621.3" cy="588.7" r="5.4" fill="url(#g15)"/><circle cx="460.1" cy="496.2" r="5.4" fill="url(#g14)"/><circle cx="469.0" cy="504.1" r="6.2" fill="url(#g39)"/><circle cx="581.7" cy="564.9" r="6.4" fill="url(#g46)"/><circle cx="626.1" cy="545.6" r="6.6" fill="url(#g51)"/><circle cx="627.8" cy="532.2" r="6.7" fill="url(#g55)"/><circle cx="403.0" cy="331.3" r="5.3" fill="url(#gp)"/><circle cx="364.0" cy="431.2" r="5.3" fill="url(#g14)"/><circle cx="471.8" cy="331.3" r="5.3" fill="url(#gp)"/><circle cx="564.7" cy="579.1" r="6.1" fill="url(#g35)"/><circle cx="540.7" cy="331.4" r="5.3" fill="url(#gp)"/><circle cx="422.7" cy="495.9" r="6.6" fill="url(#g51)"/><circle cx="609.5" cy="331.4" r="5.3" fill="url(#gp)"/><circle cx="470.4" cy="524.5" r="6.1" fill="url(#g35)"/><circle cx="475.4" cy="494.7" r="4.9" fill="url(#g0)"/><circle cx="385.0" cy="456.5" r="6.7" fill="url(#g53)"/><circle cx="348.5" cy="454.1" r="6.0" fill="url(#g34)"/><circle cx="480.5" cy="504.4" r="5.7" fill="url(#g25)"/><circle cx="485.7" cy="533.9" r="5.5" fill="url(#g17)"/><circle cx="608.4" cy="601.7" r="6.8" fill="url(#g58)"/><circle cx="399.9" cy="483.5" r="5.9" fill="url(#g31)"/><circle cx="547.2" cy="551.1" r="5.0" fill="url(#g2)"/><circle cx="337.8" cy="447.9" r="5.7" fill="url(#g24)"/><circle cx="556.3" cy="571.2" r="6.8" fill="url(#g57)"/><circle cx="638.8" cy="466.7" r="5.1" fill="url(#g6)"/><circle cx="484.1" cy="486.8" r="5.4" fill="url(#g15)"/><circle cx="373.2" cy="331.9" r="5.3" fill="url(#gp)"/><circle cx="442.0" cy="332.0" r="5.3" fill="url(#gp)"/><circle cx="585.0" cy="589.3" r="5.9" fill="url(#g31)"/><circle cx="510.8" cy="332.0" r="5.3" fill="url(#gp)"/><circle cx="341.0" cy="429.1" r="6.2" fill="url(#g39)"/><circle cx="390.1" cy="478.1" r="5.3" fill="url(#g13)"/><circle cx="536.9" cy="514.8" r="6.8" fill="url(#g56)"/><circle cx="579.6" cy="332.0" r="5.3" fill="url(#gp)"/><circle cx="376.1" cy="448.1" r="5.5" fill="url(#g20)"/><circle cx="611.3" cy="585.3" r="5.8" fill="url(#g26)"/><circle cx="648.4" cy="332.1" r="5.3" fill="url(#gp)"/><circle cx="407.6" cy="464.2" r="6.3" fill="url(#g43)"/><circle cx="358.1" cy="460.0" r="4.9" fill="url(#g1)"/><circle cx="651.6" cy="363.9" r="6.7" fill="url(#g55)"/><circle cx="352.4" cy="427.4" r="5.0" fill="url(#g4)"/><circle cx="648.4" cy="395.6" r="5.4" fill="url(#g15)"/><circle cx="443.8" cy="505.6" r="6.4" fill="url(#g44)"/><circle cx="441.4" cy="488.7" r="5.2" fill="url(#g10)"/><circle cx="397.2" cy="458.9" r="5.5" fill="url(#g18)"/><circle cx="623.8" cy="568.9" r="5.1" fill="url(#g7)"/><circle cx="412.1" cy="332.6" r="5.3" fill="url(#gp)"/><circle cx="366.0" cy="442.3" r="5.9" fill="url(#g29)"/><circle cx="480.9" cy="332.6" r="5.3" fill="url(#gp)"/><circle cx="549.7" cy="332.7" r="5.3" fill="url(#gp)"/><circle cx="639.6" cy="456.3" r="5.4" fill="url(#g15)"/><circle cx="618.6" cy="332.7" r="5.3" fill="url(#gp)"/><circle cx="637.8" cy="431.3" r="6.1" fill="url(#g36)"/><circle cx="355.4" cy="438.0" r="5.9" fill="url(#g30)"/><circle cx="495.5" cy="491.1" r="6.1" fill="url(#g36)"/><circle cx="411.0" cy="488.5" r="4.9" fill="url(#g1)"/><circle cx="516.9" cy="546.0" r="6.4" fill="url(#g45)"/><circle cx="631.2" cy="501.5" r="7.0" fill="url(#g62)"/><circle cx="498.6" cy="535.0" r="6.5" fill="url(#g49)"/><circle cx="382.0" cy="471.1" r="5.0" fill="url(#g4)"/><circle cx="536.6" cy="537.4" r="5.2" fill="url(#g8)"/><circle cx="512.6" cy="524.2" r="4.9" fill="url(#g1)"/><circle cx="362.1" cy="419.0" r="6.4" fill="url(#g45)"/><circle cx="438.6" cy="477.2" r="6.4" fill="url(#g45)"/><circle cx="501.3" cy="514.8" r="6.7" fill="url(#g55)"/><circle cx="382.2" cy="333.2" r="5.3" fill="url(#gp)"/><circle cx="528.6" cy="529.8" r="5.1" fill="url(#g7)"/><circle cx="451.1" cy="333.3" r="5.3" fill="url(#gp)"/><circle cx="646.3" cy="406.5" r="5.5" fill="url(#g20)"/><circle cx="519.9" cy="333.3" r="5.3" fill="url(#gp)"/><circle cx="454.9" cy="511.7" r="5.2" fill="url(#g10)"/><circle cx="588.7" cy="333.3" r="5.3" fill="url(#gp)"/><circle cx="565.2" cy="534.3" r="5.4" fill="url(#g15)"/><circle cx="657.5" cy="333.4" r="5.3" fill="url(#gp)"/><circle cx="452.7" cy="463.4" r="6.8" fill="url(#g58)"/><circle cx="492.9" cy="504.0" r="6.9" fill="url(#g60)"/><circle cx="424.4" cy="452.9" r="6.0" fill="url(#g34)"/><circle cx="352.4" cy="333.9" r="5.3" fill="url(#gp)"/><circle cx="621.1" cy="578.1" r="5.8" fill="url(#g27)"/><circle cx="528.9" cy="553.5" r="4.9" fill="url(#g1)"/><circle cx="421.2" cy="333.9" r="5.3" fill="url(#gp)"/><circle cx="465.5" cy="514.5" r="5.9" fill="url(#g32)"/><circle cx="490.0" cy="333.9" r="5.3" fill="url(#gp)"/><circle cx="648.3" cy="383.8" r="6.5" fill="url(#g47)"/><circle cx="654.0" cy="347.4" r="6.0" fill="url(#g34)"/><circle cx="572.2" cy="560.6" r="5.2" fill="url(#g10)"/><circle cx="558.8" cy="334.0" r="5.3" fill="url(#gp)"/><circle cx="596.7" cy="588.0" r="6.8" fill="url(#g56)"/><circle cx="480.7" cy="524.9" r="5.0" fill="url(#g3)"/><circle cx="627.7" cy="334.0" r="5.3" fill="url(#gp)"/><circle cx="539.2" cy="557.0" r="5.7" fill="url(#g24)"/><circle cx="374.2" cy="435.1" r="4.9" fill="url(#g1)"/><circle cx="560.3" cy="522.7" r="6.8" fill="url(#g58)"/><circle cx="375.6" cy="463.0" r="5.4" fill="url(#g15)"/><circle cx="576.7" cy="576.4" r="6.3" fill="url(#g42)"/><circle cx="643.0" cy="419.9" r="6.4" fill="url(#g44)"/><circle cx="453.8" cy="502.3" r="5.1" fill="url(#g5)"/><circle cx="549.3" cy="560.9" r="6.0" fill="url(#g34)"/><circle cx="391.3" cy="334.5" r="5.3" fill="url(#gp)"/><circle cx="460.1" cy="334.6" r="5.3" fill="url(#gp)"/><circle cx="634.9" cy="483.4" r="5.3" fill="url(#g12)"/><circle cx="529.0" cy="334.6" r="5.3" fill="url(#gp)"/><circle cx="597.8" cy="334.6" r="5.3" fill="url(#gp)"/><circle cx="549.8" cy="537.0" r="6.0" fill="url(#g33)"/><circle cx="452.2" cy="487.3" r="5.5" fill="url(#g19)"/><circle cx="609.7" cy="572.9" r="7.0" fill="url(#g62)"/><circle cx="436.3" cy="497.1" r="5.1" fill="url(#g7)"/><circle cx="350.2" cy="417.9" r="5.6" fill="url(#g22)"/><circle cx="476.4" cy="480.9" r="5.2" fill="url(#g11)"/><circle cx="346.8" cy="444.8" r="5.1" fill="url(#g7)"/><circle cx="425.9" cy="474.6" r="6.3" fill="url(#g41)"/><circle cx="399.2" cy="473.3" r="5.8" fill="url(#g26)"/><circle cx="511.5" cy="491.4" r="6.9" fill="url(#g60)"/><circle cx="491.3" cy="525.6" r="6.0" fill="url(#g34)"/><circle cx="357.2" cy="448.9" r="5.8" fill="url(#g27)"/><circle cx="510.4" cy="536.0" r="6.3" fill="url(#g42)"/><circle cx="431.6" cy="464.3" r="5.6" fill="url(#g21)"/><circle cx="361.5" cy="335.2" r="5.3" fill="url(#gp)"/><circle cx="408.2" cy="479.5" r="5.2" fill="url(#g9)"/><circle cx="419.5" cy="464.2" r="6.1" fill="url(#g36)"/><circle cx="566.7" cy="571.1" r="5.0" fill="url(#g2)"/><circle cx="467.2" cy="488.8" r="6.7" fill="url(#g55)"/><circle cx="430.3" cy="335.2" r="5.3" fill="url(#gp)"/><circle cx="337.1" cy="438.6" r="5.1" fill="url(#g6)"/><circle cx="590.3" cy="558.5" r="5.8" fill="url(#g27)"/><circle cx="605.8" cy="593.1" r="5.1" fill="url(#g6)"/><circle cx="499.1" cy="335.2" r="5.3" fill="url(#gp)"/><circle cx="521.0" cy="535.7" r="5.1" fill="url(#g6)"/><circle cx="367.6" cy="454.1" r="5.9" fill="url(#g30)"/><circle cx="458.3" cy="478.2" r="5.0" fill="url(#g4)"/><circle cx="567.9" cy="335.3" r="5.3" fill="url(#gp)"/><circle cx="636.7" cy="335.3" r="5.3" fill="url(#gp)"/><circle cx="600.2" cy="564.9" r="5.7" fill="url(#g25)"/><circle cx="430.1" cy="487.4" r="6.8" fill="url(#g58)"/><circle cx="339.6" cy="419.3" r="5.1" fill="url(#g5)"/><circle cx="390.1" cy="466.7" r="5.4" fill="url(#g16)"/><circle cx="418.4" cy="483.4" r="5.2" fill="url(#g11)"/><circle cx="585.7" cy="533.2" r="6.0" fill="url(#g34)"/><circle cx="617.1" cy="594.9" r="6.5" fill="url(#g50)"/><circle cx="402.1" cy="449.0" r="6.5" fill="url(#g48)"/><circle cx="513.8" cy="514.0" r="6.2" fill="url(#g39)"/><circle cx="400.4" cy="335.8" r="5.3" fill="url(#gp)"/><circle cx="469.2" cy="335.9" r="5.3" fill="url(#gp)"/><circle cx="586.9" cy="580.1" r="5.1" fill="url(#g7)"/><circle cx="538.1" cy="335.9" r="5.3" fill="url(#gp)"/><circle cx="606.9" cy="335.9" r="5.3" fill="url(#gp)"/><circle cx="636.0" cy="473.7" r="5.0" fill="url(#g4)"/><circle cx="528.9" cy="543.9" r="6.2" fill="url(#g40)"/><circle cx="623.4" cy="559.8" r="5.2" fill="url(#g9)"/><circle cx="385.5" cy="443.6" r="6.8" fill="url(#g59)"/><circle cx="370.7" cy="384.4" r="6.4" fill="url(#g44)"/><circle cx="539.5" cy="526.3" r="6.9" fill="url(#g61)"/><circle cx="527.1" cy="521.0" r="5.5" fill="url(#g17)"/><circle cx="628.6" cy="513.3" r="6.5" fill="url(#g49)"/><circle cx="576.3" cy="552.0" r="5.3" fill="url(#g12)"/><circle cx="370.5" cy="336.5" r="5.3" fill="url(#gp)"/><circle cx="560.2" cy="542.2" r="5.4" fill="url(#g14)"/><circle cx="439.4" cy="336.5" r="5.3" fill="url(#gp)"/><circle cx="561.3" cy="561.0" r="6.3" fill="url(#g43)"/><circle cx="508.2" cy="336.5" r="5.3" fill="url(#gp)"/><circle cx="483.1" cy="495.6" r="6.4" fill="url(#g45)"/><circle cx="577.0" cy="336.6" r="5.3" fill="url(#gp)"/><circle cx="645.8" cy="336.6" r="5.3" fill="url(#gp)"/><circle cx="446.4" cy="496.0" r="5.5" fill="url(#g18)"/><circle cx="411.2" cy="456.2" r="5.3" fill="url(#g11)"/><circle cx="463.4" cy="505.1" r="5.5" fill="url(#g20)"/><circle cx="649.9" cy="373.0" r="5.2" fill="url(#g8)"/><circle cx="434.2" cy="449.5" r="5.6" fill="url(#g21)"/><circle cx="474.5" cy="509.6" r="6.2" fill="url(#g40)"/><circle cx="484.7" cy="516.3" r="5.8" fill="url(#g27)"/><circle cx="505.0" cy="503.7" r="6.8" fill="url(#g58)"/><circle cx="448.6" cy="476.5" r="5.0" fill="url(#g3)"/><circle cx="409.5" cy="337.1" r="5.3" fill="url(#gp)"/><circle cx="540.9" cy="546.0" r="7.0" fill="url(#g62)"/><circle cx="478.3" cy="337.2" r="5.3" fill="url(#gp)"/><circle cx="547.1" cy="337.2" r="5.3" fill="url(#gp)"/><circle cx="621.6" cy="537.7" r="6.1" fill="url(#g35)"/><circle cx="616.0" cy="337.2" r="5.3" fill="url(#gp)"/><circle cx="504.0" cy="525.8" r="6.2" fill="url(#g39)"/><circle cx="445.5" cy="453.9" r="6.3" fill="url(#g41)"/><circle cx="489.2" cy="485.8" r="5.2" fill="url(#g11)"/><circle cx="359.1" cy="429.3" r="6.3" fill="url(#g43)"/><circle cx="605.8" cy="585.0" r="5.6" fill="url(#g21)"/><circle cx="553.1" cy="552.1" r="6.7" fill="url(#g55)"/><circle cx="372.1" cy="424.8" r="6.9" fill="url(#g61)"/><circle cx="341.9" cy="408.2" r="6.5" fill="url(#g49)"/><circle cx="378.8" cy="453.8" r="5.7" fill="url(#g23)"/><circle cx="347.4" cy="433.9" r="6.5" fill="url(#g48)"/><circle cx="626.1" cy="525.8" r="6.6" fill="url(#g52)"/><circle cx="379.6" cy="337.8" r="5.3" fill="url(#gp)"/><circle cx="591.8" cy="544.9" r="5.9" fill="url(#g29)"/><circle cx="638.7" cy="440.3" r="6.3" fill="url(#g43)"/><circle cx="448.4" cy="337.8" r="5.3" fill="url(#gp)"/><circle cx="635.7" cy="463.0" r="6.0" fill="url(#g33)"/><circle cx="517.3" cy="337.8" r="5.3" fill="url(#gp)"/><circle cx="574.6" cy="567.4" r="5.0" fill="url(#g3)"/><circle cx="586.1" cy="337.9" r="5.3" fill="url(#gp)"/><circle cx="654.9" cy="337.9" r="5.3" fill="url(#gp)"/><circle cx="386.8" cy="423.2" r="6.0" fill="url(#g35)"/><circle cx="586.1" cy="569.8" r="6.7" fill="url(#g55)"/><circle cx="623.4" cy="549.2" r="5.9" fill="url(#g30)"/><circle cx="596.7" cy="575.2" r="7.0" fill="url(#g62)"/><circle cx="415.7" cy="473.9" r="5.4" fill="url(#g16)"/><circle cx="349.8" cy="338.4" r="5.3" fill="url(#gp)"/><circle cx="637.6" cy="451.7" r="5.5" fill="url(#g18)"/><circle cx="610.4" cy="561.3" r="6.8" fill="url(#g57)"/><circle cx="418.6" cy="338.4" r="5.3" fill="url(#gp)"/><circle cx="650.9" cy="356.4" r="5.9" fill="url(#g30)"/><circle cx="550.3" cy="528.0" r="5.0" fill="url(#g5)"/><circle cx="619.6" cy="569.4" r="6.5" fill="url(#g49)"/><circle cx="487.4" cy="338.5" r="5.3" fill="url(#gp)"/><circle cx="569.4" cy="544.7" r="4.9" fill="url(#g1)"/><circle cx="556.2" cy="338.5" r="5.3" fill="url(#gp)"/><circle cx="625.0" cy="338.5" r="5.3" fill="url(#gp)"/><circle cx="337.3" cy="428.0" r="5.3" fill="url(#g12)"/><circle cx="442.3" cy="485.9" r="6.4" fill="url(#g47)"/><circle cx="402.2" cy="462.8" r="6.4" fill="url(#g46)"/><circle cx="501.7" cy="484.7" r="6.2" fill="url(#g40)"/><circle cx="442.4" cy="466.8" r="6.7" fill="url(#g55)"/><circle cx="495.0" cy="518.5" r="5.2" fill="url(#g10)"/><circle cx="390.9" cy="455.1" r="6.8" fill="url(#g58)"/><circle cx="380.7" cy="433.0" r="5.2" fill="url(#g8)"/><circle cx="423.5" cy="443.0" r="6.2" fill="url(#g40)"/><circle cx="516.9" cy="527.4" r="6.9" fill="url(#g59)"/><circle cx="524.7" cy="509.2" r="6.5" fill="url(#g50)"/><circle cx="644.3" cy="400.6" r="5.9" fill="url(#g32)"/><circle cx="641.2" cy="428.8" r="5.1" fill="url(#g6)"/><circle cx="457.8" cy="494.8" r="6.0" fill="url(#g34)"/><circle cx="359.7" cy="440.6" r="4.9" fill="url(#g1)"/><circle cx="599.5" cy="553.6" r="6.3" fill="url(#g42)"/><circle cx="630.2" cy="491.5" r="6.9" fill="url(#g60)"/><circle cx="388.7" cy="339.1" r="5.3" fill="url(#gp)"/><circle cx="616.8" cy="583.9" r="6.9" fill="url(#g62)"/><circle cx="457.5" cy="339.1" r="5.3" fill="url(#gp)"/><circle cx="372.3" cy="443.0" r="6.9" fill="url(#g61)"/><circle cx="531.7" cy="496.0" r="6.1" fill="url(#g36)"/><circle cx="526.4" cy="339.1" r="5.3" fill="url(#gp)"/><circle cx="595.2" cy="339.2" r="5.3" fill="url(#gp)"/><circle cx="366.4" cy="403.1" r="5.7" fill="url(#g26)"/><circle cx="467.7" cy="477.8" r="6.8" fill="url(#g58)"/><circle cx="560.7" cy="532.5" r="6.2" fill="url(#g39)"/><circle cx="484.9" cy="462.5" r="6.7" fill="url(#g56)"/><circle cx="580.6" cy="542.3" r="6.2" fill="url(#g40)"/><circle cx="476.4" cy="487.4" r="5.1" fill="url(#g7)"/><circle cx="358.8" cy="339.7" r="5.3" fill="url(#gp)"/><circle cx="633.5" cy="480.5" r="5.0" fill="url(#g4)"/><circle cx="427.7" cy="339.7" r="5.3" fill="url(#gp)"/><circle cx="529.2" cy="532.9" r="6.3" fill="url(#g43)"/><circle cx="494.8" cy="496.4" r="6.8" fill="url(#g57)"/><circle cx="496.5" cy="339.8" r="5.3" fill="url(#gp)"/><circle cx="420.1" cy="453.7" r="5.1" fill="url(#g6)"/><circle cx="565.3" cy="339.8" r="5.3" fill="url(#gp)"/><circle cx="611.5" cy="548.1" r="6.1" fill="url(#g38)"/><circle cx="535.9" cy="515.8" r="6.2" fill="url(#g39)"/><circle cx="435.9" cy="437.8" r="6.8" fill="url(#g57)"/><circle cx="634.1" cy="339.8" r="5.3" fill="url(#gp)"/><circle cx="355.4" cy="410.0" r="7.0" fill="url(#g62)"/><circle cx="545.5" cy="507.3" r="6.4" fill="url(#g46)"/><circle cx="571.3" cy="558.8" r="5.2" fill="url(#g8)"/><circle cx="471.7" cy="498.2" r="6.5" fill="url(#g49)"/><circle cx="630.1" cy="503.7" r="4.9" fill="url(#g0)"/><circle cx="401.2" cy="440.1" r="5.3" fill="url(#g13)"/><circle cx="429.7" cy="458.0" r="5.3" fill="url(#g12)"/><circle cx="411.7" cy="446.2" r="5.9" fill="url(#g31)"/><circle cx="434.0" cy="476.4" r="6.2" fill="url(#g40)"/><circle cx="397.8" cy="340.4" r="5.3" fill="url(#gp)"/><circle cx="466.6" cy="340.4" r="5.3" fill="url(#gp)"/><circle cx="535.4" cy="340.4" r="5.3" fill="url(#gp)"/><circle cx="604.3" cy="340.5" r="5.3" fill="url(#gp)"/><circle cx="563.7" cy="552.2" r="5.4" fill="url(#g16)"/><circle cx="389.5" cy="408.5" r="7.0" fill="url(#g62)"/><circle cx="579.1" cy="516.4" r="6.2" fill="url(#g38)"/><circle cx="491.7" cy="508.4" r="6.1" fill="url(#g38)"/><circle cx="413.3" cy="464.5" r="5.4" fill="url(#g16)"/><circle cx="367.9" cy="341.0" r="5.3" fill="url(#gp)"/><circle cx="391.7" cy="433.0" r="6.1" fill="url(#g36)"/><circle cx="455.5" cy="459.1" r="6.1" fill="url(#g36)"/><circle cx="436.8" cy="341.0" r="5.3" fill="url(#gp)"/><circle cx="377.2" cy="405.5" r="5.3" fill="url(#g12)"/><circle cx="569.5" cy="524.1" r="6.0" fill="url(#g32)"/><circle cx="516.5" cy="500.4" r="6.4" fill="url(#g46)"/><circle cx="505.6" cy="341.1" r="5.3" fill="url(#gp)"/><circle cx="424.8" cy="468.8" r="6.2" fill="url(#g39)"/><circle cx="574.4" cy="341.1" r="5.3" fill="url(#gp)"/><circle cx="481.7" cy="503.9" r="5.1" fill="url(#g5)"/><circle cx="504.9" cy="514.6" r="6.3" fill="url(#g41)"/><circle cx="643.2" cy="341.1" r="5.3" fill="url(#gp)"/><circle cx="452.8" cy="447.3" r="5.2" fill="url(#g11)"/><circle cx="540.9" cy="536.3" r="5.7" fill="url(#g25)"/><circle cx="647.8" cy="366.1" r="5.1" fill="url(#g6)"/><circle cx="552.5" cy="497.8" r="5.4" fill="url(#g16)"/><circle cx="455.6" cy="471.4" r="6.0" fill="url(#g33)"/><circle cx="640.3" cy="418.6" r="6.2" fill="url(#g41)"/><circle cx="454.3" cy="484.3" r="6.5" fill="url(#g50)"/><circle cx="340.9" cy="397.6" r="5.6" fill="url(#g23)"/><circle cx="609.1" cy="576.7" r="4.9" fill="url(#g0)"/><circle cx="367.1" cy="414.5" r="5.7" fill="url(#g26)"/><circle cx="583.2" cy="557.4" r="6.9" fill="url(#g59)"/><circle cx="545.0" cy="520.9" r="5.0" fill="url(#g2)"/><circle cx="571.0" cy="536.0" r="5.1" fill="url(#g5)"/><circle cx="349.6" cy="422.9" r="6.8" fill="url(#g58)"/><circle cx="551.9" cy="540.4" r="6.2" fill="url(#g41)"/><circle cx="406.9" cy="341.7" r="5.3" fill="url(#gp)"/><circle cx="475.7" cy="341.7" r="5.3" fill="url(#gp)"/><circle cx="544.5" cy="341.7" r="5.3" fill="url(#gp)"/><circle cx="477.8" cy="471.8" r="5.2" fill="url(#g10)"/><circle cx="613.3" cy="341.8" r="5.3" fill="url(#gp)"/><circle cx="596.3" cy="565.5" r="6.1" fill="url(#g37)"/><circle cx="337.9" cy="417.6" r="5.7" fill="url(#g25)"/><circle cx="620.3" cy="557.4" r="6.1" fill="url(#g35)"/><circle cx="643.9" cy="388.8" r="6.6" fill="url(#g52)"/><circle cx="365.7" cy="434.4" r="5.0" fill="url(#g2)"/><circle cx="556.8" cy="521.0" r="6.1" fill="url(#g37)"/><circle cx="377.0" cy="342.3" r="5.3" fill="url(#gp)"/><circle cx="445.8" cy="342.3" r="5.3" fill="url(#gp)"/><circle cx="514.7" cy="342.4" r="5.3" fill="url(#gp)"/><circle cx="379.3" cy="416.9" r="6.2" fill="url(#g40)"/><circle cx="583.5" cy="342.4" r="5.3" fill="url(#gp)"/><circle cx="497.9" cy="465.3" r="6.7" fill="url(#g55)"/><circle cx="652.3" cy="342.4" r="5.3" fill="url(#gp)"/><circle cx="506.1" cy="495.6" r="5.0" fill="url(#g2)"/><circle cx="401.3" cy="451.8" r="5.8" fill="url(#g28)"/><circle cx="581.1" cy="530.0" r="7.0" fill="url(#g62)"/><circle cx="465.5" cy="488.4" r="5.8" fill="url(#g28)"/><circle cx="391.6" cy="445.2" r="6.0" fill="url(#g34)"/><circle cx="516.3" cy="516.0" r="6.3" fill="url(#g42)"/><circle cx="439.5" cy="457.6" r="5.1" fill="url(#g6)"/><circle cx="646.4" cy="376.7" r="5.6" fill="url(#g21)"/><circle cx="347.2" cy="342.9" r="5.3" fill="url(#gp)"/><circle cx="603.3" cy="409.4" r="6.8" fill="url(#g58)"/><circle cx="416.0" cy="343.0" r="5.3" fill="url(#gp)"/><circle cx="484.8" cy="343.0" r="5.3" fill="url(#gp)"/><circle cx="553.6" cy="343.0" r="5.3" fill="url(#gp)"/><circle cx="445.1" cy="476.2" r="5.4" fill="url(#g15)"/><circle cx="442.2" cy="447.7" r="5.0" fill="url(#g3)"/><circle cx="573.6" cy="550.2" r="5.4" fill="url(#g15)"/><circle cx="622.4" cy="343.1" r="5.3" fill="url(#gp)"/><circle cx="527.3" cy="522.3" r="5.9" fill="url(#g29)"/><circle cx="611.7" cy="538.1" r="5.8" fill="url(#g29)"/><circle cx="467.0" cy="465.0" r="7.0" fill="url(#g63)"/><circle cx="601.0" cy="543.4" r="6.8" fill="url(#g57)"/><circle cx="381.6" cy="439.8" r="5.1" fill="url(#g6)"/><circle cx="589.4" cy="538.7" r="5.2" fill="url(#g11)"/><circle cx="431.4" cy="448.0" r="5.5" fill="url(#g19)"/><circle cx="618.2" cy="576.2" r="5.0" fill="url(#g2)"/><circle cx="623.2" cy="533.4" r="6.1" fill="url(#g35)"/><circle cx="607.1" cy="569.2" r="5.1" fill="url(#g6)"/><circle cx="625.6" cy="511.2" r="6.7" fill="url(#g54)"/><circle cx="386.1" cy="343.6" r="5.3" fill="url(#gp)"/><circle cx="414.6" cy="432.7" r="7.0" fill="url(#g62)"/><circle cx="454.9" cy="343.6" r="5.3" fill="url(#gp)"/><circle cx="509.8" cy="486.1" r="5.5" fill="url(#g18)"/><circle cx="563.7" cy="542.6" r="5.5" fill="url(#g17)"/><circle cx="523.7" cy="343.7" r="5.3" fill="url(#gp)"/><circle cx="592.6" cy="343.7" r="5.3" fill="url(#gp)"/><circle cx="492.7" cy="485.4" r="5.7" fill="url(#g25)"/><circle cx="411.6" cy="455.6" r="5.1" fill="url(#g5)"/><circle cx="526.2" cy="501.7" r="4.9" fill="url(#g0)"/><circle cx="542.2" cy="491.0" r="6.0" fill="url(#g33)"/><circle cx="641.8" cy="407.5" r="5.3" fill="url(#g12)"/><circle cx="537.1" cy="526.9" r="5.4" fill="url(#g15)"/><circle cx="625.4" cy="523.3" r="5.1" fill="url(#g7)"/><circle cx="402.0" cy="431.2" r="5.3" fill="url(#g11)"/><circle cx="361.8" cy="424.3" r="5.9" fill="url(#g31)"/><circle cx="483.9" cy="494.0" r="6.1" fill="url(#g37)"/><circle cx="631.8" cy="472.8" r="5.8" fill="url(#g27)"/><circle cx="634.0" cy="462.5" r="5.1" fill="url(#g6)"/><circle cx="500.8" cy="504.6" r="5.6" fill="url(#g21)"/><circle cx="356.2" cy="344.2" r="5.3" fill="url(#gp)"/><circle cx="535.8" cy="506.4" r="5.4" fill="url(#g15)"/><circle cx="425.1" cy="344.3" r="5.3" fill="url(#gp)"/><circle cx="420.9" cy="459.6" r="5.0" fill="url(#g4)"/><circle cx="435.3" cy="467.1" r="5.3" fill="url(#g13)"/><circle cx="493.9" cy="344.3" r="5.3" fill="url(#gp)"/><circle cx="556.2" cy="509.0" r="6.7" fill="url(#g54)"/><circle cx="562.7" cy="344.3" r="5.3" fill="url(#gp)"/><circle cx="374.1" cy="396.0" r="5.9" fill="url(#g31)"/><circle cx="375.3" cy="430.4" r="6.2" fill="url(#g39)"/><circle cx="631.5" cy="344.4" r="5.3" fill="url(#gp)"/><circle cx="390.5" cy="420.2" r="6.0" fill="url(#g34)"/><circle cx="634.9" cy="443.7" r="6.6" fill="url(#g50)"/><circle cx="620.4" cy="546.0" r="6.4" fill="url(#g47)"/><circle cx="487.4" cy="471.3" r="5.6" fill="url(#g23)"/><circle cx="548.7" cy="529.7" r="6.0" fill="url(#g32)"/><circle cx="424.7" cy="424.2" r="5.8" fill="url(#g29)"/><circle cx="426.4" cy="437.4" r="5.6" fill="url(#g21)"/><circle cx="501.5" cy="478.1" r="6.0" fill="url(#g33)"/><circle cx="395.2" cy="344.9" r="5.3" fill="url(#gp)"/><circle cx="464.0" cy="344.9" r="5.3" fill="url(#gp)"/><circle cx="532.8" cy="345.0" r="5.3" fill="url(#gp)"/><circle cx="601.6" cy="345.0" r="5.3" fill="url(#gp)"/><circle cx="399.3" cy="397.4" r="6.1" fill="url(#g36)"/><circle cx="648.3" cy="357.9" r="5.3" fill="url(#g14)"/><circle cx="464.0" cy="452.4" r="6.6" fill="url(#g52)"/><circle cx="629.8" cy="484.9" r="5.6" fill="url(#g23)"/><circle cx="508.6" cy="469.0" r="5.1" fill="url(#g6)"/><circle cx="593.9" cy="554.7" r="5.7" fill="url(#g26)"/><circle cx="337.8" cy="407.4" r="5.7" fill="url(#g23)"/><circle cx="510.9" cy="508.0" r="5.1" fill="url(#g8)"/><circle cx="628.1" cy="500.1" r="5.1" fill="url(#g5)"/><circle cx="365.3" cy="345.5" r="5.3" fill="url(#gp)"/><circle cx="434.1" cy="345.6" r="5.3" fill="url(#gp)"/><circle cx="461.8" cy="479.0" r="5.1" fill="url(#g7)"/><circle cx="557.9" cy="534.8" r="4.9" fill="url(#g1)"/><circle cx="584.9" cy="548.3" r="5.8" fill="url(#g28)"/><circle cx="347.8" cy="412.6" r="5.4" fill="url(#g16)"/><circle cx="503.0" cy="345.6" r="5.3" fill="url(#gp)"/><circle cx="475.5" cy="486.9" r="5.1" fill="url(#g5)"/><circle cx="617.5" cy="566.5" r="6.0" fill="url(#g34)"/><circle cx="571.8" cy="345.6" r="5.3" fill="url(#gp)"/><circle cx="606.0" cy="558.4" r="6.6" fill="url(#g52)"/><circle cx="640.6" cy="345.7" r="5.3" fill="url(#gp)"/><circle cx="361.9" cy="399.6" r="6.9" fill="url(#g60)"/><circle cx="447.5" cy="465.5" r="7.0" fill="url(#g63)"/><circle cx="478.8" cy="463.9" r="5.5" fill="url(#g17)"/><circle cx="450.0" cy="452.9" r="5.4" fill="url(#g15)"/><circle cx="488.6" cy="421.3" r="5.6" fill="url(#g22)"/><circle cx="404.3" cy="346.2" r="5.3" fill="url(#gp)"/><circle cx="525.8" cy="511.7" r="6.1" fill="url(#g37)"/><circle cx="473.1" cy="346.2" r="5.3" fill="url(#gp)"/><circle cx="520.0" cy="482.1" r="5.9" fill="url(#g30)"/><circle cx="351.0" cy="392.1" r="5.7" fill="url(#g25)"/><circle cx="406.0" cy="441.8" r="6.4" fill="url(#g47)"/><circle cx="541.9" cy="346.3" r="5.3" fill="url(#gp)"/><circle cx="529.4" cy="490.7" r="7.0" fill="url(#g62)"/><circle cx="565.3" cy="519.3" r="5.1" fill="url(#g5)"/><circle cx="610.7" cy="346.3" r="5.3" fill="url(#gp)"/><circle cx="402.7" cy="420.9" r="5.4" fill="url(#g16)"/><circle cx="535.5" cy="517.6" r="5.7" fill="url(#g25)"/><circle cx="420.1" cy="448.4" r="7.0" fill="url(#g62)"/><circle cx="430.6" cy="457.5" r="5.5" fill="url(#g19)"/><circle cx="342.2" cy="382.8" r="7.0" fill="url(#g62)"/><circle cx="516.7" cy="493.2" r="5.3" fill="url(#g13)"/><circle cx="576.3" cy="539.8" r="6.1" fill="url(#g36)"/><circle cx="545.8" cy="501.8" r="6.0" fill="url(#g32)"/><circle cx="386.1" cy="432.5" r="5.0" fill="url(#g3)"/><circle cx="374.4" cy="346.8" r="5.3" fill="url(#gp)"/><circle cx="443.2" cy="346.9" r="5.3" fill="url(#gp)"/><circle cx="395.3" cy="437.2" r="4.9" fill="url(#g2)"/><circle cx="512.0" cy="346.9" r="5.3" fill="url(#gp)"/><circle cx="580.9" cy="346.9" r="5.3" fill="url(#gp)"/><circle cx="498.4" cy="494.0" r="5.9" fill="url(#g30)"/><circle cx="649.7" cy="347.0" r="5.3" fill="url(#gp)"/><circle cx="576.2" cy="520.6" r="5.7" fill="url(#g24)"/><circle cx="384.0" cy="409.8" r="5.2" fill="url(#g9)"/><circle cx="436.3" cy="440.4" r="5.5" fill="url(#g18)"/><circle cx="372.5" cy="407.4" r="6.1" fill="url(#g37)"/><circle cx="360.0" cy="412.9" r="6.4" fill="url(#g45)"/><circle cx="641.3" cy="397.7" r="5.8" fill="url(#g27)"/><circle cx="572.7" cy="509.8" r="5.8" fill="url(#g28)"/><circle cx="397.8" cy="409.9" r="6.5" fill="url(#g49)"/><circle cx="636.7" cy="427.5" r="6.0" fill="url(#g35)"/><circle cx="556.7" cy="497.6" r="5.2" fill="url(#g8)"/><circle cx="543.4" cy="478.2" r="6.1" fill="url(#g35)"/><circle cx="596.0" cy="534.4" r="4.9" fill="url(#g1)"/><circle cx="370.8" cy="419.7" r="5.9" fill="url(#g31)"/><circle cx="414.3" cy="421.6" r="5.6" fill="url(#g22)"/><circle cx="344.5" cy="347.5" r="5.3" fill="url(#gp)"/><circle cx="414.2" cy="405.1" r="5.0" fill="url(#g2)"/><circle cx="413.4" cy="347.5" r="5.3" fill="url(#gp)"/><circle cx="472.4" cy="476.1" r="6.5" fill="url(#g49)"/><circle cx="482.2" cy="347.5" r="5.3" fill="url(#gp)"/><circle cx="568.7" cy="531.1" r="6.7" fill="url(#g54)"/><circle cx="551.0" cy="347.6" r="5.3" fill="url(#gp)"/><circle cx="619.8" cy="347.6" r="5.3" fill="url(#gp)"/><circle cx="516.4" cy="456.7" r="6.5" fill="url(#g49)"/><circle cx="588.7" cy="522.4" r="6.2" fill="url(#g38)"/><circle cx="447.8" cy="442.5" r="5.8" fill="url(#g28)"/><circle cx="521.6" cy="469.4" r="6.7" fill="url(#g55)"/><circle cx="384.3" cy="389.6" r="6.9" fill="url(#g61)"/><circle cx="508.2" cy="499.0" r="4.9" fill="url(#g1)"/><circle cx="458.8" cy="469.8" r="5.3" fill="url(#g11)"/><circle cx="548.1" cy="517.8" r="6.7" fill="url(#g55)"/><circle cx="383.5" cy="348.1" r="5.3" fill="url(#gp)"/><circle cx="633.4" cy="454.7" r="5.1" fill="url(#g6)"/><circle cx="452.3" cy="348.2" r="5.3" fill="url(#gp)"/><circle cx="484.7" cy="481.3" r="6.5" fill="url(#g49)"/><circle cx="521.1" cy="348.2" r="5.3" fill="url(#gp)"/><circle cx="589.9" cy="348.2" r="5.3" fill="url(#gp)"/><circle cx="389.5" cy="401.0" r="5.2" fill="url(#g9)"/><circle cx="518.5" cy="503.3" r="5.2" fill="url(#g8)"/><circle cx="557.3" cy="525.3" r="5.2" fill="url(#g9)"/><circle cx="637.9" cy="415.5" r="6.1" fill="url(#g36)"/><circle cx="502.5" cy="456.9" r="6.9" fill="url(#g60)"/><circle cx="594.0" cy="546.2" r="5.1" fill="url(#g7)"/><circle cx="339.1" cy="396.1" r="6.7" fill="url(#g53)"/><circle cx="617.0" cy="555.8" r="6.7" fill="url(#g55)"/><circle cx="381.7" cy="423.5" r="5.3" fill="url(#g12)"/><circle cx="490.1" cy="463.0" r="5.4" fill="url(#g16)"/><circle cx="353.6" cy="348.8" r="5.3" fill="url(#gp)"/><circle cx="477.0" cy="430.4" r="6.2" fill="url(#g39)"/><circle cx="422.4" cy="348.8" r="5.3" fill="url(#gp)"/><circle cx="475.7" cy="453.2" r="6.4" fill="url(#g45)"/><circle cx="491.3" cy="348.8" r="5.3" fill="url(#gp)"/><circle cx="350.2" cy="402.9" r="5.9" fill="url(#g31)"/><circle cx="469.8" cy="418.9" r="6.9" fill="url(#g60)"/><circle cx="560.1" cy="348.9" r="5.3" fill="url(#gp)"/><circle cx="628.9" cy="348.9" r="5.3" fill="url(#gp)"/><circle cx="440.4" cy="455.9" r="5.3" fill="url(#g14)"/><circle cx="355.6" cy="380.7" r="6.9" fill="url(#g59)"/><circle cx="604.1" cy="550.2" r="5.3" fill="url(#g12)"/><circle cx="394.7" cy="427.6" r="5.8" fill="url(#g26)"/><circle cx="456.1" cy="422.4" r="6.2" fill="url(#g39)"/><circle cx="392.6" cy="349.4" r="5.3" fill="url(#gp)"/><circle cx="610.5" cy="533.3" r="6.2" fill="url(#g38)"/><circle cx="641.3" cy="385.6" r="6.4" fill="url(#g46)"/><circle cx="563.6" cy="504.3" r="5.1" fill="url(#g6)"/><circle cx="623.4" cy="518.6" r="5.3" fill="url(#g13)"/><circle cx="461.4" cy="349.5" r="5.3" fill="url(#gp)"/><circle cx="621.0" cy="537.0" r="5.1" fill="url(#g6)"/><circle cx="366.8" cy="388.4" r="6.4" fill="url(#g45)"/><circle cx="587.2" cy="538.9" r="5.3" fill="url(#g13)"/><circle cx="465.1" cy="430.6" r="5.4" fill="url(#g14)"/><circle cx="642.7" cy="371.9" r="7.0" fill="url(#g62)"/><circle cx="530.2" cy="349.5" r="5.3" fill="url(#gp)"/><circle cx="627.0" cy="492.2" r="5.5" fill="url(#g19)"/><circle cx="510.5" cy="477.0" r="5.7" fill="url(#g25)"/><circle cx="599.0" cy="349.5" r="5.3" fill="url(#gp)"/><circle cx="499.4" cy="469.4" r="5.8" fill="url(#g27)"/><circle cx="599.9" cy="523.6" r="6.2" fill="url(#g38)"/><circle cx="630.1" cy="465.8" r="6.1" fill="url(#g35)"/><circle cx="629.4" cy="477.3" r="5.1" fill="url(#g7)"/><circle cx="539.5" cy="487.9" r="5.1" fill="url(#g6)"/><circle cx="432.5" cy="449.0" r="5.1" fill="url(#g5)"/><circle cx="376.0" cy="380.3" r="5.6" fill="url(#g20)"/><circle cx="415.5" cy="438.6" r="5.3" fill="url(#g12)"/><circle cx="362.7" cy="350.1" r="5.3" fill="url(#gp)"/><circle cx="408.6" cy="413.0" r="5.4" fill="url(#g17)"/><circle cx="496.5" cy="484.2" r="5.7" fill="url(#g24)"/><circle cx="431.5" cy="350.1" r="5.3" fill="url(#gp)"/><circle cx="500.3" cy="350.1" r="5.3" fill="url(#gp)"/><circle cx="539.3" cy="508.8" r="5.5" fill="url(#g19)"/><circle cx="530.0" cy="502.2" r="6.1" fill="url(#g36)"/><circle cx="569.2" cy="350.2" r="5.3" fill="url(#gp)"/><circle cx="530.6" cy="479.4" r="6.7" fill="url(#g55)"/><circle cx="407.2" cy="430.3" r="6.6" fill="url(#g50)"/><circle cx="507.7" cy="488.8" r="6.3" fill="url(#g42)"/><circle cx="638.0" cy="350.2" r="5.3" fill="url(#gp)"/><circle cx="580.2" cy="530.5" r="6.1" fill="url(#g37)"/><circle cx="431.0" cy="411.4" r="6.6" fill="url(#g50)"/><circle cx="457.4" cy="459.0" r="6.4" fill="url(#g45)"/><circle cx="442.8" cy="431.1" r="6.9" fill="url(#g59)"/><circle cx="401.7" cy="350.7" r="5.3" fill="url(#gp)"/><circle cx="457.7" cy="446.2" r="5.9" fill="url(#g30)"/><circle cx="470.5" cy="350.8" r="5.3" fill="url(#gp)"/><circle cx="470.4" cy="441.4" r="6.6" fill="url(#g52)"/><circle cx="539.3" cy="350.8" r="5.3" fill="url(#gp)"/><circle cx="469.4" cy="464.3" r="6.6" fill="url(#g51)"/><circle cx="608.1" cy="350.8" r="5.3" fill="url(#gp)"/><circle cx="623.0" cy="506.0" r="6.8" fill="url(#g59)"/><circle cx="428.2" cy="422.9" r="5.1" fill="url(#g6)"/><circle cx="342.4" cy="370.9" r="6.7" fill="url(#g54)"/><circle cx="375.3" cy="396.7" r="5.4" fill="url(#g14)"/><circle cx="558.7" cy="515.0" r="6.6" fill="url(#g51)"/><circle cx="378.3" cy="414.6" r="4.9" fill="url(#g1)"/><circle cx="562.2" cy="469.6" r="6.3" fill="url(#g41)"/><circle cx="549.6" cy="493.0" r="6.0" fill="url(#g34)"/><circle cx="510.6" cy="466.4" r="5.9" fill="url(#g29)"/><circle cx="371.8" cy="351.4" r="5.3" fill="url(#gp)"/><circle cx="426.6" cy="440.0" r="5.7" fill="url(#g25)"/><circle cx="440.6" cy="351.4" r="5.3" fill="url(#gp)"/><circle cx="509.4" cy="351.4" r="5.3" fill="url(#gp)"/><circle cx="578.3" cy="351.5" r="5.3" fill="url(#gp)"/><circle cx="647.1" cy="351.5" r="5.3" fill="url(#gp)"/><circle cx="389.5" cy="416.6" r="6.4" fill="url(#g44)"/><circle cx="571.8" cy="499.4" r="5.4" fill="url(#g14)"/><circle cx="421.4" cy="404.6" r="5.0" fill="url(#g2)"/><circle cx="633.2" cy="443.4" r="5.4" fill="url(#g16)"/><circle cx="481.7" cy="470.0" r="6.2" fill="url(#g38)"/><circle cx="602.1" cy="539.7" r="6.0" fill="url(#g32)"/><circle cx="613.7" cy="544.9" r="6.6" fill="url(#g52)"/><circle cx="521.4" cy="495.3" r="4.9" fill="url(#g1)"/><circle cx="611.9" cy="521.3" r="6.1" fill="url(#g37)"/><circle cx="405.2" cy="401.3" r="6.9" fill="url(#g59)"/><circle cx="569.2" cy="521.7" r="5.2" fill="url(#g10)"/><circle cx="638.3" cy="405.5" r="5.6" fill="url(#g22)"/><circle cx="468.7" cy="390.8" r="6.6" fill="url(#g51)"/><circle cx="341.9" cy="352.0" r="5.3" fill="url(#gp)"/><circle cx="410.7" cy="352.0" r="5.3" fill="url(#gp)"/><circle cx="621.3" cy="527.2" r="5.1" fill="url(#g5)"/><circle cx="479.6" cy="352.1" r="5.3" fill="url(#gp)"/><circle cx="548.4" cy="352.1" r="5.3" fill="url(#gp)"/><circle cx="448.5" cy="451.6" r="5.0" fill="url(#g4)"/><circle cx="617.2" cy="352.1" r="5.3" fill="url(#gp)"/><circle cx="366.7" cy="403.2" r="5.4" fill="url(#g15)"/><circle cx="392.5" cy="381.1" r="5.8" fill="url(#g29)"/><circle cx="582.3" cy="505.8" r="6.8" fill="url(#g56)"/><circle cx="588.2" cy="494.3" r="5.4" fill="url(#g17)"/><circle cx="592.8" cy="514.3" r="6.2" fill="url(#g38)"/><circle cx="550.6" cy="472.4" r="5.4" fill="url(#g16)"/><circle cx="419.5" cy="415.5" r="5.9" fill="url(#g32)"/><circle cx="549.3" cy="506.6" r="5.8" fill="url(#g29)"/><circle cx="491.7" cy="475.2" r="5.0" fill="url(#g3)"/><circle cx="380.9" cy="352.7" r="5.3" fill="url(#gp)"/><circle cx="449.7" cy="352.7" r="5.3" fill="url(#gp)"/><circle cx="347.6" cy="389.5" r="6.1" fill="url(#g36)"/><circle cx="518.5" cy="352.7" r="5.3" fill="url(#gp)"/><circle cx="587.3" cy="352.8" r="5.3" fill="url(#gp)"/><circle cx="560.3" cy="496.0" r="5.4" fill="url(#g14)"/><circle cx="593.6" cy="532.3" r="5.4" fill="url(#g15)"/><circle cx="540.2" cy="472.9" r="4.9" fill="url(#g1)"/><circle cx="358.1" cy="395.5" r="5.9" fill="url(#g30)"/><circle cx="456.4" cy="432.4" r="5.3" fill="url(#g11)"/><circle cx="394.2" cy="393.7" r="6.5" fill="url(#g49)"/><circle cx="500.8" cy="437.0" r="6.1" fill="url(#g35)"/><circle cx="401.4" cy="419.8" r="5.9" fill="url(#g30)"/><circle cx="539.9" cy="499.5" r="5.9" fill="url(#g29)"/><circle cx="419.8" cy="429.8" r="6.1" fill="url(#g37)"/><circle cx="367.1" cy="376.6" r="5.3" fill="url(#g12)"/><circle cx="386.5" cy="406.1" r="4.9" fill="url(#g1)"/><circle cx="557.7" cy="483.7" r="6.8" fill="url(#g58)"/><circle cx="351.0" cy="353.3" r="5.3" fill="url(#gp)"/><circle cx="459.3" cy="412.6" r="5.7" fill="url(#g26)"/><circle cx="419.8" cy="353.3" r="5.3" fill="url(#gp)"/><circle cx="437.0" cy="441.6" r="5.0" fill="url(#g3)"/><circle cx="488.6" cy="353.4" r="5.3" fill="url(#gp)"/><circle cx="557.5" cy="353.4" r="5.3" fill="url(#gp)"/><circle cx="603.8" cy="497.5" r="5.4" fill="url(#g15)"/><circle cx="626.3" cy="353.4" r="5.3" fill="url(#gp)"/><circle cx="519.1" cy="484.5" r="6.7" fill="url(#g55)"/><circle cx="338.0" cy="382.2" r="5.8" fill="url(#g27)"/><circle cx="545.5" cy="481.7" r="5.2" fill="url(#g10)"/><circle cx="543.4" cy="463.2" r="5.2" fill="url(#g10)"/><circle cx="439.3" cy="419.7" r="5.9" fill="url(#g31)"/><circle cx="633.2" cy="432.1" r="6.0" fill="url(#g34)"/><circle cx="376.6" cy="405.8" r="4.9" fill="url(#g1)"/><circle cx="491.0" cy="429.4" r="5.9" fill="url(#g31)"/><circle cx="502.2" cy="477.1" r="5.2" fill="url(#g9)"/><circle cx="581.0" cy="519.0" r="6.7" fill="url(#g54)"/><circle cx="390.0" cy="354.0" r="5.3" fill="url(#gp)"/><circle cx="458.8" cy="354.0" r="5.3" fill="url(#gp)"/><circle cx="630.6" cy="453.3" r="5.5" fill="url(#g19)"/><circle cx="530.9" cy="490.6" r="6.3" fill="url(#g44)"/><circle cx="527.6" cy="354.0" r="5.3" fill="url(#gp)"/><circle cx="596.4" cy="354.1" r="5.3" fill="url(#gp)"/><circle cx="467.0" cy="452.7" r="6.6" fill="url(#g51)"/><circle cx="496.2" cy="455.0" r="4.9" fill="url(#g1)"/><circle cx="523.8" cy="455.9" r="6.7" fill="url(#g54)"/><circle cx="635.2" cy="420.3" r="5.5" fill="url(#g18)"/><circle cx="568.5" cy="489.9" r="5.3" fill="url(#g12)"/><circle cx="570.7" cy="510.7" r="6.9" fill="url(#g61)"/><circle cx="357.0" cy="372.4" r="5.4" fill="url(#g16)"/><circle cx="360.1" cy="354.6" r="5.3" fill="url(#gp)"/><circle cx="520.2" cy="467.3" r="5.0" fill="url(#g4)"/><circle cx="428.9" cy="354.6" r="5.3" fill="url(#gp)"/><circle cx="448.7" cy="441.0" r="6.5" fill="url(#g49)"/><circle cx="491.0" cy="444.4" r="6.2" fill="url(#g40)"/><circle cx="497.7" cy="354.7" r="5.3" fill="url(#gp)"/><circle cx="625.8" cy="482.9" r="5.8" fill="url(#g27)"/><circle cx="566.6" cy="354.7" r="5.3" fill="url(#gp)"/><circle cx="530.4" cy="469.5" r="5.4" fill="url(#g17)"/><circle cx="478.8" cy="459.8" r="5.7" fill="url(#g25)"/><circle cx="605.4" cy="531.0" r="6.5" fill="url(#g48)"/><circle cx="637.9" cy="394.4" r="6.3" fill="url(#g43)"/><circle cx="613.7" cy="502.0" r="5.1" fill="url(#g7)"/><circle cx="635.4" cy="354.7" r="5.3" fill="url(#gp)"/><circle cx="411.5" cy="422.3" r="5.1" fill="url(#g6)"/><circle cx="510.8" cy="456.0" r="5.9" fill="url(#g30)"/><circle cx="432.2" cy="431.2" r="6.2" fill="url(#g39)"/><circle cx="449.8" cy="424.5" r="5.4" fill="url(#g15)"/><circle cx="491.1" cy="464.9" r="6.1" fill="url(#g37)"/><circle cx="620.4" cy="516.5" r="6.1" fill="url(#g36)"/><circle cx="399.0" cy="355.3" r="5.3" fill="url(#gp)"/><circle cx="467.9" cy="355.3" r="5.3" fill="url(#gp)"/><circle cx="415.9" cy="388.6" r="6.3" fill="url(#g42)"/><circle cx="617.1" cy="536.0" r="6.5" fill="url(#g48)"/><circle cx="536.7" cy="355.3" r="5.3" fill="url(#gp)"/><circle cx="605.5" cy="355.4" r="5.3" fill="url(#gp)"/><circle cx="559.1" cy="505.3" r="5.1" fill="url(#g5)"/><circle cx="480.4" cy="436.1" r="6.8" fill="url(#g59)"/><circle cx="478.4" cy="448.6" r="5.4" fill="url(#g14)"/><circle cx="463.7" cy="424.0" r="6.7" fill="url(#g54)"/><circle cx="640.2" cy="379.2" r="5.8" fill="url(#g28)"/><circle cx="348.2" cy="379.1" r="5.4" fill="url(#g15)"/><circle cx="369.2" cy="355.9" r="5.3" fill="url(#gp)"/><circle cx="622.7" cy="495.6" r="6.5" fill="url(#g48)"/><circle cx="438.0" cy="355.9" r="5.3" fill="url(#gp)"/><circle cx="506.8" cy="356.0" r="5.3" fill="url(#gp)"/><circle cx="575.6" cy="356.0" r="5.3" fill="url(#gp)"/><circle cx="472.0" cy="412.9" r="6.6" fill="url(#g53)"/><circle cx="644.5" cy="356.0" r="5.3" fill="url(#gp)"/><circle cx="578.4" cy="496.4" r="5.1" fill="url(#g5)"/><circle cx="512.1" cy="474.3" r="5.9" fill="url(#g30)"/><circle cx="596.3" cy="473.7" r="5.3" fill="url(#g14)"/><circle cx="595.8" cy="523.2" r="5.4" fill="url(#g16)"/><circle cx="593.9" cy="502.7" r="6.4" fill="url(#g44)"/><circle cx="359.2" cy="384.2" r="6.6" fill="url(#g51)"/><circle cx="381.6" cy="383.2" r="6.8" fill="url(#g57)"/><circle cx="396.2" cy="406.7" r="6.0" fill="url(#g33)"/><circle cx="370.7" cy="391.0" r="6.4" fill="url(#g44)"/><circle cx="339.3" cy="356.5" r="5.3" fill="url(#gp)"/><circle cx="408.1" cy="356.6" r="5.3" fill="url(#gp)"/><circle cx="415.2" cy="401.0" r="6.0" fill="url(#g32)"/><circle cx="477.0" cy="356.6" r="5.3" fill="url(#gp)"/><circle cx="642.2" cy="368.2" r="5.1" fill="url(#g5)"/><circle cx="627.7" cy="463.6" r="5.8" fill="url(#g28)"/><circle cx="382.6" cy="396.8" r="6.6" fill="url(#g51)"/><circle cx="545.8" cy="356.6" r="5.3" fill="url(#gp)"/><circle cx="614.6" cy="356.7" r="5.3" fill="url(#gp)"/><circle cx="407.9" cy="411.5" r="6.4" fill="url(#g45)"/><circle cx="426.7" cy="403.2" r="5.3" fill="url(#g14)"/><circle cx="436.7" cy="409.0" r="6.0" fill="url(#g32)"/><circle cx="542.6" cy="490.1" r="5.6" fill="url(#g21)"/><circle cx="586.5" cy="478.2" r="5.2" fill="url(#g8)"/><circle cx="503.5" cy="465.7" r="6.3" fill="url(#g43)"/><circle cx="461.9" cy="440.9" r="6.7" fill="url(#g55)"/><circle cx="378.3" cy="357.2" r="5.3" fill="url(#gp)"/><circle cx="568.8" cy="463.1" r="5.9" fill="url(#g30)"/><circle cx="447.1" cy="357.2" r="5.3" fill="url(#gp)"/><circle cx="503.0" cy="447.4" r="6.4" fill="url(#g47)"/><circle cx="425.4" cy="421.7" r="5.6" fill="url(#g23)"/><circle cx="515.9" cy="357.3" r="5.3" fill="url(#gp)"/><circle cx="584.7" cy="357.3" r="5.3" fill="url(#gp)"/><circle cx="378.9" cy="370.6" r="5.6" fill="url(#g22)"/><circle cx="514.1" cy="424.7" r="5.6" fill="url(#g21)"/><circle cx="571.5" cy="435.3" r="5.9" fill="url(#g30)"/><circle cx="404.4" cy="390.4" r="5.5" fill="url(#g18)"/><circle cx="553.0" cy="494.8" r="5.4" fill="url(#g16)"/><circle cx="448.9" cy="413.0" r="6.5" fill="url(#g49)"/><circle cx="611.1" cy="511.2" r="5.0" fill="url(#g3)"/><circle cx="575.3" cy="482.1" r="6.3" fill="url(#g42)"/><circle cx="564.9" cy="477.5" r="4.9" fill="url(#g0)"/><circle cx="337.5" cy="370.5" r="5.4" fill="url(#g16)"/><circle cx="442.7" cy="431.6" r="5.1" fill="url(#g7)"/><circle cx="348.4" cy="357.8" r="5.3" fill="url(#gp)"/><circle cx="501.3" cy="395.2" r="6.1" fill="url(#g38)"/><circle cx="417.2" cy="357.9" r="5.3" fill="url(#gp)"/><circle cx="635.0" cy="409.8" r="5.7" fill="url(#g26)"/><circle cx="486.0" cy="357.9" r="5.3" fill="url(#gp)"/><circle cx="554.9" cy="357.9" r="5.3" fill="url(#gp)"/><circle cx="585.6" cy="489.0" r="5.7" fill="url(#g24)"/><circle cx="544.8" cy="470.5" r="5.2" fill="url(#g11)"/><circle cx="623.7" cy="358.0" r="5.3" fill="url(#gp)"/><circle cx="523.4" cy="476.0" r="5.5" fill="url(#g19)"/><circle cx="510.5" cy="436.7" r="6.6" fill="url(#g51)"/><circle cx="535.7" cy="479.9" r="6.9" fill="url(#g62)"/><circle cx="629.3" cy="441.0" r="6.7" fill="url(#g56)"/><circle cx="567.6" cy="499.4" r="6.3" fill="url(#g42)"/><circle cx="487.5" cy="454.2" r="5.8" fill="url(#g29)"/><circle cx="534.5" cy="460.4" r="6.8" fill="url(#g57)"/><circle cx="557.0" cy="468.4" r="6.6" fill="url(#g53)"/><circle cx="397.0" cy="380.4" r="4.9" fill="url(#g1)"/><circle cx="453.8" cy="401.6" r="5.5" fill="url(#g20)"/><circle cx="586.3" cy="511.5" r="5.3" fill="url(#g11)"/><circle cx="387.4" cy="358.5" r="5.3" fill="url(#gp)"/><circle cx="489.2" cy="416.3" r="6.3" fill="url(#g41)"/><circle cx="456.2" cy="358.5" r="5.3" fill="url(#gp)"/><circle cx="525.0" cy="358.6" r="5.3" fill="url(#gp)"/><circle cx="593.8" cy="358.6" r="5.3" fill="url(#gp)"/><circle cx="607.3" cy="520.7" r="6.2" fill="url(#g39)"/><circle cx="620.9" cy="505.8" r="5.6" fill="url(#g22)"/><circle cx="577.6" cy="505.6" r="5.0" fill="url(#g4)"/><circle cx="598.0" cy="491.9" r="6.8" fill="url(#g58)"/><circle cx="357.5" cy="359.1" r="5.3" fill="url(#gp)"/><circle cx="625.7" cy="474.2" r="5.3" fill="url(#g12)"/><circle cx="426.3" cy="359.2" r="5.3" fill="url(#gp)"/><circle cx="453.5" cy="432.2" r="5.6" fill="url(#g20)"/><circle cx="617.7" cy="526.4" r="5.7" fill="url(#g25)"/><circle cx="495.1" cy="359.2" r="5.3" fill="url(#gp)"/><circle cx="563.9" cy="359.2" r="5.3" fill="url(#gp)"/><circle cx="478.9" cy="424.2" r="6.5" fill="url(#g47)"/><circle cx="419.9" cy="411.6" r="6.0" fill="url(#g33)"/><circle cx="605.0" cy="502.5" r="5.7" fill="url(#g24)"/><circle cx="632.8" cy="359.3" r="5.3" fill="url(#gp)"/><circle cx="435.8" cy="422.8" r="4.9" fill="url(#g2)"/><circle cx="598.4" cy="512.6" r="6.6" fill="url(#g50)"/><circle cx="516.8" cy="448.5" r="6.5" fill="url(#g47)"/><circle cx="348.3" cy="371.3" r="5.0" fill="url(#g4)"/><circle cx="548.2" cy="458.7" r="6.7" fill="url(#g55)"/><circle cx="489.5" cy="438.2" r="4.9" fill="url(#g0)"/><circle cx="611.8" cy="491.5" r="6.6" fill="url(#g50)"/><circle cx="472.9" cy="442.4" r="5.2" fill="url(#g10)"/><circle cx="396.4" cy="359.8" r="5.3" fill="url(#gp)"/><circle cx="522.3" cy="436.7" r="5.3" fill="url(#g12)"/><circle cx="465.3" cy="359.8" r="5.3" fill="url(#gp)"/><circle cx="534.1" cy="359.9" r="5.3" fill="url(#gp)"/><circle cx="602.9" cy="359.9" r="5.3" fill="url(#gp)"/><circle cx="497.9" cy="456.8" r="4.9" fill="url(#g0)"/><circle cx="404.6" cy="400.9" r="5.7" fill="url(#g24)"/><circle cx="370.1" cy="378.5" r="6.8" fill="url(#g58)"/><circle cx="549.5" cy="481.4" r="7.0" fill="url(#g62)"/><circle cx="630.5" cy="427.5" r="6.6" fill="url(#g50)"/><circle cx="534.3" cy="434.8" r="6.5" fill="url(#g49)"/><circle cx="461.0" cy="411.1" r="6.2" fill="url(#g38)"/><circle cx="516.5" cy="465.2" r="5.5" fill="url(#g18)"/><circle cx="366.6" cy="360.4" r="5.3" fill="url(#gp)"/><circle cx="562.4" cy="488.5" r="6.8" fill="url(#g57)"/><circle cx="435.4" cy="360.5" r="5.3" fill="url(#gp)"/><circle cx="504.2" cy="360.5" r="5.3" fill="url(#gp)"/><circle cx="490.4" cy="427.6" r="5.4" fill="url(#g16)"/><circle cx="392.9" cy="390.8" r="6.7" fill="url(#g53)"/><circle cx="573.0" cy="360.5" r="5.3" fill="url(#gp)"/><circle cx="358.4" cy="374.4" r="5.0" fill="url(#g4)"/><circle cx="623.0" cy="487.0" r="5.4" fill="url(#g17)"/><circle cx="641.8" cy="360.6" r="5.3" fill="url(#gp)"/><circle cx="499.6" cy="434.9" r="5.4" fill="url(#g16)"/><circle cx="424.7" cy="393.5" r="6.3" fill="url(#g43)"/><circle cx="482.9" cy="445.5" r="5.0" fill="url(#g3)"/><circle cx="436.0" cy="398.3" r="5.5" fill="url(#g18)"/><circle cx="635.8" cy="386.8" r="6.4" fill="url(#g46)"/><circle cx="537.9" cy="447.7" r="6.6" fill="url(#g50)"/><circle cx="430.0" cy="414.7" r="4.9" fill="url(#g1)"/><circle cx="446.4" cy="423.2" r="5.4" fill="url(#g14)"/><circle cx="336.7" cy="361.1" r="5.3" fill="url(#gp)"/><circle cx="405.5" cy="361.1" r="5.3" fill="url(#gp)"/><circle cx="474.3" cy="361.1" r="5.3" fill="url(#gp)"/><circle cx="635.0" cy="399.3" r="5.8" fill="url(#g27)"/><circle cx="543.2" cy="361.2" r="5.3" fill="url(#gp)"/><circle cx="571.8" cy="472.2" r="5.6" fill="url(#g21)"/><circle cx="612.0" cy="361.2" r="5.3" fill="url(#gp)"/><circle cx="508.6" cy="457.3" r="5.6" fill="url(#g22)"/><circle cx="416.8" cy="383.0" r="5.2" fill="url(#g10)"/><circle cx="482.6" cy="402.5" r="5.0" fill="url(#g4)"/><circle cx="468.7" cy="419.5" r="5.0" fill="url(#g3)"/><circle cx="468.2" cy="431.6" r="6.6" fill="url(#g50)"/><circle cx="526.9" cy="468.0" r="5.2" fill="url(#g8)"/><circle cx="626.2" cy="452.9" r="6.6" fill="url(#g50)"/><circle cx="617.0" cy="516.2" r="6.7" fill="url(#g55)"/><circle cx="585.8" cy="499.3" r="6.3" fill="url(#g41)"/><circle cx="375.7" cy="361.7" r="5.3" fill="url(#gp)"/><circle cx="523.0" cy="426.0" r="5.7" fill="url(#g24)"/><circle cx="444.5" cy="361.8" r="5.3" fill="url(#gp)"/><circle cx="574.9" cy="492.5" r="6.3" fill="url(#g43)"/><circle cx="513.3" cy="361.8" r="5.3" fill="url(#gp)"/><circle cx="582.1" cy="361.8" r="5.3" fill="url(#gp)"/><circle cx="638.3" cy="374.5" r="5.7" fill="url(#g25)"/><circle cx="545.5" cy="438.2" r="5.2" fill="url(#g10)"/><circle cx="445.8" cy="404.9" r="4.9" fill="url(#g1)"/><circle cx="578.1" cy="462.9" r="4.9" fill="url(#g1)"/><circle cx="559.8" cy="446.4" r="6.2" fill="url(#g40)"/><circle cx="345.8" cy="362.4" r="5.3" fill="url(#gp)"/><circle cx="527.0" cy="444.8" r="4.9" fill="url(#g1)"/><circle cx="414.6" cy="362.4" r="5.3" fill="url(#gp)"/><circle cx="589.6" cy="427.7" r="5.6" fill="url(#g21)"/><circle cx="483.4" cy="362.4" r="5.3" fill="url(#gp)"/><circle cx="552.2" cy="362.5" r="5.3" fill="url(#gp)"/><circle cx="581.6" cy="476.8" r="5.3" fill="url(#g14)"/><circle cx="621.1" cy="362.5" r="5.3" fill="url(#gp)"/><circle cx="458.2" cy="423.1" r="6.3" fill="url(#g42)"/><circle cx="495.0" cy="445.9" r="5.5" fill="url(#g19)"/><circle cx="394.3" cy="374.2" r="4.9" fill="url(#g2)"/><circle cx="620.7" cy="497.5" r="5.4" fill="url(#g14)"/><circle cx="440.5" cy="414.3" r="5.5" fill="url(#g20)"/><circle cx="537.3" cy="470.0" r="5.5" fill="url(#g19)"/><circle cx="402.6" cy="384.5" r="5.1" fill="url(#g6)"/><circle cx="632.6" cy="416.7" r="5.1" fill="url(#g6)"/><circle cx="625.6" cy="407.3" r="6.6" fill="url(#g53)"/><circle cx="417.2" cy="401.8" r="5.0" fill="url(#g4)"/><circle cx="624.8" cy="464.9" r="5.9" fill="url(#g29)"/><circle cx="384.7" cy="363.0" r="5.3" fill="url(#gp)"/><circle cx="447.3" cy="393.2" r="6.5" fill="url(#g49)"/><circle cx="480.3" cy="435.0" r="6.0" fill="url(#g33)"/><circle cx="453.6" cy="363.1" r="5.3" fill="url(#gp)"/><circle cx="522.4" cy="363.1" r="5.3" fill="url(#gp)"/><circle cx="591.2" cy="363.1" r="5.3" fill="url(#gp)"/><circle cx="427.5" cy="404.9" r="5.6" fill="url(#g22)"/><circle cx="607.4" cy="509.9" r="4.9" fill="url(#g2)"/><circle cx="382.8" cy="376.9" r="6.6" fill="url(#g52)"/><circle cx="436.3" cy="386.4" r="6.0" fill="url(#g33)"/><circle cx="596.9" cy="502.3" r="5.6" fill="url(#g21)"/><circle cx="507.1" cy="425.8" r="6.7" fill="url(#g53)"/><circle cx="473.8" cy="409.3" r="6.5" fill="url(#g48)"/><circle cx="354.9" cy="363.7" r="5.3" fill="url(#gp)"/><circle cx="423.7" cy="363.7" r="5.3" fill="url(#gp)"/><circle cx="492.5" cy="363.7" r="5.3" fill="url(#gp)"/><circle cx="410.8" cy="392.4" r="6.2" fill="url(#g41)"/><circle cx="561.3" cy="363.8" r="5.3" fill="url(#gp)"/><circle cx="525.1" cy="456.3" r="7.0" fill="url(#g63)"/><circle cx="630.1" cy="363.8" r="5.3" fill="url(#gp)"/><circle cx="516.4" cy="416.8" r="6.0" fill="url(#g32)"/><circle cx="595.7" cy="453.4" r="6.9" fill="url(#g61)"/><circle cx="507.1" cy="446.5" r="6.2" fill="url(#g40)"/><circle cx="596.4" cy="414.9" r="5.0" fill="url(#g5)"/><circle cx="561.0" cy="476.0" r="6.8" fill="url(#g58)"/><circle cx="567.4" cy="459.7" r="6.5" fill="url(#g49)"/><circle cx="393.8" cy="364.3" r="5.3" fill="url(#gp)"/><circle cx="462.6" cy="364.4" r="5.3" fill="url(#gp)"/><circle cx="531.5" cy="364.4" r="5.3" fill="url(#gp)"/><circle cx="600.3" cy="364.4" r="5.3" fill="url(#gp)"/><circle cx="549.1" cy="469.4" r="6.4" fill="url(#g45)"/><circle cx="582.6" cy="452.0" r="5.8" fill="url(#g26)"/><circle cx="608.6" cy="481.7" r="6.5" fill="url(#g49)"/><circle cx="556.2" cy="456.7" r="5.2" fill="url(#g8)"/><circle cx="514.3" cy="435.6" r="5.3" fill="url(#g13)"/><circle cx="451.3" cy="413.4" r="5.9" fill="url(#g31)"/><circle cx="492.3" cy="400.1" r="6.1" fill="url(#g38)"/><circle cx="455.4" cy="402.4" r="5.6" fill="url(#g21)"/><circle cx="364.0" cy="365.0" r="5.3" fill="url(#gp)"/><circle cx="432.8" cy="365.0" r="5.3" fill="url(#gp)"/><circle cx="600.8" cy="468.8" r="6.8" fill="url(#g59)"/><circle cx="501.6" cy="365.0" r="5.3" fill="url(#gp)"/><circle cx="628.1" cy="436.7" r="5.7" fill="url(#g23)"/><circle cx="486.3" cy="411.3" r="6.1" fill="url(#g37)"/><circle cx="570.4" cy="365.1" r="5.3" fill="url(#gp)"/><circle cx="639.2" cy="365.1" r="5.3" fill="url(#gp)"/><circle cx="572.3" cy="481.8" r="5.8" fill="url(#g27)"/><circle cx="585.7" cy="487.2" r="6.7" fill="url(#g55)"/><circle cx="491.8" cy="435.0" r="5.7" fill="url(#g25)"/><circle cx="466.4" cy="400.0" r="5.4" fill="url(#g16)"/><circle cx="607.9" cy="499.6" r="6.6" fill="url(#g51)"/><circle cx="437.5" cy="405.0" r="5.0" fill="url(#g3)"/><circle cx="621.0" cy="476.0" r="6.7" fill="url(#g56)"/><circle cx="402.9" cy="365.6" r="5.3" fill="url(#gp)"/><circle cx="471.7" cy="365.7" r="5.3" fill="url(#gp)"/><circle cx="540.5" cy="365.7" r="5.3" fill="url(#gp)"/><circle cx="566.3" cy="438.8" r="5.0" fill="url(#g2)"/><circle cx="617.6" cy="506.5" r="5.8" fill="url(#g27)"/><circle cx="609.4" cy="365.7" r="5.3" fill="url(#gp)"/><circle cx="539.1" cy="458.5" r="6.9" fill="url(#g61)"/><circle cx="581.1" cy="439.9" r="6.2" fill="url(#g41)"/><circle cx="429.1" cy="378.0" r="5.4" fill="url(#g17)"/><circle cx="586.7" cy="467.5" r="6.6" fill="url(#g53)"/><circle cx="548.4" cy="448.0" r="6.8" fill="url(#g56)"/><circle cx="373.0" cy="366.3" r="5.3" fill="url(#gp)"/><circle cx="526.3" cy="435.0" r="6.5" fill="url(#g48)"/><circle cx="441.9" cy="366.3" r="5.3" fill="url(#gp)"/><circle cx="447.9" cy="379.5" r="6.3" fill="url(#g42)"/><circle cx="510.7" cy="366.3" r="5.3" fill="url(#gp)"/><circle cx="579.5" cy="366.4" r="5.3" fill="url(#gp)"/><circle cx="495.7" cy="417.8" r="5.4" fill="url(#g15)"/><circle cx="619.3" cy="487.6" r="6.3" fill="url(#g44)"/><circle cx="484.8" cy="424.5" r="6.9" fill="url(#g59)"/><circle cx="519.0" cy="445.7" r="6.1" fill="url(#g36)"/><circle cx="598.6" cy="489.6" r="7.0" fill="url(#g63)"/><circle cx="431.3" cy="395.6" r="5.9" fill="url(#g30)"/><circle cx="412.0" cy="366.9" r="5.3" fill="url(#gp)"/><circle cx="480.8" cy="367.0" r="5.3" fill="url(#gp)"/><circle cx="473.0" cy="420.0" r="5.5" fill="url(#g19)"/><circle cx="399.2" cy="378.6" r="5.0" fill="url(#g2)"/><circle cx="549.6" cy="367.0" r="5.3" fill="url(#gp)"/><circle cx="618.5" cy="367.0" r="5.3" fill="url(#gp)"/><circle cx="503.5" cy="436.1" r="6.0" fill="url(#g32)"/><circle cx="629.1" cy="426.1" r="5.2" fill="url(#g10)"/><circle cx="421.5" cy="387.3" r="6.5" fill="url(#g48)"/><circle cx="517.9" cy="426.7" r="5.0" fill="url(#g3)"/><circle cx="410.0" cy="381.5" r="5.9" fill="url(#g30)"/><circle cx="462.9" cy="411.0" r="6.3" fill="url(#g42)"/><circle cx="382.1" cy="367.6" r="5.3" fill="url(#gp)"/><circle cx="478.9" cy="399.4" r="6.3" fill="url(#g43)"/><circle cx="450.9" cy="367.6" r="5.3" fill="url(#gp)"/><circle cx="519.8" cy="367.6" r="5.3" fill="url(#gp)"/><circle cx="588.6" cy="367.7" r="5.3" fill="url(#gp)"/><circle cx="506.1" cy="416.2" r="5.3" fill="url(#g12)"/><circle cx="558.9" cy="466.3" r="5.5" fill="url(#g19)"/><circle cx="570.7" cy="470.4" r="6.6" fill="url(#g52)"/><circle cx="571.8" cy="448.8" r="6.7" fill="url(#g53)"/><circle cx="421.1" cy="368.2" r="5.3" fill="url(#gp)"/><circle cx="577.8" cy="459.8" r="5.6" fill="url(#g21)"/><circle cx="489.9" cy="368.3" r="5.3" fill="url(#gp)"/><circle cx="632.9" cy="387.8" r="6.4" fill="url(#g45)"/><circle cx="446.1" cy="401.0" r="5.3" fill="url(#g11)"/><circle cx="538.1" cy="435.7" r="5.3" fill="url(#g13)"/><circle cx="558.7" cy="368.3" r="5.3" fill="url(#gp)"/><circle cx="532.5" cy="447.0" r="7.0" fill="url(#g62)"/><circle cx="459.9" cy="384.9" r="6.9" fill="url(#g60)"/><circle cx="627.5" cy="368.3" r="5.3" fill="url(#gp)"/><circle cx="525.5" cy="419.9" r="5.1" fill="url(#g8)"/><circle cx="534.2" cy="414.1" r="4.9" fill="url(#g1)"/><circle cx="580.8" cy="477.4" r="5.3" fill="url(#g12)"/><circle cx="623.9" cy="446.6" r="6.7" fill="url(#g56)"/><circle cx="575.7" cy="428.5" r="6.9" fill="url(#g60)"/><circle cx="391.2" cy="368.9" r="5.3" fill="url(#gp)"/><circle cx="617.7" cy="497.4" r="5.6" fill="url(#g22)"/><circle cx="460.0" cy="368.9" r="5.3" fill="url(#gp)"/><circle cx="528.8" cy="368.9" r="5.3" fill="url(#gp)"/><circle cx="630.6" cy="400.8" r="6.5" fill="url(#g47)"/><circle cx="622.3" cy="459.9" r="6.3" fill="url(#g42)"/><circle cx="550.1" cy="458.9" r="5.2" fill="url(#g10)"/><circle cx="597.7" cy="369.0" r="5.3" fill="url(#gp)"/><circle cx="496.8" cy="427.6" r="5.4" fill="url(#g15)"/><circle cx="611.1" cy="473.2" r="5.5" fill="url(#g19)"/><circle cx="559.4" cy="444.7" r="5.7" fill="url(#g24)"/><circle cx="610.7" cy="462.8" r="5.3" fill="url(#g14)"/><circle cx="430.2" cy="369.5" r="5.3" fill="url(#gp)"/><circle cx="593.2" cy="478.3" r="7.0" fill="url(#g63)"/><circle cx="627.9" cy="414.5" r="7.0" fill="url(#g63)"/><circle cx="499.0" cy="369.6" r="5.3" fill="url(#gp)"/><circle cx="544.5" cy="420.0" r="5.4" fill="url(#g15)"/><circle cx="567.8" cy="369.6" r="5.3" fill="url(#gp)"/><circle cx="636.6" cy="369.6" r="5.3" fill="url(#gp)"/><circle cx="556.2" cy="422.9" r="5.7" fill="url(#g23)"/><circle cx="441.7" cy="389.6" r="6.9" fill="url(#g61)"/><circle cx="400.3" cy="370.2" r="5.3" fill="url(#gp)"/><circle cx="610.0" cy="490.4" r="5.0" fill="url(#g4)"/><circle cx="469.1" cy="370.2" r="5.3" fill="url(#gp)"/><circle cx="537.9" cy="370.2" r="5.3" fill="url(#gp)"/><circle cx="606.8" cy="370.2" r="5.3" fill="url(#gp)"/><circle cx="471.7" cy="390.0" r="6.0" fill="url(#g33)"/><circle cx="478.1" cy="411.1" r="6.1" fill="url(#g37)"/><circle cx="517.1" cy="435.2" r="5.2" fill="url(#g9)"/><circle cx="589.4" cy="445.8" r="6.5" fill="url(#g49)"/><circle cx="518.7" cy="403.7" r="6.5" fill="url(#g47)"/><circle cx="439.2" cy="370.8" r="5.3" fill="url(#gp)"/><circle cx="508.1" cy="370.9" r="5.3" fill="url(#gp)"/><circle cx="576.9" cy="370.9" r="5.3" fill="url(#gp)"/><circle cx="611.9" cy="450.8" r="6.6" fill="url(#g51)"/><circle cx="488.6" cy="404.7" r="5.8" fill="url(#g28)"/><circle cx="516.1" cy="416.2" r="5.7" fill="url(#g24)"/><circle cx="508.5" cy="426.4" r="6.3" fill="url(#g43)"/><circle cx="458.0" cy="397.4" r="6.2" fill="url(#g40)"/><circle cx="430.8" cy="383.7" r="5.2" fill="url(#g10)"/><circle cx="534.3" cy="425.8" r="6.3" fill="url(#g41)"/><circle cx="562.1" cy="456.1" r="6.5" fill="url(#g49)"/><circle cx="494.2" cy="394.9" r="5.1" fill="url(#g7)"/><circle cx="409.4" cy="371.5" r="5.3" fill="url(#gp)"/><circle cx="478.2" cy="371.5" r="5.3" fill="url(#gp)"/><circle cx="489.0" cy="416.0" r="5.3" fill="url(#g12)"/><circle cx="547.0" cy="371.5" r="5.3" fill="url(#gp)"/><circle cx="563.3" cy="432.9" r="6.8" fill="url(#g56)"/><circle cx="604.8" cy="481.3" r="5.8" fill="url(#g27)"/><circle cx="615.8" cy="371.5" r="5.3" fill="url(#gp)"/><circle cx="600.2" cy="457.0" r="6.9" fill="url(#g59)"/><circle cx="469.1" cy="402.9" r="5.8" fill="url(#g28)"/><circle cx="508.0" cy="408.3" r="5.0" fill="url(#g5)"/><circle cx="580.7" cy="468.2" r="5.0" fill="url(#g4)"/><circle cx="547.4" cy="431.3" r="6.6" fill="url(#g52)"/><circle cx="448.3" cy="372.1" r="5.3" fill="url(#gp)"/><circle cx="517.2" cy="372.2" r="5.3" fill="url(#gp)"/><circle cx="586.0" cy="372.2" r="5.3" fill="url(#gp)"/><circle cx="620.1" cy="470.4" r="5.6" fill="url(#g22)"/><circle cx="602.7" cy="470.0" r="5.7" fill="url(#g23)"/><circle cx="551.9" cy="450.5" r="4.9" fill="url(#g0)"/><circle cx="543.3" cy="443.4" r="5.8" fill="url(#g29)"/><circle cx="499.4" cy="418.9" r="5.3" fill="url(#g12)"/><circle cx="503.7" cy="398.8" r="5.0" fill="url(#g3)"/><circle cx="418.5" cy="372.8" r="5.3" fill="url(#gp)"/><circle cx="487.3" cy="372.8" r="5.3" fill="url(#gp)"/><circle cx="556.1" cy="372.8" r="5.3" fill="url(#gp)"/><circle cx="617.0" cy="482.6" r="6.6" fill="url(#g53)"/><circle cx="624.9" cy="372.8" r="5.3" fill="url(#gp)"/><circle cx="527.3" cy="434.4" r="4.9" fill="url(#g1)"/><circle cx="578.3" cy="439.5" r="6.2" fill="url(#g39)"/><circle cx="626.4" cy="427.6" r="5.1" fill="url(#g8)"/><circle cx="457.4" cy="373.4" r="5.3" fill="url(#gp)"/><circle cx="526.2" cy="373.5" r="5.3" fill="url(#gp)"/><circle cx="526.7" cy="412.4" r="6.1" fill="url(#g37)"/><circle cx="591.1" cy="466.1" r="6.5" fill="url(#g48)"/><circle cx="595.1" cy="373.5" r="5.3" fill="url(#gp)"/><circle cx="452.3" cy="388.2" r="5.2" fill="url(#g9)"/><circle cx="520.3" cy="425.9" r="5.8" fill="url(#g26)"/><circle cx="573.4" cy="456.1" r="5.8" fill="url(#g26)"/><circle cx="427.6" cy="374.1" r="5.3" fill="url(#gp)"/><circle cx="496.4" cy="374.1" r="5.3" fill="url(#gp)"/><circle cx="565.2" cy="374.1" r="5.3" fill="url(#gp)"/><circle cx="634.0" cy="374.1" r="5.3" fill="url(#gp)"/><circle cx="538.3" cy="415.5" r="5.5" fill="url(#g18)"/><circle cx="525.0" cy="393.2" r="6.9" fill="url(#g61)"/><circle cx="607.7" cy="411.3" r="6.8" fill="url(#g57)"/><circle cx="623.7" cy="438.3" r="5.7" fill="url(#g25)"/><circle cx="479.5" cy="400.8" r="5.5" fill="url(#g20)"/><circle cx="537.0" cy="435.2" r="4.9" fill="url(#g0)"/><circle cx="466.5" cy="374.7" r="5.3" fill="url(#gp)"/><circle cx="616.8" cy="460.8" r="5.7" fill="url(#g26)"/><circle cx="535.3" cy="374.7" r="5.3" fill="url(#gp)"/><circle cx="604.1" cy="374.8" r="5.3" fill="url(#gp)"/><circle cx="631.1" cy="389.6" r="5.1" fill="url(#g6)"/><circle cx="498.2" cy="408.0" r="6.4" fill="url(#g44)"/><circle cx="554.1" cy="440.3" r="6.2" fill="url(#g39)"/><circle cx="550.7" cy="420.0" r="5.5" fill="url(#g17)"/><circle cx="508.2" cy="416.4" r="4.9" fill="url(#g1)"/><circle cx="436.6" cy="375.4" r="5.3" fill="url(#gp)"/><circle cx="505.5" cy="375.4" r="5.3" fill="url(#gp)"/><circle cx="567.0" cy="445.5" r="7.0" fill="url(#g62)"/><circle cx="463.4" cy="388.3" r="5.8" fill="url(#g28)"/><circle cx="574.3" cy="375.4" r="5.3" fill="url(#gp)"/><circle cx="484.4" cy="388.5" r="6.2" fill="url(#g38)"/><circle cx="610.4" cy="473.9" r="5.3" fill="url(#g11)"/><circle cx="619.3" cy="418.7" r="6.7" fill="url(#g54)"/><circle cx="629.5" cy="399.8" r="4.9" fill="url(#g2)"/><circle cx="586.0" cy="455.8" r="6.8" fill="url(#g57)"/><circle cx="547.8" cy="407.7" r="6.8" fill="url(#g57)"/><circle cx="512.3" cy="394.8" r="5.8" fill="url(#g26)"/><circle cx="475.6" cy="376.0" r="5.3" fill="url(#gp)"/><circle cx="544.4" cy="376.0" r="5.3" fill="url(#gp)"/><circle cx="613.2" cy="376.1" r="5.3" fill="url(#gp)"/><circle cx="604.4" cy="423.8" r="6.1" fill="url(#g36)"/><circle cx="559.4" cy="412.0" r="5.2" fill="url(#g11)"/><circle cx="589.4" cy="437.7" r="5.9" fill="url(#g31)"/><circle cx="620.5" cy="449.1" r="6.4" fill="url(#g46)"/><circle cx="473.7" cy="392.2" r="5.1" fill="url(#g6)"/><circle cx="445.7" cy="376.7" r="5.3" fill="url(#gp)"/><circle cx="514.5" cy="376.7" r="5.3" fill="url(#gp)"/><circle cx="583.4" cy="376.7" r="5.3" fill="url(#gp)"/><circle cx="609.8" cy="442.4" r="6.8" fill="url(#g56)"/><circle cx="576.2" cy="427.6" r="6.9" fill="url(#g60)"/><circle cx="490.3" cy="398.9" r="5.9" fill="url(#g29)"/><circle cx="597.3" cy="446.9" r="5.9" fill="url(#g30)"/><circle cx="529.5" cy="422.0" r="5.4" fill="url(#g14)"/><circle cx="518.0" cy="415.6" r="5.1" fill="url(#g8)"/><circle cx="484.7" cy="377.3" r="5.3" fill="url(#gp)"/><circle cx="553.5" cy="377.3" r="5.3" fill="url(#gp)"/><circle cx="622.3" cy="377.4" r="5.3" fill="url(#gp)"/><circle cx="606.8" cy="463.8" r="6.2" fill="url(#g38)"/><circle cx="561.0" cy="422.8" r="5.5" fill="url(#g20)"/><circle cx="534.9" cy="402.5" r="7.0" fill="url(#g63)"/><circle cx="540.8" cy="425.5" r="6.2" fill="url(#g40)"/><circle cx="570.4" cy="417.0" r="5.0" fill="url(#g3)"/><circle cx="521.0" cy="405.8" r="4.9" fill="url(#g0)"/><circle cx="454.8" cy="378.0" r="5.3" fill="url(#gp)"/><circle cx="523.6" cy="378.0" r="5.3" fill="url(#gp)"/><circle cx="592.4" cy="378.0" r="5.3" fill="url(#gp)"/><circle cx="577.6" cy="447.3" r="5.2" fill="url(#g10)"/><circle cx="509.8" cy="406.2" r="6.1" fill="url(#g36)"/><circle cx="495.8" cy="389.8" r="4.9" fill="url(#g0)"/><circle cx="596.8" cy="457.9" r="5.1" fill="url(#g7)"/><circle cx="626.2" cy="409.2" r="5.7" fill="url(#g23)"/><circle cx="618.0" cy="469.0" r="5.3" fill="url(#g13)"/><circle cx="493.8" cy="378.6" r="5.3" fill="url(#gp)"/><circle cx="562.6" cy="378.6" r="5.3" fill="url(#gp)"/><circle cx="552.3" cy="429.9" r="5.7" fill="url(#g24)"/><circle cx="631.4" cy="378.7" r="5.3" fill="url(#gp)"/><circle cx="546.2" cy="395.7" r="6.0" fill="url(#g33)"/><circle cx="463.9" cy="379.2" r="5.3" fill="url(#gp)"/><circle cx="564.0" cy="433.8" r="6.2" fill="url(#g39)"/><circle cx="623.2" cy="428.5" r="5.5" fill="url(#g19)"/><circle cx="532.7" cy="379.3" r="5.3" fill="url(#gp)"/><circle cx="601.5" cy="379.3" r="5.3" fill="url(#gp)"/><circle cx="600.1" cy="434.6" r="6.0" fill="url(#g34)"/><circle cx="502.8" cy="379.9" r="5.3" fill="url(#gp)"/><circle cx="571.7" cy="379.9" r="5.3" fill="url(#gp)"/><circle cx="528.3" cy="412.3" r="5.3" fill="url(#g13)"/><circle cx="590.4" cy="425.9" r="6.9" fill="url(#g62)"/><circle cx="587.8" cy="446.6" r="5.1" fill="url(#g6)"/><circle cx="573.0" cy="406.4" r="6.3" fill="url(#g42)"/><circle cx="503.5" cy="396.5" r="5.7" fill="url(#g25)"/><circle cx="575.1" cy="438.2" r="5.4" fill="url(#g16)"/><circle cx="473.0" cy="380.5" r="5.3" fill="url(#gp)"/><circle cx="541.8" cy="380.6" r="5.3" fill="url(#gp)"/><circle cx="557.5" cy="402.8" r="6.4" fill="url(#g44)"/><circle cx="610.6" cy="380.6" r="5.3" fill="url(#gp)"/><circle cx="540.1" cy="414.3" r="6.4" fill="url(#g46)"/><circle cx="606.3" cy="452.4" r="6.4" fill="url(#g45)"/><circle cx="620.1" cy="439.4" r="6.3" fill="url(#g42)"/><circle cx="526.9" cy="392.7" r="4.9" fill="url(#g0)"/><circle cx="511.9" cy="381.2" r="5.3" fill="url(#gp)"/><circle cx="617.3" cy="458.4" r="6.3" fill="url(#g41)"/><circle cx="580.7" cy="381.2" r="5.3" fill="url(#gp)"/><circle cx="627.4" cy="393.6" r="5.4" fill="url(#g15)"/><circle cx="563.8" cy="413.2" r="5.0" fill="url(#g4)"/><circle cx="482.1" cy="381.8" r="5.3" fill="url(#gp)"/><circle cx="579.8" cy="417.5" r="6.5" fill="url(#g47)"/><circle cx="550.9" cy="381.9" r="5.3" fill="url(#gp)"/><circle cx="619.7" cy="381.9" r="5.3" fill="url(#gp)"/><circle cx="613.1" cy="412.0" r="7.0" fill="url(#g62)"/><circle cx="611.4" cy="428.8" r="6.9" fill="url(#g60)"/><circle cx="552.9" cy="417.8" r="6.6" fill="url(#g51)"/><circle cx="623.4" cy="418.9" r="5.4" fill="url(#g17)"/><circle cx="521.0" cy="382.5" r="5.3" fill="url(#gp)"/><circle cx="589.8" cy="382.5" r="5.3" fill="url(#gp)"/><circle cx="601.1" cy="418.4" r="6.3" fill="url(#g43)"/><circle cx="516.1" cy="395.8" r="6.2" fill="url(#g40)"/><circle cx="587.0" cy="437.3" r="5.6" fill="url(#g22)"/><circle cx="526.1" cy="402.6" r="5.4" fill="url(#g16)"/><circle cx="595.9" cy="443.3" r="4.9" fill="url(#g2)"/><circle cx="491.1" cy="383.1" r="5.3" fill="url(#gp)"/><circle cx="568.2" cy="423.8" r="6.4" fill="url(#g46)"/><circle cx="560.0" cy="383.2" r="5.3" fill="url(#gp)"/><circle cx="628.8" cy="383.2" r="5.3" fill="url(#gp)"/><circle cx="530.1" cy="383.8" r="5.3" fill="url(#gp)"/><circle cx="598.9" cy="383.8" r="5.3" fill="url(#gp)"/><circle cx="579.1" cy="429.2" r="5.6" fill="url(#g23)"/><circle cx="536.1" cy="405.0" r="4.9" fill="url(#g1)"/><circle cx="500.2" cy="384.4" r="5.3" fill="url(#gp)"/><circle cx="569.0" cy="384.5" r="5.3" fill="url(#gp)"/><circle cx="584.4" cy="404.1" r="6.9" fill="url(#g60)"/><circle cx="624.4" cy="408.8" r="5.0" fill="url(#g2)"/><circle cx="607.0" cy="441.2" r="6.7" fill="url(#g54)"/><circle cx="617.8" cy="448.4" r="5.6" fill="url(#g20)"/><circle cx="539.2" cy="385.1" r="5.3" fill="url(#gp)"/><circle cx="608.0" cy="385.1" r="5.3" fill="url(#gp)"/><circle cx="547.6" cy="407.8" r="5.6" fill="url(#g20)"/><circle cx="590.1" cy="415.1" r="5.3" fill="url(#g11)"/><circle cx="543.2" cy="397.5" r="5.4" fill="url(#g16)"/><circle cx="509.3" cy="385.7" r="5.3" fill="url(#gp)"/><circle cx="578.1" cy="385.8" r="5.3" fill="url(#gp)"/><circle cx="596.8" cy="432.9" r="6.0" fill="url(#g33)"/><circle cx="621.0" cy="427.1" r="5.1" fill="url(#g6)"/><circle cx="567.1" cy="399.6" r="6.4" fill="url(#g46)"/><circle cx="548.3" cy="386.4" r="5.3" fill="url(#gp)"/><circle cx="617.1" cy="386.4" r="5.3" fill="url(#gp)"/><circle cx="599.3" cy="404.7" r="6.3" fill="url(#g41)"/><circle cx="558.9" cy="409.1" r="5.8" fill="url(#g28)"/><circle cx="518.4" cy="387.0" r="5.3" fill="url(#gp)"/><circle cx="587.2" cy="387.1" r="5.3" fill="url(#gp)"/><circle cx="571.5" cy="412.4" r="6.9" fill="url(#g60)"/><circle cx="553.5" cy="399.3" r="5.2" fill="url(#g11)"/><circle cx="557.4" cy="387.7" r="5.3" fill="url(#gp)"/><circle cx="626.2" cy="387.7" r="5.3" fill="url(#gp)"/><circle cx="583.5" cy="422.0" r="4.9" fill="url(#g0)"/><circle cx="617.3" cy="437.3" r="6.3" fill="url(#g43)"/><circle cx="527.5" cy="388.3" r="5.3" fill="url(#gp)"/><circle cx="596.3" cy="388.4" r="5.3" fill="url(#gp)"/><circle cx="606.7" cy="413.9" r="5.8" fill="url(#g26)"/><circle cx="611.8" cy="402.4" r="6.6" fill="url(#g52)"/><circle cx="566.4" cy="389.0" r="5.3" fill="url(#gp)"/><circle cx="607.4" cy="429.3" r="6.1" fill="url(#g37)"/><circle cx="619.2" cy="416.1" r="6.9" fill="url(#g61)"/><circle cx="623.5" cy="400.7" r="5.0" fill="url(#g3)"/><circle cx="597.2" cy="421.5" r="6.5" fill="url(#g48)"/><circle cx="536.6" cy="389.6" r="5.3" fill="url(#gp)"/><circle cx="605.4" cy="389.7" r="5.3" fill="url(#gp)"/><circle cx="575.5" cy="390.3" r="5.3" fill="url(#gp)"/><circle cx="577.1" cy="402.6" r="5.5" fill="url(#g17)"/><circle cx="583.9" cy="412.0" r="5.8" fill="url(#g27)"/><circle cx="545.7" cy="390.9" r="5.3" fill="url(#gp)"/><circle cx="614.5" cy="391.0" r="5.3" fill="url(#gp)"/><circle cx="584.6" cy="391.6" r="5.3" fill="url(#gp)"/><circle cx="617.8" cy="427.4" r="5.6" fill="url(#g21)"/><circle cx="554.7" cy="392.2" r="5.3" fill="url(#gp)"/><circle cx="623.6" cy="392.3" r="5.3" fill="url(#gp)"/><circle cx="593.7" cy="392.9" r="5.3" fill="url(#gp)"/><circle cx="609.7" cy="420.5" r="5.1" fill="url(#g8)"/><circle cx="594.7" cy="407.5" r="6.6" fill="url(#g51)"/><circle cx="563.8" cy="393.5" r="5.3" fill="url(#gp)"/><circle cx="619.8" cy="406.4" r="5.7" fill="url(#g24)"/><circle cx="602.8" cy="394.2" r="5.3" fill="url(#gp)"/><circle cx="572.9" cy="394.8" r="5.3" fill="url(#gp)"/><circle cx="607.9" cy="409.1" r="6.8" fill="url(#g56)"/><circle cx="611.9" cy="395.5" r="5.3" fill="url(#gp)"/><circle cx="618.1" cy="416.6" r="5.2" fill="url(#g8)"/><circle cx="582.0" cy="396.1" r="5.3" fill="url(#gp)"/><circle cx="620.9" cy="396.8" r="5.3" fill="url(#gp)"/><circle cx="591.1" cy="397.4" r="5.3" fill="url(#gp)"/><circle cx="600.2" cy="398.7" r="5.3" fill="url(#gp)"/><circle cx="609.2" cy="400.0" r="5.3" fill="url(#gp)"/><circle cx="618.3" cy="401.3" r="5.3" fill="url(#gp)"/></g><line x1="330.5" y1="598.8" x2="621.8" y2="640.4" stroke="#0000ff" stroke-width="1.0" shape-rendering="crispEdges"/><line x1="621.8" y1="640.4" x2="705.5" y2="495.2" stroke="#0000ff" stroke-width="1.0" shape-rendering="crispEdges"/><line x1="330.5" y1="598.8" x2="330.5" y2="315.3" stroke="#0000ff" stroke-width="1.0" shape-rendering="crispEdges"/><line x1="621.8" y1="640.4" x2="621.8" y2="356.9" stroke="#0000ff" stroke-width="1.0" shape-rendering="crispEdges"/><line x1="330.5" y1="315.3" x2="621.8" y2="356.9" stroke="#0000ff" stroke-width="1.0" shape-rendering="crispEdges"/><line x1="621.8" y1="356.9" x2="705.5" y2="211.7" stroke="#0000ff" stroke-width="1.0" shape-rendering="crispEdges"/><line x1="315.5" y1="308.9" x2="630.1" y2="353.9" stroke="#0000ff" stroke-width="1.0" shape-rendering="crispEdges"/><line x1="630.1" y1="353.9" x2="720.5" y2="197.0" stroke="#0000ff" stroke-width="1.0" shape-rendering="crispEdges"/><line x1="630.1" y1="658.4" x2="630.1" y2="353.9" stroke="#0000ff" stroke-width="1.0" shape-rendering="crispEdges"/><line x1="315.5" y1="613.4" x2="630.1" y2="658.4" stroke="#0000ff" stroke-width="1.0" shape-rendering="crispEdges"/><line x1="315.5" y1="613.4" x2="391.2" y2="624.2" stroke="#262626" stroke-width="1.0" shape-rendering="crispEdges"/><line x1="630.1" y1="658.4" x2="720.5" y2="501.5" stroke="#262626" stroke-width="1.0" shape-rendering="crispEdges"/><line x1="315.5" y1="613.4" x2="315.5" y2="308.9" stroke="#0000ff" stroke-width="1.0" shape-rendering="crispEdges"/><line x1="315.5" y1="392.9" x2="315.5" y2="308.9" stroke="#262626" stroke-width="1.0" shape-rendering="crispEdges"/><line x1="327.2" y1="615.1" x2="323.4" y2="621.6" stroke="#262626"/><line x1="633.4" y1="652.6" x2="640.3" y2="653.6" stroke="#262626"/><line x1="315.5" y1="602.9" x2="308.1" y2="601.8" stroke="#262626"/><line x1="385.4" y1="623.4" x2="381.7" y2="629.9" stroke="#262626"/><line x1="650.2" y1="623.5" x2="657.1" y2="624.5" stroke="#262626"/><line x1="315.5" y1="550.4" x2="308.1" y2="549.3" stroke="#262626"/><line x1="443.7" y1="631.7" x2="439.9" y2="638.2" stroke="#262626"/><line x1="666.9" y1="594.5" x2="673.8" y2="595.5" stroke="#262626"/><line x1="315.5" y1="497.9" x2="308.1" y2="496.8" stroke="#262626"/><line x1="501.9" y1="640.1" x2="498.2" y2="646.5" stroke="#262626"/><line x1="683.7" y1="565.4" x2="690.6" y2="566.4" stroke="#262626"/><line x1="315.5" y1="445.4" x2="308.1" y2="444.3" stroke="#262626"/><line x1="560.2" y1="648.4" x2="556.4" y2="654.9" stroke="#262626"/><line x1="700.4" y1="536.4" x2="707.3" y2="537.4" stroke="#262626"/><line x1="315.5" y1="392.9" x2="308.1" y2="391.8" stroke="#262626"/><line x1="618.4" y1="656.7" x2="614.7" y2="663.2" stroke="#262626"/><line x1="717.2" y1="507.3" x2="724.1" y2="508.3" stroke="#262626"/><line x1="315.5" y1="340.4" x2="308.1" y2="339.3" stroke="#262626"/><rect x="827" y="650.09" width="25" height="8.21" fill="#000087"/><rect x="827" y="642.19" width="25" height="8.21" fill="#000097"/><rect x="827" y="634.28" width="25" height="8.21" fill="#0000a7"/><rect x="827" y="626.38" width="25" height="8.21" fill="#0000b7"/><rect x="827" y="618.47" width="25" height="8.21" fill="#0000c7"/><rect x="827" y="610.56" width="25" height="8.21" fill="#0000d7"/><rect x="827" y="602.66" width="25" height="8.21" fill="#0000e7"/><rect x="827" y="594.75" width="25" height="8.21" fill="#0000f7"/><rect x="827" y="586.84" width="25" height="8.21" fill="#0008ff"/><rect x="827" y="578.94" width="25" height="8.21" fill="#0018ff"/><rect x="827" y="571.03" width="25" height="8.21" fill="#0028ff"/><rect x="827" y="563.12" width="25" height="8.21" fill="#0038ff"/><rect x="827" y="555.22" width="25" height="8.21" fill="#0048ff"/><rect x="827" y="547.31" width="25" height="8.21" fill="#0058ff"/><rect x="827" y="539.41" width="25" height="8.21" fill="#0068ff"/><rect x="827" y="531.50" width="25" height="8.21" fill="#0078ff"/><rect x="827" y="523.59" width="25" height="8.21" fill="#0087ff"/><rect x="827" y="515.69" width="25" height="8.21" fill="#0097ff"/><rect x="827" y="507.78" width="25" height="8.21" fill="#00a7ff"/><rect x="827" y="499.88" width="25" height="8.21" fill="#00b7ff"/><rect x="827" y="491.97" width="25" height="8.21" fill="#00c7ff"/><rect x="827" y="484.06" width="25" height="8.21" fill="#00d7ff"/><rect x="827" y="476.16" width="25" height="8.21" fill="#00e7ff"/><rect x="827" y="468.25" width="25" height="8.21" fill="#00f7ff"/><rect x="827" y="460.34" width="25" height="8.21" fill="#08fff7"/><rect x="827" y="452.44" width="25" height="8.21" fill="#18ffe7"/><rect x="827" y="444.53" width="25" height="8.21" fill="#28ffd7"/><rect x="827" y="436.62" width="25" height="8.21" fill="#38ffc7"/><rect x="827" y="428.72" width="25" height="8.21" fill="#48ffb7"/><rect x="827" y="420.81" width="25" height="8.21" fill="#58ffa7"/><rect x="827" y="412.91" width="25" height="8.21" fill="#68ff97"/><rect x="827" y="405.00" width="25" height="8.21" fill="#78ff87"/><rect x="827" y="397.09" width="25" height="8.21" fill="#87ff78"/><rect x="827" y="389.19" width="25" height="8.21" fill="#97ff68"/><rect x="827" y="381.28" width="25" height="8.21" fill="#a7ff58"/><rect x="827" y="373.38" width="25" height="8.21" fill="#b7ff48"/><rect x="827" y="365.47" width="25" height="8.21" fill="#c7ff38"/><rect x="827" y="357.56" width="25" height="8.21" fill="#d7ff28"/><rect x="827" y="349.66" width="25" height="8.21" fill="#e7ff18"/><rect x="827" y="341.75" width="25" height="8.21" fill="#f7ff08"/><rect x="827" y="333.84" width="25" height="8.21" fill="#fff700"/><rect x="827" y="325.94" width="25" height="8.21" fill="#ffe700"/><rect x="827" y="318.03" width="25" height="8.21" fill="#ffd700"/><rect x="827" y="310.12" width="25" height="8.21" fill="#ffc700"/><rect x="827" y="302.22" width="25" height="8.21" fill="#ffb700"/><rect x="827" y="294.31" width="25" height="8.21" fill="#ffa700"/><rect x="827" y="286.41" width="25" height="8.21" fill="#ff9700"/><rect x="827" y="278.50" width="25" height="8.21" fill="#ff8700"/><rect x="827" y="270.59" width="25" height="8.21" fill="#ff7800"/><rect x="827" y="262.69" width="25" height="8.21" fill="#ff6800"/><rect x="827" y="254.78" width="25" height="8.21" fill="#ff5800"/><rect x="827" y="246.88" width="25" height="8.21" fill="#ff4800"/><rect x="827" y="238.97" width="25" height="8.21" fill="#ff3800"/><rect x="827" y="231.06" width="25" height="8.21" fill="#ff2800"/><rect x="827" y="223.16" width="25" height="8.21" fill="#ff1800"/><rect x="827" y="215.25" width="25" height="8.21" fill="#ff0800"/><rect x="827" y="207.34" width="25" height="8.21" fill="#f70000"/><rect x="827" y="199.44" width="25" height="8.21" fill="#e70000"/><rect x="827" y="191.53" width="25" height="8.21" fill="#d70000"/><rect x="827" y="183.62" width="25" height="8.21" fill="#c70000"/><rect x="827" y="175.72" width="25" height="8.21" fill="#b70000"/><rect x="827" y="167.81" width="25" height="8.21" fill="#a70000"/><rect x="827" y="159.91" width="25" height="8.21" fill="#970000"/><rect x="827" y="152.00" width="25" height="8.21" fill="#870000"/><rect x="827.5" y="152.5" width="25" height="506" fill="none" stroke="#262626"/><line x1="847.5" y1="641.2" x2="852.5" y2="641.2" stroke="#262626"/><line x1="847.5" y1="572.1" x2="852.5" y2="572.1" stroke="#262626"/><line x1="847.5" y1="503.0" x2="852.5" y2="503.0" stroke="#262626"/><line x1="847.5" y1="433.9" x2="852.5" y2="433.9" stroke="#262626"/><line x1="847.5" y1="364.8" x2="852.5" y2="364.8" stroke="#262626"/><line x1="847.5" y1="295.7" x2="852.5" y2="295.7" stroke="#262626"/><line x1="847.5" y1="226.6" x2="852.5" y2="226.6" stroke="#262626"/><line x1="847.5" y1="157.5" x2="852.5" y2="157.5" stroke="#262626"/><g font-family="Liberation Sans, sans-serif" font-size="13" fill="#262626"><text transform="translate(320.6,641.4) scale(0.92,1)" text-anchor="middle">0</text><text transform="translate(650.6,668.6) scale(0.92,1)" text-anchor="middle">0</text><text transform="translate(300.5,607.6) scale(0.92,1)" text-anchor="end">0</text><text transform="translate(379.0,649.3) scale(0.92,1)" text-anchor="middle">20</text><text transform="translate(669.8,640.1) scale(0.92,1)" text-anchor="middle">20</text><text transform="translate(300.5,554.6) scale(0.92,1)" text-anchor="end">20</text><text transform="translate(436.9,658.3) scale(0.92,1)" text-anchor="middle">40</text><text transform="translate(687.2,611.0) scale(0.92,1)" text-anchor="middle">40</text><text transform="translate(300.5,502.1) scale(0.92,1)" text-anchor="end">40</text><text transform="translate(495.3,666.2) scale(0.92,1)" text-anchor="middle">60</text><text transform="translate(703.8,582.2) scale(0.92,1)" text-anchor="middle">60</text><text transform="translate(300.5,450.1) scale(0.92,1)" text-anchor="end">60</text><text transform="translate(553.5,674.6) scale(0.92,1)" text-anchor="middle">80</text><text transform="translate(720.7,552.3) scale(0.92,1)" text-anchor="middle">80</text><text transform="translate(300.5,397.1) scale(0.92,1)" text-anchor="end">80</text><text transform="translate(611.5,682.6) scale(0.92,1)" text-anchor="middle">100</text><text transform="translate(741.1,523.2) scale(0.92,1)" text-anchor="middle">100</text><text transform="translate(300.5,345.6) scale(0.92,1)" text-anchor="end">100</text><text transform="translate(499.8,689.3) scale(1,1)" text-anchor="middle" font-size="16">X</text><text transform="translate(703.8,661.0) scale(1,1)" text-anchor="middle" font-size="16">Y</text><text transform="translate(272,462.5) rotate(-90)" text-anchor="middle" font-size="16">Z</text><text transform="translate(518.0,145.1) scale(1,1)" text-anchor="middle" font-size="15">Diameter</text><text transform="translate(857.5,646.4) scale(0.92,1)" text-anchor="start">3.4</text><text transform="translate(857.5,577.3) scale(0.92,1)" text-anchor="start">3.6</text><text transform="translate(857.5,508.2) scale(0.92,1)" text-anchor="start">3.8</text><text transform="translate(857.5,439.1) scale(0.92,1)" text-anchor="start">4</text><text transform="translate(857.5,370.0) scale(0.92,1)" text-anchor="start">4.2</text><text transform="translate(857.5,300.9) scale(0.92,1)" text-anchor="start">4.4</text><text transform="translate(857.5,231.8) scale(0.92,1)" text-anchor="start">4.6</text><text transform="translate(857.5,162.7) scale(0.92,1)" text-anchor="start">4.8</text></g></svg></body></html>
